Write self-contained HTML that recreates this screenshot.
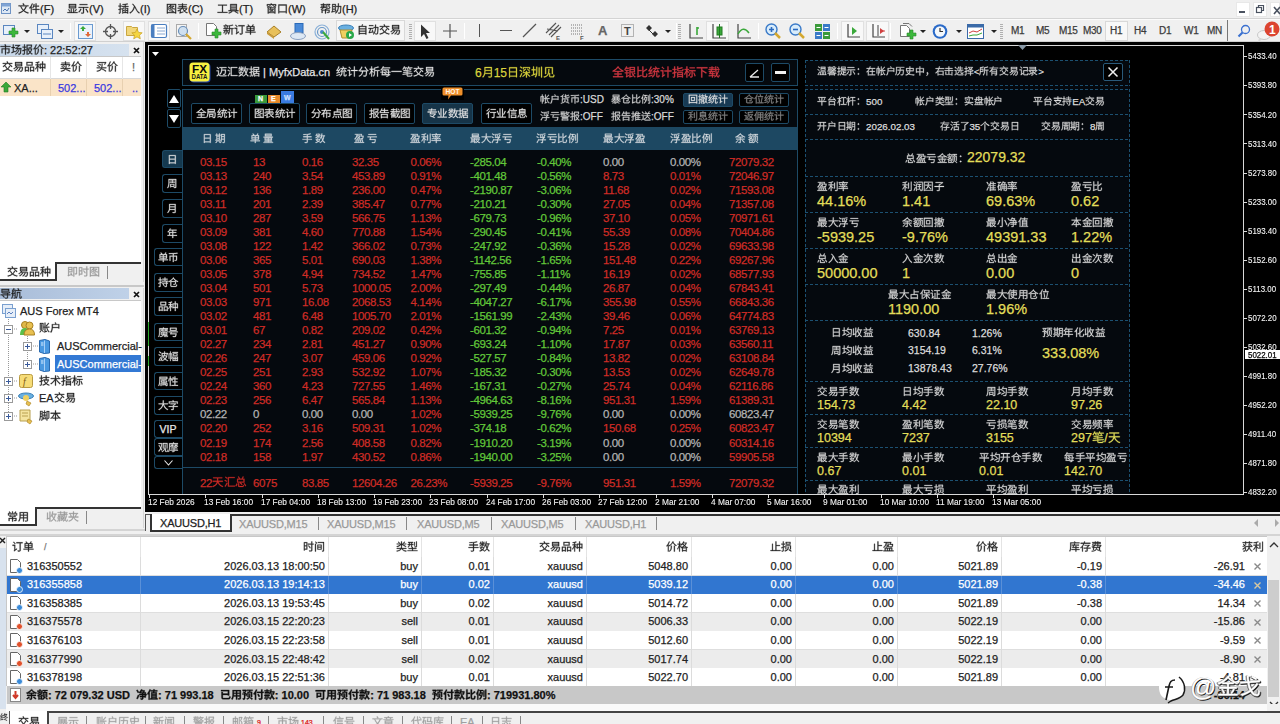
<!DOCTYPE html><html><head><meta charset="utf-8"><style>
*{margin:0;padding:0;box-sizing:border-box}
html,body{width:1280px;height:724px;overflow:hidden;background:#f0f0f0;font-family:"Liberation Sans",sans-serif;font-size:12px;color:#1a1a1a}
.t{position:absolute;white-space:nowrap;-webkit-text-stroke:0.25px currentColor}
.b{position:absolute}
svg{position:absolute;overflow:visible}
.g{position:static;display:inline-block;width:1em;height:1em;vertical-align:-0.12em;fill:currentColor;stroke:currentColor;stroke-width:2.5;overflow:visible}
.g0{d:path("M42 -82C45 -77 48 -71 50 -67L58 -69C57 -73 53 -80 50 -85ZM5 -66V-59H21C26 -44 34 -31 45 -20C34 -11 20 -4 4 1C5 2 8 6 8 8C25 2 39 -5 50 -15C62 -5 75 3 92 7C93 5 95 2 97 0C81 -4 67 -11 56 -20C66 -30 74 -43 80 -59H95V-66ZM50 -25C41 -35 34 -46 28 -59H71C66 -46 59 -34 50 -25Z")}.g1{d:path("M32 -34V-27H60V8H68V-27H95V-34H68V-56H91V-64H68V-83H60V-64H47C48 -68 49 -73 50 -78L43 -79C41 -66 37 -53 31 -45C33 -44 36 -42 37 -41C40 -45 42 -50 45 -56H60V-34ZM27 -84C21 -68 13 -54 3 -44C4 -42 7 -38 8 -36C11 -40 14 -44 17 -48V8H24V-60C28 -67 31 -74 34 -82Z")}.g2{d:path("M24 -57H76V-47H24ZM24 -73H76V-63H24ZM17 -79V-40H83V-79ZM82 -33C79 -27 73 -18 68 -13L74 -10C79 -15 84 -23 88 -30ZM12 -30C16 -23 21 -14 24 -9L30 -12C28 -17 22 -26 18 -32ZM57 -36V-4H42V-36H35V-4H4V3H96V-4H64V-36Z")}.g3{d:path("M23 -35C19 -24 12 -13 4 -6C5 -5 9 -2 10 -1C18 -9 26 -21 31 -33ZM68 -32C76 -22 83 -9 86 -1L93 -4C90 -13 83 -26 75 -35ZM15 -77V-69H85V-77ZM6 -52V-45H46V-2C46 0 46 0 44 0C42 0 35 0 28 0C30 2 31 6 31 8C40 8 46 8 49 7C53 5 54 3 54 -2V-45H94V-52Z")}.g4{d:path("M73 -24V-18H85V-4H69V-54H95V-60H69V-73C77 -74 84 -76 90 -77L86 -83C75 -80 56 -78 40 -77C41 -75 42 -73 42 -71C48 -71 56 -72 62 -72V-60H37V-54H62V-4H46V-18H58V-24H46V-36C50 -38 55 -39 58 -40L55 -47C51 -45 45 -42 40 -41V8H46V3H85V8H92V-43H73V-37H85V-24ZM16 -84V-64H5V-57H16V-34L4 -31L6 -24L16 -27V-1C16 0 16 1 15 1C14 1 11 1 7 1C8 3 9 6 9 8C15 8 18 7 20 6C22 5 23 3 23 -1V-29L34 -32L33 -39L23 -36V-57H33V-64H23V-84Z")}.g5{d:path("M30 -76C36 -71 41 -65 46 -59C39 -31 27 -10 4 1C6 3 10 6 11 7C31 -4 44 -23 52 -49C63 -29 70 -6 93 7C93 5 95 1 96 -2C63 -21 66 -59 34 -82Z")}.g6{d:path("M38 -28C46 -26 56 -23 61 -20L64 -25C59 -28 49 -31 41 -32ZM28 -15C41 -14 59 -10 68 -6L72 -12C62 -15 44 -19 31 -20ZM8 -80V8H16V4H84V8H92V-80ZM16 -3V-73H84V-3ZM41 -71C36 -63 28 -55 19 -50C21 -49 23 -46 24 -45C28 -47 31 -50 34 -52C37 -49 40 -46 44 -43C36 -39 26 -36 17 -35C19 -33 20 -30 21 -28C31 -31 41 -34 51 -40C59 -35 69 -32 78 -30C79 -31 81 -34 82 -35C74 -37 65 -40 57 -43C64 -48 71 -54 75 -61L71 -63L70 -63H44C45 -65 46 -67 48 -69ZM38 -56 38 -57H64C61 -53 56 -50 51 -46C46 -49 41 -53 38 -56Z")}.g7{d:path("M25 8C28 6 31 5 59 -4C59 -5 58 -8 58 -10L34 -3V-25C40 -29 45 -34 49 -38C57 -18 71 -2 92 5C93 3 95 0 97 -2C87 -5 78 -10 71 -16C78 -20 85 -25 91 -30L85 -35C80 -30 73 -25 67 -21C63 -26 59 -32 57 -38H93V-45H54V-54H86V-60H54V-69H90V-75H54V-84H46V-75H10V-69H46V-60H16V-54H46V-45H6V-38H40C30 -30 16 -22 4 -18C5 -17 7 -14 9 -12C14 -14 20 -17 26 -20V-6C26 -2 24 0 22 1C23 3 25 6 25 8Z")}.g8{d:path("M5 -7V0H95V-7H54V-65H90V-73H10V-65H46V-7Z")}.g9{d:path("M60 -8C72 -3 83 3 90 8L96 2C89 -2 77 -9 65 -14ZM33 -13C27 -8 14 -1 4 3C6 4 8 6 10 8C20 4 32 -2 40 -9ZM21 -79V-21H5V-14H95V-21H80V-79ZM28 -21V-30H73V-21ZM28 -59H73V-50H28ZM28 -64V-73H73V-64ZM28 -44H73V-36H28Z")}.g10{d:path("M37 -67C29 -61 18 -56 9 -53L12 -48C23 -51 34 -57 43 -64ZM58 -63C68 -59 81 -52 87 -47L92 -52C85 -57 72 -63 62 -67ZM43 -57C42 -54 39 -50 37 -47H16V8H24V4H77V8H85V-47H45C47 -50 49 -53 51 -56ZM24 -2V-41H77V-2ZM36 -22C40 -20 45 -18 49 -16C43 -12 35 -10 28 -8C29 -7 30 -5 31 -3C39 -5 48 -9 55 -13C60 -10 64 -8 68 -5L71 -9C68 -12 64 -14 59 -17C64 -21 68 -26 70 -32L66 -34L65 -34H43C44 -35 45 -37 45 -39L40 -40C37 -35 33 -29 27 -24C29 -24 31 -22 32 -21C35 -23 37 -26 39 -29H62C60 -25 57 -22 54 -20C49 -22 45 -24 40 -26ZM43 -83C44 -80 45 -78 46 -76H8V-60H15V-70H84V-60H92V-76H55C54 -78 52 -82 50 -84Z")}.g11{d:path("M13 -74V6H20V-3H80V5H88V-74ZM20 -11V-66H80V-11Z")}.g12{d:path("M27 -84V-76H7V-70H27V-63H9V-57H27V-54C27 -53 27 -51 27 -49H5V-43H24C21 -38 15 -34 7 -31C9 -30 11 -27 12 -26C23 -30 29 -37 32 -43H54V-49H34C35 -51 35 -53 35 -54V-57H51V-63H35V-70H53V-76H35V-84ZM58 -80V-30H66V-73H83C80 -69 77 -64 73 -60C82 -55 86 -50 86 -47C86 -44 85 -43 83 -42C82 -42 80 -42 79 -42C76 -41 72 -41 68 -42C69 -40 70 -37 70 -36C74 -35 79 -35 82 -36C84 -36 86 -36 88 -37C91 -39 93 -42 93 -46C93 -51 90 -55 81 -61C86 -66 90 -72 94 -77L89 -80L87 -80ZM15 -26V3H23V-19H46V8H54V-19H79V-6C79 -4 78 -4 77 -4C75 -4 69 -4 63 -4C64 -2 65 0 66 2C74 2 79 2 82 1C86 0 87 -2 87 -6V-26H54V-34H46V-26Z")}.g13{d:path("M63 -84C63 -76 63 -69 63 -61H47V-54H63C61 -30 56 -9 37 3C39 4 41 6 43 8C63 -5 68 -28 70 -54H86C85 -18 84 -4 81 -1C80 0 79 0 77 0C75 0 70 0 64 0C66 2 66 5 67 7C72 7 77 8 80 7C84 7 86 6 88 3C91 -1 92 -15 93 -58C93 -58 93 -61 93 -61H70C71 -69 71 -76 71 -84ZM3 -10 5 -2C17 -5 34 -8 49 -12L49 -19L43 -18V-79H11V-11ZM17 -12V-30H36V-16ZM17 -51H36V-36H17ZM17 -58V-72H36V-58Z")}.g14{d:path("M36 -21C39 -16 43 -10 44 -5L50 -8C48 -12 44 -19 41 -24ZM14 -24C12 -17 8 -11 4 -7C6 -6 8 -4 9 -3C13 -8 17 -15 20 -22ZM55 -74V-40C55 -27 54 -10 46 2C48 3 51 6 52 7C61 -6 62 -26 62 -40V-43H78V8H85V-43H96V-50H62V-69C73 -71 84 -74 93 -77L87 -82C79 -79 66 -76 55 -74ZM21 -83C23 -80 25 -76 26 -74H6V-67H50V-74H34C32 -77 30 -81 28 -84ZM38 -67C36 -62 34 -55 32 -51H5V-44H25V-34H5V-27H25V-2C25 -1 25 0 24 0C23 0 20 0 16 0C17 1 18 4 18 6C23 6 27 6 29 5C31 4 32 2 32 -2V-27H51V-34H32V-44H52V-51H39C41 -55 43 -60 45 -65ZM13 -65C15 -61 16 -55 16 -51L23 -52C22 -56 21 -62 19 -66Z")}.g15{d:path("M11 -77C17 -72 23 -65 27 -60L32 -66C29 -70 22 -77 16 -82ZM20 6C22 4 25 1 46 -13C45 -15 44 -18 44 -20L29 -10V-53H5V-45H22V-10C22 -5 19 -2 17 -1C18 1 20 4 20 6ZM40 -76V-68H70V-3C70 -1 70 -1 68 0C66 0 58 0 51 -1C52 2 54 5 54 8C63 8 70 7 73 6C77 5 78 2 78 -3V-68H96V-76Z")}.g16{d:path("M22 -44H46V-33H22ZM54 -44H78V-33H54ZM22 -60H46V-50H22ZM54 -60H78V-50H54ZM71 -84C69 -78 64 -72 61 -67H37L41 -69C39 -73 34 -79 30 -84L24 -81C27 -76 31 -71 33 -67H15V-26H46V-17H5V-10H46V8H54V-10H95V-17H54V-26H86V-67H69C72 -71 76 -76 79 -81Z")}.g17{d:path("M24 -41H77V-26H24ZM24 -48V-63H77V-48ZM24 -19H77V-5H24ZM46 -84C45 -80 43 -75 42 -70H16V8H24V2H77V8H85V-70H49C51 -74 53 -79 54 -83Z")}.g18{d:path("M9 -76V-69H48V-76ZM65 -82C65 -75 65 -68 65 -61H51V-54H65C64 -31 60 -10 46 2C48 4 50 6 52 8C66 -6 71 -29 72 -54H87C86 -18 85 -5 82 -2C81 -1 80 0 78 0C76 0 71 0 65 -1C66 1 67 4 67 6C73 7 78 7 81 6C84 6 86 5 88 3C92 -2 93 -16 94 -57C94 -58 94 -61 94 -61H72C73 -68 73 -75 73 -82ZM9 -4 9 -4V-4C11 -6 15 -7 43 -13L45 -6L51 -9C49 -16 45 -28 41 -36L35 -35C37 -30 39 -25 41 -19L17 -14C21 -23 24 -35 27 -45H49V-52H5V-45H19C17 -33 12 -22 11 -18C9 -14 8 -12 6 -11C7 -10 8 -6 9 -4Z")}.g19{d:path("M32 -60C26 -52 16 -44 7 -39C9 -38 12 -35 13 -34C22 -39 32 -48 39 -57ZM62 -56C71 -49 82 -40 87 -33L94 -38C88 -44 77 -54 68 -60ZM35 -42 28 -40C32 -30 38 -22 45 -15C34 -7 21 -2 5 1C6 3 8 6 9 8C25 4 39 -2 50 -10C61 -2 74 4 91 7C92 5 94 2 96 0C80 -2 66 -7 56 -15C63 -22 69 -30 73 -41L65 -43C62 -34 57 -26 50 -20C44 -26 39 -34 35 -42ZM42 -82C44 -79 47 -74 48 -70H7V-63H93V-70H52L56 -72C55 -75 52 -81 49 -85Z")}.g20{d:path("M26 -57H75V-47H26ZM26 -73H75V-63H26ZM19 -79V-41H30C23 -32 14 -24 4 -18C6 -17 8 -14 10 -13C15 -16 21 -21 26 -26H40C33 -15 23 -6 12 1C14 2 17 4 18 6C30 -2 41 -13 48 -26H62C57 -14 49 -3 40 4C42 5 45 7 46 8C56 1 64 -12 70 -26H82C80 -8 78 -1 76 1C75 2 74 2 73 2C71 2 66 2 61 1C62 3 63 6 63 8C68 8 73 8 76 8C79 8 81 7 83 5C86 2 88 -7 90 -29C90 -30 90 -32 90 -32H32C34 -35 37 -38 38 -41H83V-79Z")}.g21{d:path("M41 -82C44 -78 46 -73 48 -69H5V-62H46V-48H15V-4H22V-41H46V8H54V-41H78V-13C78 -12 78 -11 76 -11C74 -11 68 -11 62 -11C63 -9 64 -6 64 -4C73 -4 78 -4 82 -5C85 -6 86 -9 86 -13V-48H54V-62H95V-69H55L56 -70C55 -74 52 -80 49 -85Z")}.g22{d:path("M41 -43C42 -44 45 -45 50 -45H57C53 -34 46 -24 36 -18L35 -24L24 -20V-52H35V-60H24V-83H17V-60H5V-52H17V-18C12 -16 7 -14 4 -13L6 -5C15 -9 26 -13 36 -17L36 -18C38 -17 41 -15 42 -14C51 -21 60 -32 64 -45H72C66 -23 55 -7 38 4C40 5 42 7 44 8C61 -3 72 -21 79 -45H86C84 -15 82 -4 80 -1C79 0 78 0 76 0C74 0 71 0 66 0C68 2 68 5 69 7C73 7 77 7 79 7C82 7 84 6 86 4C90 0 92 -13 94 -48C94 -49 94 -52 94 -52H54C64 -58 74 -66 85 -76L79 -80L78 -79H38V-72H70C61 -64 51 -58 48 -55C44 -53 40 -51 38 -50C39 -49 40 -45 41 -43Z")}.g23{d:path("M42 -81V8H50V-40H53C57 -29 62 -19 68 -11C63 -6 57 -1 50 3C52 4 54 6 55 8C62 5 68 0 73 -6C78 0 84 4 91 8C92 6 95 3 96 1C90 -2 83 -6 78 -11C85 -21 90 -33 93 -45L88 -47L86 -46H50V-74H82C81 -65 81 -61 80 -59C79 -59 78 -59 75 -59C73 -59 67 -59 60 -59C61 -58 62 -55 62 -53C69 -53 75 -52 78 -53C82 -53 84 -54 86 -55C88 -58 89 -63 90 -77C90 -78 90 -81 90 -81ZM60 -40H84C82 -32 78 -24 73 -17C68 -24 63 -31 60 -40ZM19 -84V-64H5V-56H19V-35L3 -31L5 -23L19 -27V-1C19 0 18 1 17 1C15 1 10 1 4 1C6 3 6 6 7 8C15 8 20 8 22 7C25 5 26 3 26 -1V-30L39 -33L38 -40L26 -37V-56H38V-64H26V-84Z")}.g24{d:path("M72 -45V8H80V-45ZM44 -45V-31C44 -22 43 -6 28 4C30 5 33 7 34 9C50 -3 52 -20 52 -31V-45ZM60 -84C55 -72 44 -56 26 -46C27 -45 30 -42 30 -41C45 -49 55 -60 62 -72C70 -60 81 -48 92 -42C93 -44 95 -46 97 -48C85 -54 73 -66 66 -78L68 -83ZM27 -84C22 -69 13 -54 4 -44C5 -42 7 -38 8 -37C11 -40 14 -44 17 -48V8H24V-60C28 -67 31 -74 34 -82Z")}.g25{d:path("M30 -73H70V-54H30ZM23 -80V-46H78V-80ZM8 -36V8H16V3H36V7H44V-36ZM16 -5V-29H36V-5ZM55 -36V8H62V3H85V7H92V-36ZM62 -5V-29H85V-5Z")}.g26{d:path("M65 -56V-32H51V-56ZM73 -56H87V-32H73ZM65 -84V-63H44V-18H51V-24H65V8H73V-24H87V-19H94V-63H73V-84ZM37 -83C29 -79 16 -76 5 -74C6 -73 6 -70 7 -69C11 -69 16 -70 21 -71V-56H5V-49H20C16 -37 9 -24 2 -17C4 -15 5 -12 6 -10C11 -16 17 -26 21 -37V8H28V-38C31 -34 35 -27 37 -24L42 -30C40 -33 31 -44 28 -47V-49H41V-56H28V-72C33 -74 37 -75 41 -77Z")}.g27{d:path("M23 -45C30 -42 38 -39 42 -36L46 -40C42 -44 34 -47 27 -49ZM13 -35C20 -33 28 -29 32 -26L36 -31C32 -34 24 -38 17 -40ZM54 -7C68 -3 82 3 91 8L95 2C86 -3 71 -9 58 -13ZM8 -58V-51H83C81 -47 78 -43 76 -40L82 -37C86 -42 90 -49 93 -56L88 -58L86 -58H54V-67H87V-73H54V-84H46V-73H14V-67H46V-58ZM52 -48C52 -39 51 -31 49 -25H6V-18H46C40 -8 29 -2 7 2C8 3 10 6 10 8C37 4 49 -5 54 -18H94V-25H57C59 -32 59 -39 60 -48Z")}.g28{d:path("M53 -12C66 -6 80 2 88 8L93 2C85 -4 70 -12 57 -17ZM22 -60C29 -56 37 -52 42 -48L46 -54C42 -57 33 -62 26 -64ZM11 -45C18 -42 26 -38 30 -34L35 -40C30 -43 22 -47 15 -50ZM7 -30V-23H46C41 -11 30 -3 5 2C7 3 9 6 9 8C37 3 49 -7 54 -23H94V-30H56C58 -40 59 -51 59 -64H52C52 -51 51 -39 49 -30ZM85 -78V-77H11V-70H82C80 -65 77 -60 75 -56L81 -53C85 -59 90 -68 93 -76L88 -78L86 -78Z")}.g29{d:path("M42 -52V-38H18V-52ZM42 -59H18V-72H42ZM32 -23C33 -20 35 -17 37 -13L18 -7V-32H49V-79H11V-9C11 -5 8 -4 6 -3C8 -1 9 3 10 5C12 3 15 2 40 -7C42 -3 44 0 45 3L52 -1C49 -7 43 -18 38 -26ZM58 -78V8H66V-71H84V-20C84 -19 84 -19 82 -19C81 -19 76 -19 71 -19C72 -17 73 -14 73 -12C80 -12 85 -12 88 -13C91 -14 91 -16 91 -20V-78Z")}.g30{d:path("M47 -45C53 -38 60 -27 63 -21L69 -25C66 -31 59 -41 54 -48ZM32 -40V-17H15V-40ZM32 -47H15V-69H32ZM8 -76V-2H15V-11H39V-76ZM76 -84V-64H44V-57H76V-3C76 -1 76 -1 74 -1C71 0 64 0 56 -1C57 2 58 5 59 7C69 7 75 7 79 6C83 4 84 2 84 -3V-57H96V-64H84V-84Z")}.g31{d:path("M21 -18C27 -13 34 -5 37 0L43 -5C40 -10 33 -17 27 -22H65V-1C65 0 64 1 62 1C60 1 53 1 46 1C47 3 48 6 48 8C58 8 64 8 68 6C71 6 72 4 72 -1V-22H94V-29H72V-37H65V-29H6V-22H26ZM14 -77V-51C14 -41 18 -39 35 -39C39 -39 71 -39 75 -39C88 -39 91 -42 92 -52C90 -52 87 -53 85 -54C84 -47 83 -46 74 -46C67 -46 40 -46 34 -46C23 -46 21 -47 21 -51V-56H83V-80H14ZM21 -73H75V-63H21Z")}.g32{d:path("M20 -59C22 -55 25 -49 26 -45L31 -47C30 -51 27 -57 25 -61ZM20 -28C22 -24 26 -17 27 -13L32 -15C30 -19 27 -26 24 -30ZM60 -83C62 -78 65 -72 66 -67L74 -70C72 -74 69 -80 66 -85ZM44 -67V-61H95V-67ZM53 -51V-29C53 -19 52 -5 42 4C44 5 46 7 48 8C58 -2 60 -17 60 -29V-44H77V-5C77 2 77 4 79 5C80 6 82 7 84 7C85 7 88 7 89 7C90 7 92 7 93 6C95 5 95 4 96 2C96 0 97 -6 97 -11C95 -11 93 -12 92 -14C92 -8 92 -5 91 -3C91 -1 91 0 90 0C90 0 89 0 88 0C88 0 86 0 86 0C85 0 85 0 84 0C84 0 84 -2 84 -4V-51ZM35 -66V-40H18V-66ZM4 -40V-34H11C11 -22 10 -6 3 5C5 6 8 8 9 9C16 -3 18 -21 18 -34H35V-1C35 0 34 1 33 1C32 1 28 1 24 1C25 2 26 5 26 7C32 7 36 7 38 6C40 5 41 3 41 -1V-72H26C28 -75 29 -79 31 -83L23 -85C22 -81 21 -76 20 -72H11V-40Z")}.g33{d:path("M21 -67V-38C21 -25 20 -7 4 3C5 4 7 6 8 7C25 -4 27 -23 27 -38V-67ZM25 -13C30 -8 35 0 37 5L42 1C40 -4 34 -11 30 -16ZM8 -79V-18H14V-73H34V-18H40V-79ZM84 -80C79 -70 71 -60 62 -54C63 -52 66 -50 67 -48C76 -55 85 -66 91 -77ZM50 8C52 7 54 6 74 -2C73 -4 73 -6 73 -8L58 -3V-38H67C71 -19 79 -3 91 6C93 4 95 1 96 0C85 -7 78 -22 74 -38H94V-45H58V-82H51V-45H42V-38H51V-4C51 0 49 2 47 2C48 4 50 7 50 8Z")}.g34{d:path("M25 -62H77V-41H25L25 -47ZM44 -83C46 -78 48 -73 50 -68H17V-47C17 -32 16 -11 3 4C5 5 8 7 10 9C20 -3 23 -20 24 -34H77V-28H84V-68H53L57 -70C56 -74 54 -80 51 -84Z")}.g35{d:path("M61 -84V-68H38V-61H61V-46H40V-39H43L43 -39C47 -28 52 -19 59 -12C51 -6 42 -1 32 1C34 3 35 6 36 8C46 5 56 0 65 -6C72 0 81 5 92 8C93 6 95 3 96 2C86 -1 78 -5 70 -11C80 -20 87 -31 91 -44L86 -46L85 -46H69V-61H93V-68H69V-84ZM50 -39H81C78 -30 72 -22 65 -16C59 -23 54 -30 50 -39ZM18 -84V-64H5V-57H18V-35C12 -33 8 -32 4 -31L6 -24L18 -27V-1C18 0 17 1 16 1C15 1 10 1 6 1C6 3 8 6 8 8C15 8 19 8 22 6C24 5 25 3 25 -1V-30L37 -33L36 -40L25 -37V-57H36V-64H25V-84Z")}.g36{d:path("M61 -78C67 -73 75 -67 79 -63L84 -68C80 -72 72 -78 66 -82ZM46 -84V-59H7V-51H44C35 -34 19 -18 4 -10C5 -8 8 -6 9 -4C23 -11 36 -25 46 -40V8H54V-44C64 -28 78 -13 90 -4C92 -6 94 -9 96 -11C83 -19 67 -36 57 -51H93V-59H54V-84Z")}.g37{d:path("M84 -78C76 -75 63 -71 52 -69V-84H44V-55C44 -46 47 -44 59 -44C61 -44 80 -44 82 -44C92 -44 94 -48 96 -61C94 -61 90 -63 89 -64C88 -53 87 -51 82 -51C78 -51 62 -51 59 -51C53 -51 52 -52 52 -55V-62C64 -65 79 -68 89 -72ZM51 -13H84V-3H51ZM51 -20V-30H84V-20ZM44 -36V8H51V3H84V8H91V-36ZM18 -84V-64H4V-57H18V-35L3 -31L5 -24L18 -28V-1C18 1 18 1 16 1C15 1 11 1 6 1C7 3 8 6 9 8C16 8 20 8 22 7C25 5 26 3 26 -1V-30L39 -34L38 -41L26 -37V-57H38V-64H26V-84Z")}.g38{d:path("M47 -76V-69H90V-76ZM78 -32C83 -22 87 -10 89 -2L96 -4C94 -12 89 -25 84 -34ZM49 -34C46 -24 42 -13 36 -6C38 -5 41 -3 42 -2C48 -9 53 -21 56 -33ZM42 -52V-45H64V-2C64 0 63 0 62 0C60 0 56 0 50 0C52 2 53 5 53 8C60 8 64 7 67 6C70 5 71 3 71 -2V-45H96V-52ZM20 -84V-63H5V-56H19C15 -43 9 -29 2 -22C4 -20 6 -16 7 -14C12 -21 16 -31 20 -42V8H28V-44C31 -40 35 -33 37 -30L41 -36C39 -39 31 -50 28 -53V-56H41V-63H28V-84Z")}.g39{d:path("M9 -80V-44C9 -30 8 -9 3 5C4 5 7 7 8 8C12 -2 14 -14 14 -26H26V-1C26 0 26 1 25 1C24 1 20 1 17 1C18 2 18 6 19 7C24 7 27 7 30 6C32 5 32 3 32 -1V-80ZM15 -74H26V-57H15ZM15 -50H26V-33H14L15 -44ZM69 -78V8H76V-71H87V-17C87 -16 86 -16 85 -16C84 -16 81 -16 78 -16C79 -14 80 -11 80 -9C85 -9 88 -9 90 -10C93 -11 93 -14 93 -17V-78ZM38 -3 38 -3C39 -4 42 -4 60 -8C60 -5 61 -3 61 -2L66 -4C66 -10 62 -21 59 -30L54 -28C56 -24 57 -18 59 -14L44 -11C47 -19 50 -28 52 -38H66V-45H54V-60H64V-67H54V-84H48V-67H37V-60H48V-45H35V-38H46C44 -28 40 -18 39 -15C38 -12 37 -9 35 -9C36 -7 37 -4 38 -3Z")}.g40{d:path("M46 -84V-63H6V-55H37C29 -38 17 -22 4 -14C6 -12 8 -10 9 -8C24 -18 37 -36 44 -55H46V-18H23V-11H46V8H54V-11H77V-18H54V-55H55C63 -36 76 -18 91 -8C92 -10 95 -13 96 -15C83 -23 70 -38 63 -55H94V-63H54V-84Z")}.g41{d:path("M31 -49H69V-39H31ZM15 -25V4H23V-18H47V8H55V-18H78V-4C78 -3 78 -3 76 -3C75 -3 70 -3 64 -3C64 -1 66 2 66 4C74 4 79 4 82 3C85 2 86 0 86 -4V-25H55V-34H77V-55H24V-34H47V-25ZM17 -80C20 -77 23 -72 25 -68H9V-47H16V-62H85V-47H92V-68H54V-84H47V-68H26L32 -71C30 -75 27 -80 24 -83ZM76 -83C74 -80 71 -74 68 -71L74 -68C77 -72 81 -76 84 -80Z")}.g42{d:path("M15 -77V-41C15 -27 14 -9 3 4C5 4 8 7 9 8C17 0 20 -12 22 -23H47V7H54V-23H81V-2C81 0 81 0 79 0C77 0 70 0 63 0C64 2 65 6 66 7C75 8 81 7 84 6C88 5 89 3 89 -2V-77ZM23 -70H47V-54H23ZM81 -70V-54H54V-70ZM23 -47H47V-30H22C23 -34 23 -37 23 -41ZM81 -47V-30H54V-47Z")}.g43{d:path("M59 -57H80C78 -45 75 -34 70 -25C65 -34 61 -45 58 -56ZM58 -84C55 -67 50 -50 41 -40C43 -39 45 -35 46 -34C49 -38 52 -42 54 -47C57 -36 61 -26 66 -18C60 -10 53 -3 43 2C44 4 47 7 48 8C57 3 64 -4 70 -12C76 -3 83 3 91 8C92 6 95 3 96 2C88 -3 81 -10 75 -18C81 -28 85 -42 88 -57H96V-64H61C63 -70 64 -76 65 -83ZM9 -10C11 -12 14 -13 32 -20V8H40V-82H32V-27L17 -22V-73H10V-24C10 -20 8 -18 6 -17C7 -15 9 -12 9 -10Z")}.g44{d:path("M83 -47C82 -38 79 -30 76 -23C75 -31 74 -41 73 -53H95V-60H89L91 -62C90 -64 85 -68 82 -70L77 -66C80 -64 83 -62 85 -60H73L73 -66H70V-71H94V-77H70V-84H62V-77H37V-84H30V-77H6V-71H30V-64H37V-71H62V-63H66L66 -60H23V-42H14V-59H9V-33H14V-36H23V-32V-28H4V-21H10V-17C10 -11 9 -2 3 5C5 6 7 7 8 8C14 1 15 -10 15 -17V-21H22C22 -12 20 -3 16 5C18 6 21 7 22 8C28 -3 29 -20 29 -32V-53H66C67 -37 69 -24 71 -14C69 -11 67 -8 65 -6V-9H54V-16H64V-35H54V-42H64V-47H34V2H40V-4H63C60 -1 57 2 54 4C56 5 59 7 60 8C65 4 70 -1 74 -6C77 3 82 8 87 8C93 8 96 6 97 -8C95 -8 93 -10 91 -11C91 -1 90 1 88 2C84 2 81 -3 78 -13C84 -22 88 -33 90 -46ZM48 -9H40V-16H48ZM48 -35H40V-42H48ZM40 -30H58V-21H40Z")}.g45{d:path("M18 -57C21 -51 25 -43 26 -38L33 -40C32 -45 28 -53 24 -59ZM74 -60C71 -54 67 -45 63 -40L69 -38C73 -43 78 -51 81 -57ZM46 -84V-69H9V-62H46C46 -52 46 -44 44 -37H6V-29H42C37 -15 27 -5 5 2C6 3 8 6 9 8C34 1 45 -11 50 -28C58 -10 71 2 90 8C92 6 94 2 95 1C77 -4 64 -14 57 -29H94V-37H52C53 -44 54 -52 54 -62H91V-69H54L54 -84Z")}.g46{d:path("M6 -75C12 -70 19 -63 23 -59L29 -64C25 -68 17 -75 11 -79ZM26 -48H5V-41H19V-10C14 -8 10 -4 5 0L10 7C15 2 19 -4 23 -4C25 -4 28 -1 32 2C39 5 48 6 59 6C69 6 86 6 94 5C94 3 95 -1 96 -3C86 -2 71 -1 60 -1C49 -1 40 -2 34 -5C30 -7 28 -9 26 -10ZM32 -77V-70H49C49 -48 46 -26 30 -14C32 -13 34 -11 36 -9C48 -18 53 -32 55 -48H82C81 -27 80 -19 78 -17C77 -16 76 -16 75 -16C73 -16 68 -16 63 -16C64 -14 65 -11 65 -9C70 -9 75 -9 78 -9C81 -10 83 -10 84 -12C87 -16 89 -25 90 -51C90 -52 90 -55 90 -55H56C56 -60 57 -65 57 -70H95V-77Z")}.g47{d:path("M9 -77C15 -73 22 -68 26 -64L31 -70C27 -73 20 -78 14 -82ZM4 -49C10 -46 18 -41 22 -38L26 -44C22 -47 15 -51 9 -54ZM6 1 13 6C18 -3 25 -15 30 -25L24 -30C18 -19 11 -6 6 1ZM93 -78H34V3H95V-4H42V-71H93Z")}.g48{d:path("M44 -82C42 -78 39 -72 37 -69L42 -66C44 -70 48 -75 51 -79ZM9 -79C11 -75 14 -70 15 -66L21 -69C20 -72 17 -78 14 -82ZM41 -26C39 -21 36 -16 32 -13C28 -14 24 -16 20 -18C22 -20 23 -23 25 -26ZM11 -15C16 -13 21 -11 26 -8C20 -4 12 0 4 1C5 3 7 5 8 7C17 5 25 1 33 -5C36 -3 39 -1 41 1L46 -4C44 -6 41 -8 38 -10C43 -15 47 -22 50 -31L45 -33L44 -32H28L30 -38L23 -39C23 -37 22 -34 21 -32H7V-26H18C15 -22 13 -18 11 -15ZM26 -84V-65H5V-59H23C19 -53 11 -46 4 -44C5 -42 7 -40 8 -38C14 -41 21 -47 26 -53V-40H33V-54C38 -50 44 -46 46 -44L50 -49C48 -51 39 -56 34 -59H53V-65H33V-84ZM63 -83C60 -66 56 -49 48 -38C50 -37 53 -35 54 -34C56 -37 59 -42 61 -47C63 -37 66 -28 69 -20C64 -10 56 -3 45 2C46 4 49 7 49 8C60 3 67 -4 73 -13C78 -4 84 2 92 7C93 5 96 3 97 1C89 -3 82 -11 77 -20C82 -30 86 -43 88 -58H95V-65H66C68 -70 69 -76 70 -82ZM81 -58C79 -46 77 -36 73 -28C70 -37 67 -47 65 -58Z")}.g49{d:path("M48 -24V8H55V4H86V8H93V-24H73V-36H96V-43H73V-54H92V-80H40V-49C40 -34 39 -12 28 4C30 4 33 7 34 8C43 -4 46 -21 46 -36H66V-24ZM47 -73H85V-60H47ZM47 -54H66V-43H47L47 -49ZM55 -2V-17H86V-2ZM17 -84V-64H4V-57H17V-35C12 -33 7 -32 3 -31L5 -24L17 -27V-1C17 0 16 0 15 0C14 0 10 0 6 0C6 2 8 6 8 7C14 7 18 7 20 6C23 5 24 3 24 -1V-30L35 -33L34 -40L24 -37V-57H35V-64H24V-84Z")}.g50{d:path("M70 -35V-4C70 4 72 6 78 6C80 6 86 6 87 6C94 6 95 2 96 -11C94 -12 91 -13 89 -14C89 -2 89 -1 86 -1C85 -1 81 -1 80 -1C78 -1 77 -1 77 -4V-35ZM51 -35C50 -15 48 -4 32 2C33 3 36 6 36 8C54 0 58 -13 58 -35ZM4 -5 6 2C15 -1 27 -4 38 -8L37 -15C25 -11 12 -7 4 -5ZM60 -82C61 -78 64 -73 65 -70H41V-63H59C54 -56 47 -47 45 -45C43 -43 41 -43 39 -42C40 -40 41 -37 41 -35C44 -36 48 -36 84 -40C86 -37 88 -35 89 -33L95 -36C92 -42 85 -51 80 -58L74 -55C76 -52 79 -49 81 -46L53 -44C58 -49 63 -57 68 -63H95V-70H66L72 -72C71 -75 69 -80 66 -84ZM6 -42C8 -43 10 -44 22 -45C18 -39 14 -34 12 -32C9 -28 6 -26 4 -26C5 -24 6 -20 7 -18C9 -20 12 -21 37 -26C37 -28 37 -30 37 -33L18 -29C26 -38 33 -48 39 -59L33 -63C31 -60 29 -56 26 -52L14 -51C20 -60 26 -70 31 -81L23 -84C19 -72 12 -59 9 -56C7 -53 5 -50 3 -50C4 -48 6 -44 6 -42Z")}.g51{d:path("M14 -78C19 -73 26 -66 30 -62L35 -67C31 -71 24 -78 19 -82ZM5 -53V-45H20V-9C20 -5 17 -2 16 -1C17 1 19 4 20 6C21 4 24 2 43 -12C42 -13 41 -16 40 -18L28 -10V-53ZM63 -84V-51H37V-43H63V8H70V-43H96V-51H70V-84Z")}.g52{d:path("M67 -82 60 -79C68 -65 80 -48 90 -39C92 -41 94 -44 96 -46C86 -53 74 -69 67 -82ZM32 -82C27 -67 16 -53 4 -44C6 -43 10 -40 11 -38C14 -41 16 -43 19 -46V-39H38C36 -22 30 -6 6 2C8 4 10 6 11 8C37 -1 43 -19 46 -39H73C72 -14 70 -4 68 -1C67 0 66 0 64 0C61 0 55 0 49 -1C50 1 51 4 51 7C58 7 64 7 67 7C70 7 73 6 75 3C78 0 80 -12 81 -43C81 -44 81 -46 81 -46H19C28 -55 35 -67 40 -80Z")}.g53{d:path("M48 -73V-42C48 -28 47 -9 38 4C40 5 43 7 44 8C54 -6 55 -27 55 -42V-43H74V8H81V-43H96V-50H55V-68C67 -70 80 -73 90 -77L84 -83C75 -79 61 -75 48 -73ZM21 -84V-63H6V-55H20C17 -42 10 -26 3 -18C4 -16 6 -13 7 -11C12 -17 17 -28 21 -39V8H28V-41C32 -36 36 -29 37 -26L42 -32C40 -35 32 -46 28 -50V-55H43V-63H28V-84Z")}.g54{d:path("M39 -46C45 -43 53 -38 57 -34H27L29 -50H75L74 -34H57L62 -39C58 -43 50 -47 43 -50ZM4 -35V-28H18C17 -19 16 -11 15 -5H19L72 -5C71 -2 71 0 70 1C69 2 68 2 66 2C64 2 60 2 55 2C56 3 56 6 57 8C62 8 67 8 70 8C73 8 75 7 77 4C78 3 79 0 80 -5H92V-12H80C81 -16 81 -21 82 -28H96V-35H82L82 -53C82 -54 83 -57 83 -57H22C22 -50 21 -42 20 -35ZM73 -12H56L60 -16C56 -20 48 -25 41 -28H74C74 -21 73 -16 73 -12ZM36 -24C43 -21 50 -16 54 -12H24L26 -28H41ZM27 -85C22 -72 13 -59 4 -51C6 -50 9 -48 11 -46C16 -52 22 -59 26 -67H92V-74H30C32 -77 33 -80 35 -82Z")}.g55{d:path("M4 -43V-35H96V-43Z")}.g56{d:path("M6 -16 6 -9 43 -12V-4C43 5 46 7 57 7C60 7 77 7 80 7C89 7 92 4 93 -8C91 -8 88 -9 86 -11C85 -1 84 0 80 0C76 0 60 0 57 0C51 0 50 0 50 -4V-13L94 -17L94 -23L50 -20V-30L85 -33L85 -39L50 -36V-46C63 -47 75 -49 85 -51L81 -57C65 -53 37 -50 13 -49C13 -47 14 -44 14 -43C24 -43 33 -44 43 -45V-36L11 -33L11 -27L43 -30V-19ZM18 -84C15 -74 10 -64 4 -58C5 -57 8 -55 10 -54C13 -58 16 -63 19 -68H24C27 -63 30 -58 31 -54L37 -57C36 -60 34 -64 32 -68H48V-74H22C24 -77 25 -80 26 -83ZM58 -84C55 -75 50 -65 43 -59C45 -58 48 -56 49 -55C53 -58 56 -63 59 -68H66C68 -64 71 -60 72 -57L78 -59C77 -62 76 -65 74 -68H94V-74H62C63 -77 64 -80 65 -83Z")}.g57{d:path("M21 -79V-48C21 -32 19 -12 3 3C5 4 8 6 9 8C18 0 23 -12 26 -23H74V-3C74 -1 74 0 71 0C69 0 61 0 52 0C54 2 55 5 56 8C66 8 73 8 77 6C81 5 82 2 82 -3V-79ZM28 -71H74V-55H28ZM28 -48H74V-30H27C28 -36 28 -42 28 -48Z")}.g58{d:path("M25 -35H75V-7H25ZM25 -43V-70H75V-43ZM18 -77V7H25V0H75V6H83V-77Z")}.g59{d:path("M33 -78V-60H40V-72H85V-61H92V-78ZM51 -65C46 -58 39 -51 32 -46C33 -45 36 -42 37 -41C45 -46 53 -55 58 -63ZM66 -62C73 -56 81 -47 85 -41L91 -46C87 -51 79 -60 72 -66ZM8 -77C14 -74 21 -70 25 -67L29 -73C25 -76 18 -80 12 -83ZM4 -50C10 -47 18 -43 22 -39L26 -46C22 -49 14 -53 8 -56ZM6 1 12 6C17 -3 23 -15 27 -26L22 -31C17 -20 11 -7 6 1ZM58 -47V-36H32V-29H54C48 -18 38 -8 27 -3C28 -2 31 1 32 2C42 -3 52 -13 58 -24V8H66V-24C72 -14 81 -3 90 2C91 0 93 -2 95 -4C86 -9 76 -18 70 -29H92V-36H66V-47Z")}.g60{d:path("M64 -76V-5H72V-76ZM84 -82V7H92V-82ZM44 -81V-47C44 -29 43 -12 32 2C34 3 37 5 39 7C51 -9 52 -28 52 -47V-81ZM4 -13 6 -5C15 -9 27 -14 38 -18L37 -25L25 -21V-52H38V-60H25V-83H18V-60H5V-52H18V-18C12 -16 8 -14 4 -13Z")}.g61{d:path("M52 -30V-5C52 3 55 6 64 6C66 6 80 6 82 6C92 6 94 2 95 -14C93 -14 90 -16 88 -17C87 -3 87 -1 82 -1C79 -1 67 -1 65 -1C60 -1 59 -2 59 -5V-30ZM45 -62C44 -26 43 -7 5 2C6 3 8 6 9 8C49 -2 52 -24 53 -62ZM18 -78V-21H26V-71H74V-21H82V-78Z")}.g62{d:path("M49 -85C39 -69 21 -54 3 -46C4 -45 7 -42 8 -40C12 -42 16 -44 20 -47V-40H46V-25H20V-18H46V-2H8V5H93V-2H54V-18H81V-25H54V-40H81V-47C85 -44 88 -42 92 -40C94 -42 96 -44 98 -46C81 -55 67 -65 54 -79L56 -82ZM20 -47C31 -54 42 -64 50 -74C60 -63 70 -55 81 -47Z")}.g63{d:path("M83 -55V-42H54V-55ZM83 -61H54V-73H83ZM46 8C48 7 51 6 72 0C71 -2 71 -5 71 -7L54 -2V-36H63C68 -16 77 0 92 7C93 5 95 2 97 1C89 -2 83 -8 78 -15C84 -18 90 -23 95 -27L90 -32C86 -29 80 -24 75 -20C72 -25 70 -30 69 -36H90V-80H46V-5C46 -1 44 1 43 2C44 3 45 6 46 8ZM18 -84C15 -74 9 -65 3 -60C5 -58 7 -54 7 -52C11 -56 14 -60 17 -65H40V-73H21C22 -76 24 -79 25 -82ZM19 7C21 6 24 4 42 -6C42 -7 41 -10 41 -12L27 -5V-28H41V-34H27V-48H39V-55H11V-48H20V-34H6V-28H20V-6C20 -2 18 0 16 1C17 2 19 6 19 7Z")}.g64{d:path("M12 7C15 6 18 4 46 -5C46 -7 45 -10 45 -13L21 -5V-46H46V-53H21V-83H13V-7C13 -3 10 0 9 1C10 2 12 5 12 7ZM53 -84V-9C53 2 56 5 66 5C68 5 79 5 81 5C91 5 93 -2 94 -22C92 -22 89 -24 87 -25C86 -6 86 -2 81 -2C78 -2 68 -2 66 -2C62 -2 61 -3 61 -8V-38C72 -44 84 -52 93 -59L86 -66C80 -59 71 -52 61 -46V-84Z")}.g65{d:path("M6 -77V-69H44V8H52V-45C64 -39 77 -31 84 -25L89 -32C81 -38 65 -47 53 -53L52 -51V-69H95V-77Z")}.g66{d:path("M74 -78C78 -74 84 -69 86 -65L92 -69C89 -73 84 -78 79 -82ZM84 -50C81 -41 78 -31 73 -23C71 -32 70 -43 69 -55H95V-61H69C68 -68 68 -76 68 -84H61C61 -76 61 -69 61 -61H37V-70H54V-76H37V-84H30V-76H10V-70H30V-61H5V-55H62C63 -39 65 -25 68 -14C63 -8 57 -2 51 3C52 4 55 7 56 8C61 4 66 -1 70 -6C74 2 79 7 86 7C93 7 95 3 96 -12C94 -13 92 -15 90 -16C90 -5 89 0 86 0C82 0 78 -5 76 -14C82 -24 87 -36 91 -48ZM6 -9 7 -2 33 -5V8H40V-6L58 -8V-14L40 -12V-21H56V-28H40V-36H33V-28H19C22 -31 24 -35 26 -39H58V-45H29C30 -48 31 -50 32 -53L25 -55C24 -52 22 -48 21 -45H7V-39H18C17 -36 15 -33 14 -32C13 -29 11 -27 10 -27C11 -25 12 -22 12 -20C13 -21 16 -21 20 -21H33V-11Z")}.g67{d:path("M15 -79V-55C15 -39 14 -16 3 1C4 2 8 4 9 5C17 -7 21 -23 22 -38H84C82 -12 81 -2 79 0C78 1 77 1 75 1C74 1 69 1 63 1C64 3 65 6 65 8C71 8 76 8 79 8C82 7 84 7 86 4C89 1 90 -10 91 -41C91 -42 91 -44 91 -44H22L23 -53H84V-79ZM23 -72H77V-60H23ZM31 -30V2H38V-4H69V-30ZM38 -24H62V-10H38Z")}.g68{d:path("M40 -84C38 -79 37 -74 35 -69H6V-61H31C25 -48 15 -36 3 -28C4 -26 6 -23 8 -21C13 -25 18 -29 22 -34V-1H30V-36H51V8H58V-36H81V-11C81 -10 81 -9 79 -9C77 -9 72 -9 65 -9C66 -7 67 -4 68 -2C76 -2 82 -2 85 -4C88 -5 89 -7 89 -11V-43H81H58V-57H51V-43H29C33 -49 37 -55 40 -61H94V-69H43C45 -73 46 -78 48 -82Z")}.g69{d:path("M24 -46H76V-29H24ZM34 -13C35 -6 36 2 36 7L44 6C44 1 43 -7 41 -13ZM55 -13C58 -6 61 2 62 7L69 5C68 0 65 -8 62 -14ZM75 -14C80 -7 86 2 88 7L95 4C93 -1 87 -10 82 -16ZM18 -16C15 -8 10 0 4 5L11 8C16 3 22 -6 25 -14ZM17 -54V-22H84V-54H53V-66H91V-73H53V-84H46V-54Z")}.g70{d:path("M25 -83C21 -72 15 -60 7 -53C9 -52 13 -50 14 -49C17 -53 21 -58 24 -63H48V-47H6V-40H94V-47H56V-63H87V-70H56V-84H48V-70H27C29 -73 31 -77 32 -81ZM18 -30V9H26V3H75V9H83V-30ZM26 -4V-23H75V-4Z")}.g71{d:path("M72 -78C78 -74 84 -68 87 -64L92 -68C89 -72 83 -78 78 -82ZM31 -50C33 -47 35 -44 36 -42H22C23 -45 25 -47 26 -50L20 -52C16 -43 10 -35 4 -29C5 -28 8 -26 9 -25C10 -26 12 -28 14 -30V6H20V1H53L50 3C52 4 54 6 55 8C61 4 66 0 70 -6C74 2 79 7 85 7C92 7 95 2 96 -13C94 -13 92 -15 90 -16C89 -5 88 0 86 0C82 0 78 -5 75 -13C82 -22 86 -33 90 -45L83 -47C81 -38 77 -29 72 -22C70 -30 69 -41 68 -53H95V-60H68C67 -67 67 -75 67 -84H60C60 -76 60 -67 60 -60H35V-68H54V-75H35V-84H28V-75H10V-68H28V-60H5V-53H61C62 -38 64 -24 67 -14C64 -9 60 -5 56 -1V-6H41V-12H54V-18H41V-24H54V-29H41V-36H56V-42H43C42 -45 39 -49 37 -52ZM34 -24V-18H20V-24ZM34 -29H20V-36H34ZM34 -12V-6H20V-12Z")}.g72{d:path("M42 -84 39 -73H14V-66H37L34 -54H6V-46H31C29 -40 27 -33 25 -28H71C66 -22 58 -15 52 -9C44 -12 37 -14 30 -16L26 -11C41 -6 61 2 71 8L75 2C71 -1 65 -4 59 -6C68 -15 78 -25 86 -32L80 -36L79 -35H35L39 -46H93V-54H41L45 -66H86V-73H47L50 -83Z")}.g73{d:path("M85 -61C81 -50 74 -35 69 -26L75 -23C81 -32 87 -46 92 -58ZM8 -59C14 -48 19 -32 22 -24L29 -26C27 -35 20 -50 15 -61ZM58 -83V-5H42V-83H34V-5H6V3H94V-5H66V-83Z")}.g74{d:path("M44 -78V-71H93V-78ZM27 -84C22 -77 12 -68 4 -62C5 -61 7 -58 8 -56C17 -63 27 -72 34 -81ZM39 -50V-43H73V-2C73 0 72 0 70 0C68 1 62 1 54 0C56 2 57 6 57 8C67 8 72 8 76 7C79 5 80 3 80 -2V-43H96V-50ZM31 -63C24 -51 13 -40 2 -32C4 -31 7 -27 8 -26C12 -29 15 -32 19 -36V8H27V-45C31 -50 35 -55 38 -60Z")}.g75{d:path("M38 -53V-47H87V-53ZM38 -39V-33H87V-39ZM31 -68V-61H95V-68ZM54 -82C57 -77 60 -72 61 -68L68 -71C66 -74 64 -80 61 -84ZM37 -24V8H43V4H81V8H88V-24ZM43 -2V-18H81V-2ZM26 -84C20 -68 12 -54 3 -44C4 -42 7 -38 7 -37C11 -40 14 -45 17 -50V8H24V-62C27 -68 30 -75 32 -82Z")}.g76{d:path("M27 -55H73V-47H27ZM27 -41H73V-33H27ZM27 -69H73V-61H27ZM26 -20V-4C26 4 29 6 41 6C43 6 61 6 64 6C74 6 76 3 77 -10C75 -10 72 -11 70 -12C70 -2 69 -1 63 -1C59 -1 44 -1 41 -1C35 -1 34 -1 34 -4V-20ZM76 -19C81 -13 86 -4 87 1L94 -2C93 -8 88 -16 83 -22ZM15 -20C12 -14 8 -6 4 0L11 3C15 -2 19 -11 21 -18ZM42 -24C47 -19 53 -13 55 -8L61 -12C59 -16 53 -23 48 -27H80V-75H51C52 -77 54 -80 55 -84L46 -85C46 -82 44 -78 43 -75H19V-27H47Z")}.g77{d:path("M84 -80C79 -70 69 -60 60 -54C61 -52 64 -50 65 -48C75 -55 85 -66 91 -77ZM48 8C50 7 53 6 73 -2C73 -4 73 -7 73 -9L57 -3V-38H66C70 -19 79 -3 91 6C92 4 95 1 96 0C85 -7 77 -21 73 -38H95V-45H57V-82H50V-45H41V-38H50V-4C50 0 47 1 45 2C46 4 48 7 48 8ZM6 -65V-12H12V-58H19V8H26V-58H32V-21C32 -20 32 -20 31 -20C30 -20 28 -20 26 -20C26 -18 27 -15 27 -13C31 -13 34 -13 36 -14C38 -16 38 -18 38 -20V-65H26V-84H19V-65Z")}.g78{d:path("M46 -31V-22C46 -14 43 -5 6 2C8 3 10 6 11 8C49 0 54 -12 54 -22V-31ZM53 -7C65 -3 82 3 90 8L94 2C85 -3 69 -9 57 -12ZM19 -42V-10H27V-35H74V-11H82V-42ZM52 -84V-69C47 -68 42 -66 37 -66C38 -64 39 -62 39 -60L52 -63V-58C52 -50 55 -48 65 -48C67 -48 81 -48 83 -48C91 -48 94 -50 94 -62C92 -62 89 -63 88 -64C87 -56 87 -54 83 -54C80 -54 68 -54 66 -54C60 -54 60 -55 60 -58V-64C72 -67 84 -71 92 -76L87 -81C81 -77 71 -74 60 -71V-84ZM33 -84C26 -76 15 -68 4 -62C6 -61 8 -58 10 -57C14 -60 18 -62 23 -66V-46H30V-72C34 -75 37 -78 40 -82Z")}.g79{d:path("M89 -81C69 -78 35 -76 7 -75C8 -73 9 -70 9 -68C20 -68 33 -69 46 -70V-53H15V-4H23V-46H46V8H54V-46H78V-14C78 -13 77 -12 76 -12C74 -12 68 -12 62 -12C63 -10 64 -7 65 -5C73 -5 78 -5 81 -6C85 -7 86 -10 86 -14V-53H54V-70C68 -71 82 -73 92 -74Z")}.g80{d:path("M24 -64H76V-57H24ZM24 -75H76V-69H24ZM13 0 16 6C24 3 34 0 44 -4L43 -9C32 -6 20 -2 13 0ZM46 -22V1C46 2 46 2 45 2C43 2 39 2 34 2C35 4 36 6 36 8C43 8 47 8 50 7C53 6 53 4 53 1V-22ZM54 -4C64 -2 76 3 82 6L86 1C79 -2 67 -6 58 -9ZM27 -16C29 -14 32 -10 34 -8L40 -11C38 -14 35 -17 32 -19ZM68 -20C66 -18 63 -13 61 -11L66 -8C68 -10 72 -14 74 -17ZM11 -45V-40H30V-32H6V-26H28C21 -21 12 -16 4 -14C5 -13 7 -10 8 -9C18 -12 30 -18 37 -26H64C71 -19 82 -13 92 -10C93 -11 95 -14 97 -15C89 -17 79 -21 73 -26H94V-32H70V-40H89V-45H70V-52H84V-80H17V-52H30V-45ZM38 -52H62V-45H38ZM38 -32V-40H62V-32Z")}.g81{d:path("M50 -84C40 -68 22 -54 3 -46C5 -44 7 -41 8 -39C13 -41 18 -44 23 -47V-8C23 3 27 5 41 5C44 5 67 5 70 5C82 5 85 1 87 -14C84 -15 81 -16 79 -17C78 -4 77 -2 70 -2C64 -2 45 -2 41 -2C32 -2 31 -3 31 -8V-41H69C68 -29 67 -24 66 -23C65 -22 64 -22 62 -22C60 -22 55 -22 50 -22C51 -20 52 -18 52 -16C57 -15 63 -15 66 -16C68 -16 71 -16 72 -18C75 -21 76 -28 76 -45C76 -46 76 -48 76 -48H25C34 -55 43 -63 50 -72C62 -58 76 -49 92 -40C93 -43 95 -45 97 -47C80 -54 66 -64 54 -78L57 -81Z")}.g82{d:path("M69 -72V-16H76V-72ZM85 -84V-2C85 -1 85 0 83 0C81 0 76 0 70 0C71 2 72 5 73 7C80 7 85 7 88 6C91 5 92 2 92 -2V-84ZM36 -29C39 -26 44 -23 46 -20C42 -10 36 -2 28 2C30 4 32 6 33 8C49 -3 59 -24 62 -55L58 -56L57 -56H44C45 -61 47 -66 48 -71H64V-78H30V-71H40C37 -55 32 -40 25 -31C27 -30 30 -27 31 -26C35 -32 39 -40 42 -49H55C54 -41 52 -34 49 -27C46 -29 43 -32 40 -34ZM21 -84C17 -69 11 -55 3 -45C4 -43 6 -39 7 -38C10 -41 12 -44 14 -48V8H21V-63C24 -69 26 -76 28 -82Z")}.g83{d:path("M87 -84C75 -80 52 -78 33 -77C34 -75 35 -73 35 -71C54 -72 77 -74 92 -78ZM36 -66C39 -62 42 -55 44 -50L50 -53C49 -57 46 -64 43 -69ZM55 -68C57 -63 59 -56 60 -52L67 -54C66 -58 64 -65 61 -70ZM82 -72C80 -66 76 -58 72 -53L78 -50C82 -55 86 -63 89 -70ZM9 -78C15 -74 23 -69 27 -66L31 -72C27 -75 19 -80 13 -83ZM4 -51C10 -47 18 -43 22 -40L26 -46C22 -49 14 -53 8 -56ZM6 2 13 7C18 -3 25 -15 30 -26L24 -31C19 -19 11 -6 6 2ZM59 -31V-26H31V-19H59V0C59 1 59 1 57 1C56 2 50 2 45 1C46 3 48 6 48 8C55 8 59 8 62 7C66 6 66 4 66 0V-19H94V-26H66V-29C73 -33 81 -40 86 -46L81 -50L80 -49H37V-42H73C69 -38 64 -34 59 -31Z")}.g84{d:path("M13 -78V-71H87V-78ZM5 -54V-47H29C28 -39 26 -29 24 -22H25L75 -22C74 -8 72 -2 70 0C69 1 67 1 65 1C62 1 53 1 45 1C46 3 47 6 48 8C55 8 63 8 67 8C71 8 74 7 76 5C80 2 81 -6 83 -26C83 -27 83 -29 83 -29H34C35 -35 36 -41 38 -47H94V-54Z")}.g85{d:path("M19 -20V-15H81V-20ZM19 -28V-24H81V-28ZM18 -11V8H26V5H75V8H82V-11ZM26 1V-6H75V1ZM44 -43C45 -41 46 -40 47 -38H7V-32H93V-38H55C54 -40 52 -43 51 -45ZM15 -72C13 -67 9 -61 3 -57C5 -56 7 -55 8 -53C9 -54 10 -56 12 -57V-43H17V-46H32C33 -44 33 -43 33 -42C36 -42 39 -42 40 -42C42 -42 44 -43 45 -44C47 -46 48 -51 48 -65C48 -66 48 -68 48 -68H20L21 -71L20 -71H24V-75H35V-71H41V-75H53V-80H41V-84H35V-80H24V-84H17V-80H5V-75H17V-71ZM64 -84C61 -76 56 -68 49 -62C51 -61 53 -59 54 -58C56 -60 58 -63 60 -65C63 -61 65 -58 69 -54C64 -51 58 -49 52 -47C54 -46 56 -43 56 -42C63 -44 68 -47 73 -50C79 -46 85 -43 92 -41C93 -43 95 -45 96 -47C89 -48 83 -51 78 -54C82 -59 86 -64 88 -70H95V-76H67C68 -78 69 -80 70 -83ZM81 -70C79 -66 77 -62 73 -58C70 -62 67 -66 64 -70ZM42 -63C41 -53 40 -49 40 -48C39 -47 38 -47 38 -47L35 -47V-60H15L17 -63ZM17 -56H29V-50H17Z")}.g86{d:path("M64 -81C67 -76 70 -70 71 -66H51C54 -71 56 -76 57 -82L50 -83C46 -69 38 -54 29 -45C31 -44 33 -42 34 -40L24 -37V-57H35V-64H24V-84H17V-64H4V-57H17V-35L3 -31L5 -23L17 -27V-1C17 0 16 1 15 1C14 1 10 1 6 0C7 3 8 6 8 8C14 8 18 8 21 6C23 5 24 3 24 -1V-30L36 -33L35 -40L35 -39C38 -43 40 -46 43 -51V8H50V1H95V-6H74V-20H92V-26H74V-39H92V-46H74V-59H93V-66H72L78 -69C77 -73 74 -79 71 -83ZM50 -39H67V-26H50ZM50 -46V-59H67V-46ZM50 -20H67V-6H50Z")}.g87{d:path("M41 -81C44 -76 48 -70 50 -66L56 -69C54 -72 50 -79 47 -84ZM8 -79C13 -74 20 -66 22 -61L29 -65C26 -70 19 -78 14 -83ZM79 -84C76 -78 73 -71 69 -65H35V-58H59V-47L59 -44H32V-37H58C56 -28 50 -19 32 -12C34 -10 37 -8 38 -6C52 -13 60 -21 63 -30C72 -22 81 -12 86 -7L91 -12C85 -18 74 -28 65 -37V-37H95V-44H66L66 -47V-58H92V-65H77C80 -70 84 -76 86 -82ZM25 -50H5V-43H18V-12C13 -10 8 -5 2 1L8 8C13 1 17 -5 20 -5C22 -5 26 -2 30 1C37 6 46 7 59 7C69 7 88 6 95 6C95 3 96 0 97 -3C87 -2 72 -1 59 -1C48 -1 39 -1 32 -6C29 -8 27 -9 25 -11Z")}.g88{d:path("M37 -50H62V-27H37ZM30 -57V-20H69V-57ZM8 -80V8H16V2H84V8H92V-80ZM16 -5V-72H84V-5Z")}.g89{d:path("M31 -74V-67H41C39 -62 36 -57 35 -56C33 -54 32 -53 31 -52C32 -51 33 -48 33 -46C35 -47 38 -48 57 -51L58 -46L64 -49C62 -53 59 -59 56 -64L51 -62C52 -60 54 -58 55 -56L40 -54C43 -58 46 -62 48 -67H66V-74H52C51 -77 50 -80 48 -84L42 -82C43 -80 44 -76 45 -74ZM15 -84V-64H5V-57H15V-34L3 -31L5 -24L15 -27V0C15 1 15 1 14 1C12 1 10 1 6 1C7 3 8 6 8 8C13 8 16 8 19 6C21 5 22 3 22 0V-29L32 -32L30 -39L22 -36V-57H30V-64H22V-84ZM40 -24H54V-16H40ZM40 -30V-38H54V-30ZM34 -44V7H40V-11H54V0C54 1 54 1 53 1C52 1 49 1 46 1C47 3 48 5 48 7C52 7 56 7 58 6C60 5 61 3 61 0V-44ZM75 -60H85C84 -48 82 -37 80 -27C77 -37 75 -47 74 -56ZM73 -85C71 -68 68 -53 62 -42C63 -41 66 -38 66 -37C68 -39 69 -42 70 -45C72 -36 73 -27 76 -18C73 -10 68 -3 61 3C62 4 64 7 65 8C71 3 76 -3 80 -10C83 -3 87 3 92 8C93 6 95 3 96 2C90 -3 86 -10 83 -17C88 -29 90 -43 92 -60H96V-67H76C78 -72 79 -78 79 -84Z")}.g90{d:path("M37 -66V-58H91V-66ZM44 -51C46 -37 50 -18 50 -8L58 -10C57 -20 54 -38 50 -52ZM57 -83C59 -78 61 -71 62 -67L69 -69C68 -73 66 -80 64 -85ZM33 -3V4H96V-3H75C78 -17 83 -36 85 -52L77 -53C76 -38 72 -17 68 -3ZM29 -84C23 -68 14 -53 4 -44C5 -42 7 -38 8 -36C12 -40 15 -44 18 -48V8H26V-60C29 -67 33 -74 36 -82Z")}.g91{d:path("M59 -72V-17H67V-72ZM84 -82V-2C84 0 83 0 81 1C79 1 73 1 66 0C67 3 68 6 69 8C78 8 84 8 87 7C90 5 91 3 91 -2V-82ZM46 -83C36 -79 19 -76 4 -74C5 -72 6 -70 7 -68C13 -69 19 -70 26 -71V-54H5V-47H24C20 -34 11 -20 3 -13C4 -11 6 -8 7 -6C14 -13 21 -24 26 -36V8H33V-32C38 -27 45 -21 48 -17L52 -24C49 -26 38 -36 33 -40V-47H53V-54H33V-72C40 -74 46 -76 51 -78Z")}.g92{d:path("M7 -77C12 -72 18 -64 21 -60L28 -65C24 -69 18 -76 13 -80ZM25 -47H5V-40H17V-11C13 -10 8 -6 3 0L8 6C13 1 17 -5 21 -5C23 -5 26 -2 30 0C38 4 46 5 58 5C69 5 86 5 94 4C94 2 95 -2 96 -4C86 -2 71 -2 59 -2C48 -2 39 -2 32 -6C29 -8 27 -9 25 -10ZM48 -41C53 -37 59 -32 64 -28C58 -22 50 -17 42 -14C44 -13 46 -10 46 -8C55 -12 63 -16 70 -23C76 -18 81 -12 85 -8L91 -14C87 -18 81 -23 75 -28C81 -36 86 -45 90 -57L85 -59L84 -58H46V-70C62 -71 80 -73 93 -76L87 -82C76 -79 56 -78 38 -77V-55C38 -42 37 -26 28 -14C30 -13 33 -11 34 -10C43 -21 46 -38 46 -52H80C78 -44 74 -38 69 -33C64 -37 58 -42 53 -45Z")}.g93{d:path("M36 -76V-40C36 -27 35 -9 26 4C27 4 30 7 31 8C38 0 41 -12 42 -23H60V7H68V-23H86V-1C86 0 85 1 84 1C83 1 78 1 73 1C74 3 75 6 76 8C82 8 87 8 90 6C92 5 93 3 93 -1V-76ZM43 -70H60V-53H43ZM86 -70V-53H68V-70ZM43 -46H60V-30H43C43 -34 43 -37 43 -40ZM86 -46V-30H68V-46ZM26 -84C21 -68 12 -53 2 -44C3 -42 5 -38 6 -36C9 -40 13 -44 16 -49V8H23V-60C27 -67 31 -74 34 -82Z")}.g94{d:path("M18 -14C15 -8 10 -1 4 4C6 5 9 7 10 8C16 3 21 -5 25 -12ZM32 -11C36 -6 41 0 42 4L49 1C46 -4 42 -10 38 -14ZM86 -72V-56H65V-72ZM58 -79V-43C58 -28 57 -9 49 4C50 5 54 7 55 8C61 -1 63 -14 64 -26H86V-2C86 0 85 0 84 0C82 0 77 0 72 0C73 2 74 6 74 8C81 8 86 8 89 6C92 5 93 3 93 -2V-79ZM86 -49V-33H65C65 -36 65 -40 65 -43V-49ZM39 -83V-71H20V-83H14V-71H5V-64H14V-23H4V-16H53V-23H46V-64H53V-71H46V-83ZM20 -64H39V-55H20ZM20 -49H39V-39H20ZM20 -33H39V-23H20Z")}.g95{d:path("M25 -66H75V-61H25ZM25 -76H75V-71H25ZM18 -81V-56H82V-81ZM5 -52V-46H95V-52ZM23 -27H46V-22H23ZM54 -27H78V-22H54ZM23 -37H46V-32H23ZM54 -37H78V-32H54ZM5 0V6H96V0H54V-6H87V-11H54V-17H85V-42H16V-17H46V-11H13V-6H46V0Z")}.g96{d:path("M5 -32V-25H46V-2C46 0 45 0 43 0C41 0 33 0 25 0C26 2 27 6 28 8C38 8 45 8 49 6C52 5 54 3 54 -2V-25H95V-32H54V-48H90V-56H54V-72C66 -73 77 -75 85 -78L80 -84C64 -79 35 -76 12 -75C12 -74 13 -71 13 -69C24 -69 35 -70 46 -71V-56H12V-48H46V-32Z")}.g97{d:path("M16 -26V-2H4V5H96V-2H84V-26ZM23 -2V-20H36V-2ZM43 -2V-20H56V-2ZM64 -2V-20H77V-2ZM29 -49C33 -48 37 -45 41 -43C37 -39 32 -36 26 -34C27 -33 29 -31 30 -29C36 -32 42 -35 47 -39C51 -36 54 -34 57 -31L62 -36C59 -38 55 -41 51 -44C55 -49 58 -55 59 -63L55 -64L54 -64H31C32 -67 33 -70 33 -73H67C65 -66 64 -60 62 -55H83C82 -44 81 -40 79 -38C78 -37 77 -37 76 -37C74 -37 69 -37 64 -38C65 -36 66 -33 66 -31C71 -31 76 -31 78 -31C82 -31 83 -32 85 -34C88 -36 89 -42 91 -58C91 -59 91 -61 91 -61H71C72 -67 74 -73 75 -79H8V-73H26C23 -54 16 -41 3 -32C5 -31 8 -29 9 -27C19 -34 26 -45 30 -58H51C50 -54 48 -50 46 -47C42 -50 38 -52 34 -53Z")}.g98{d:path("M83 -64C79 -60 73 -55 69 -52L74 -48C79 -51 85 -56 89 -60ZM6 -34 9 -28C16 -31 24 -35 32 -39L30 -45C21 -41 12 -36 6 -34ZM8 -60C14 -56 20 -52 24 -48L29 -53C26 -56 19 -61 14 -64ZM68 -41C75 -37 83 -31 87 -27L93 -31C89 -35 80 -41 73 -45ZM5 -20V-13H46V8H54V-13H95V-20H54V-28H46V-20ZM44 -83C45 -80 47 -78 48 -75H7V-68H44C41 -63 37 -59 36 -58C35 -56 33 -55 32 -55C32 -53 33 -50 34 -48C35 -49 38 -49 49 -50C44 -45 40 -42 38 -40C34 -37 32 -35 30 -35C30 -33 32 -30 32 -28C34 -29 37 -30 64 -32C65 -30 66 -29 66 -27L72 -30C70 -34 65 -42 61 -47L55 -44C57 -42 58 -40 60 -38L42 -36C51 -43 60 -52 68 -62L62 -65C60 -62 57 -59 55 -57L42 -56C45 -60 49 -64 52 -68H94V-75H57C56 -78 53 -82 51 -85Z")}.g99{d:path("M25 -64H75V-56H25ZM25 -76H75V-68H25ZM18 -81V-51H83V-81ZM40 -39V-32H21V-39ZM5 -4 5 2 40 -2V8H47V-3L52 -3V-9L47 -9V-39H95V-46H5V-39H14V-5ZM51 -33V-27H57L55 -26C58 -19 62 -12 67 -7C62 -3 55 0 49 2C50 4 52 6 53 8C60 5 66 2 72 -3C78 2 84 6 92 8C93 6 95 3 96 2C89 0 83 -3 77 -7C84 -14 89 -22 92 -31L88 -33L86 -33ZM61 -27H83C81 -21 77 -16 72 -11C68 -16 64 -21 61 -27ZM40 -27V-20H21V-27ZM40 -14V-8L21 -6V-14Z")}.g100{d:path("M46 -84C46 -76 46 -66 45 -55H6V-48H43C39 -29 29 -9 4 2C6 3 9 6 10 8C34 -3 45 -23 50 -42C58 -19 71 -1 90 8C92 6 94 2 96 1C76 -7 63 -26 56 -48H94V-55H53C54 -66 54 -76 54 -84Z")}.g101{d:path("M65 -17C72 -11 82 -2 86 4L93 0C88 -6 78 -15 71 -21ZM27 -20C22 -13 14 -6 6 -1C7 0 10 3 12 4C19 -1 28 -10 34 -18ZM50 -85C39 -71 20 -58 2 -50C4 -48 6 -46 8 -44C13 -46 18 -49 24 -53V-46H46V-34H10V-27H46V-1C46 0 46 1 44 1C43 1 37 1 31 1C32 3 34 6 34 8C42 8 47 8 50 7C53 6 54 3 54 -1V-27H91V-34H54V-46H76V-53H25C34 -60 43 -67 50 -74C62 -61 76 -52 93 -45C94 -47 96 -50 98 -51C81 -58 66 -66 54 -80L56 -82Z")}.g102{d:path("M69 -49C69 -18 68 -5 46 3C47 4 49 7 50 8C73 0 75 -16 76 -49ZM74 -8C80 -4 89 3 93 8L97 2C93 -2 84 -8 78 -13ZM53 -61V-14H60V-55H85V-14H92V-61H73C74 -64 76 -68 77 -71H95V-78H52V-71H70C69 -68 68 -64 66 -61ZM21 -82C23 -80 24 -77 25 -74H6V-59H13V-68H43V-59H50V-74H33C32 -77 30 -81 28 -84ZM13 -23V7H19V4H37V7H44V-23ZM19 -2V-17H37V-2ZM15 -42 22 -38C17 -34 10 -30 4 -28C5 -27 6 -24 7 -22C15 -25 22 -29 29 -34C35 -30 41 -27 45 -24L50 -29C46 -32 40 -35 34 -39C39 -44 43 -49 46 -56L42 -58L40 -58H25C26 -60 27 -62 28 -64L21 -65C18 -58 13 -50 4 -44C5 -43 8 -41 8 -40C14 -43 18 -48 21 -52H36C34 -48 31 -45 28 -42L20 -46Z")}.g103{d:path("M7 -46V-38H43C40 -24 30 -9 4 2C6 3 8 6 9 8C35 -3 46 -18 50 -32C58 -13 72 1 92 8C93 6 95 3 97 1C76 -5 62 -19 56 -38H94V-46H53C53 -49 53 -53 53 -57V-69H89V-76H10V-69H45V-57C45 -53 45 -49 45 -46Z")}.g104{d:path("M76 -21C82 -14 88 -5 90 1L96 -3C94 -9 88 -18 82 -25ZM41 -27C48 -22 55 -15 59 -10L65 -15C61 -20 53 -27 46 -31ZM28 -24V-3C28 5 31 7 43 7C46 7 63 7 66 7C75 7 77 4 78 -7C76 -8 73 -9 71 -10C71 -1 70 0 65 0C61 0 46 0 44 0C37 0 36 0 36 -4V-24ZM14 -22C12 -15 8 -6 4 -1L11 2C16 -4 19 -13 21 -21ZM26 -57H74V-39H26ZM19 -64V-32H82V-64H66C69 -69 73 -75 76 -81L68 -84C66 -78 61 -70 58 -64H37L43 -67C41 -72 36 -78 32 -84L26 -81C30 -76 34 -68 36 -64Z")}.g105{d:path("M15 -79V-47C15 -31 14 -11 3 4C5 5 8 7 9 9C21 -7 22 -30 22 -47V-72H80V-2C80 0 80 1 78 1C76 1 70 1 64 1C65 3 66 6 66 8C75 8 80 8 84 7C87 5 88 3 88 -2V-79ZM47 -70V-62H29V-56H47V-46H26V-40H75V-46H54V-56H73V-62H54V-70ZM31 -31V1H38V-5H70V-31ZM38 -25H63V-11H38Z")}.g106{d:path("M5 -22V-15H51V8H59V-15H95V-22H59V-42H88V-49H59V-65H91V-72H31C32 -75 34 -79 35 -82L28 -84C23 -71 15 -58 5 -50C7 -48 10 -46 12 -45C17 -50 22 -57 27 -65H51V-49H21V-22ZM29 -22V-42H51V-22Z")}.g107{d:path("M45 -20C49 -15 54 -7 56 -3L62 -6C60 -11 55 -18 51 -24ZM63 -84V-71H41V-64H63V-52H36V-45H76V-33H37V-26H76V-1C76 0 75 1 74 1C72 1 67 1 62 1C62 3 64 6 64 8C71 8 76 8 79 7C82 6 83 3 83 -1V-26H95V-33H83V-45H96V-52H70V-64H91V-71H70V-84ZM17 -84V-64H4V-57H17V-35C12 -33 7 -32 3 -31L5 -24L17 -28V-1C17 0 17 1 15 1C14 1 10 1 6 1C7 3 8 6 8 8C14 8 18 8 21 6C23 5 24 3 24 -1V-30L35 -33L34 -40L24 -37V-57H35V-64H24V-84Z")}.g108{d:path("M56 -13V-1C56 5 59 6 68 6C70 6 85 6 87 6C94 6 96 4 96 -4C95 -4 92 -5 91 -6C91 1 90 2 86 2C83 2 71 2 68 2C64 2 63 1 63 -1V-13ZM37 -68V-63H22V-58H34C31 -54 25 -50 20 -48C21 -47 23 -45 24 -43C28 -46 33 -50 37 -54V-43H43V-54C46 -52 51 -49 53 -48L56 -52C55 -53 48 -56 44 -58H57V-63H43V-68ZM73 -68V-63H60V-58H70C66 -54 61 -50 56 -48C57 -48 59 -46 60 -44C64 -46 69 -50 73 -54V-43H79V-54C83 -50 88 -46 92 -43C93 -45 95 -47 96 -48C91 -50 86 -54 82 -58H94V-63H79V-68ZM33 -25H52C51 -23 51 -21 50 -19H33ZM59 -25H81V-19H57C58 -21 58 -23 59 -25ZM33 -35H53L52 -29H33ZM60 -35H81V-29H60ZM51 -46C50 -44 49 -42 48 -40H27V-14H48C43 -6 34 -1 17 2C18 4 20 7 21 8C41 4 50 -3 56 -14H88V-40H55C56 -41 57 -42 58 -44ZM67 0C68 -1 70 -1 83 -3L85 0L88 -2C87 -4 85 -8 83 -11L79 -10L82 -6L73 -6C75 -7 76 -10 78 -12L74 -14C72 -10 69 -7 68 -6C67 -5 67 -5 66 -4C66 -3 67 -1 67 0ZM47 -83C48 -81 49 -78 50 -76H12V-45C12 -30 11 -10 3 4C4 5 8 7 9 8C17 -7 18 -29 18 -45V-70H95V-76H58C58 -79 56 -82 55 -84Z")}.g109{d:path("M26 -73H74V-60H26ZM18 -80V-53H82V-80ZM6 -44V-37H27C25 -31 22 -24 20 -19H73C71 -8 69 -2 66 0C65 1 64 1 62 1C59 1 51 1 44 0C46 2 47 5 47 7C54 8 60 8 64 8C68 8 70 7 73 5C76 2 79 -6 81 -22C81 -24 82 -26 82 -26H32L35 -37H93V-44Z")}.g110{d:path("M9 -78C15 -74 23 -70 26 -66L31 -72C27 -76 19 -80 14 -83ZM4 -51C10 -48 18 -43 22 -40L26 -46C22 -49 14 -54 8 -56ZM6 2 13 7C18 -3 24 -15 28 -26L23 -30C18 -19 11 -6 6 2ZM60 -62V-45H43V-62ZM35 -70V-44C35 -30 34 -10 23 4C25 5 28 7 30 8C40 -5 42 -23 42 -38H45C49 -28 54 -19 61 -11C54 -5 46 -1 37 2C38 3 41 6 42 8C51 5 59 0 66 -6C73 0 82 5 92 8C93 6 95 3 97 2C87 -1 79 -5 72 -11C79 -19 85 -30 89 -43L84 -45L82 -45H67V-62H86C84 -58 82 -53 81 -50L87 -48C90 -53 93 -61 96 -68L90 -70L89 -70H67V-84H60V-70ZM52 -38H79C76 -29 72 -22 66 -16C60 -22 56 -30 52 -38Z")}.g111{d:path("M43 -79V-72H95V-79ZM55 -60H83V-48H55ZM48 -65V-42H90V-65ZM7 -65V-13H12V-58H20V8H26V-58H34V-21C34 -20 34 -20 33 -20C32 -20 30 -20 28 -20C29 -18 30 -15 30 -14C34 -14 36 -14 38 -15C39 -16 40 -18 40 -21V-65H26V-84H20V-65ZM50 -12H65V-2H50ZM87 -12V-2H71V-12ZM50 -18V-28H65V-18ZM87 -18H71V-28H87ZM44 -34V8H50V5H87V8H94V-34Z")}.g112{d:path("M21 -74H81V-65H21ZM14 -80V-50C14 -34 13 -12 3 4C5 4 8 6 10 7C20 -9 21 -33 21 -50V-59H89V-80ZM36 -38H54V-31H36ZM60 -38H79V-31H60ZM67 -12 70 -8 60 -7V-15H83V1C83 2 83 3 82 3C80 3 77 3 72 2C73 4 74 6 74 8C81 8 85 8 87 7C90 6 90 4 90 1V-20H60V-26H86V-43H60V-49C69 -50 78 -50 84 -52L80 -56C68 -54 45 -53 27 -52C28 -51 28 -49 29 -48C37 -48 45 -48 54 -48V-43H29V-26H54V-20H25V8H32V-15H54V-7L36 -6L36 -1C46 -1 60 -2 73 -3L76 2L80 0C78 -3 75 -9 71 -13Z")}.g113{d:path("M17 -84V8H25V-84ZM8 -65C7 -57 6 -46 3 -39L9 -37C11 -44 13 -56 14 -64ZM25 -66C28 -60 31 -53 32 -48L38 -51C37 -55 34 -62 31 -68ZM33 -3V4H95V-3H70V-28H90V-35H70V-56H92V-63H70V-84H62V-63H50C51 -68 52 -73 53 -78L46 -79C44 -66 40 -52 34 -44C36 -43 39 -41 40 -40C43 -44 45 -50 47 -56H62V-35H41V-28H62V-3Z")}.g114{d:path("M46 -36V-30H7V-23H46V-1C46 0 46 0 44 1C42 1 35 1 29 0C30 2 31 6 32 8C40 8 46 8 49 7C53 5 54 3 54 -1V-23H93V-30H54V-34C63 -38 72 -45 78 -52L73 -56L71 -55H23V-48H64C58 -44 52 -39 46 -36ZM42 -82C44 -80 46 -76 48 -74H8V-53H15V-66H84V-53H92V-74H56C55 -77 52 -81 50 -85Z")}.g115{d:path("M46 -79V-26H53V-72H83V-26H90V-79ZM64 -64V-45C64 -29 61 -10 36 2C37 4 39 6 40 8C57 -1 65 -13 68 -25V-2C68 4 71 6 78 6H86C95 6 96 2 97 -14C95 -14 92 -15 91 -17C90 -2 90 0 86 0H79C76 0 75 0 75 -3V-27H69C70 -33 71 -39 71 -45V-64ZM6 -56C11 -48 17 -39 22 -30C17 -18 11 -8 3 -2C5 0 8 2 9 4C16 -3 22 -11 27 -22C30 -16 32 -11 34 -6L40 -11C38 -16 35 -23 31 -31C36 -43 39 -58 41 -75L36 -77L35 -76H5V-69H33C31 -58 29 -48 26 -39C21 -46 16 -53 11 -60Z")}.g116{d:path("M81 -39C69 -36 46 -35 26 -34C27 -33 28 -31 28 -30C36 -30 45 -30 54 -31V-24H25V-19H54V-12H20V-7H54V0C54 2 53 2 52 2C50 2 44 2 37 2C38 4 39 6 40 8C48 8 54 8 57 7C60 6 61 5 61 0V-7H95V-12H61V-19H91V-24H61V-31C70 -32 79 -33 86 -34ZM37 -68V-62H22V-57H35C31 -51 25 -46 20 -44C21 -43 23 -41 24 -40C28 -42 33 -46 37 -51V-38H43V-51C46 -48 50 -45 52 -44L56 -48C54 -49 46 -54 43 -56V-57H56V-62H43V-68ZM73 -68V-62H59V-57H71C67 -52 61 -47 56 -44C57 -43 59 -41 60 -40C64 -42 69 -47 73 -51V-39H79V-52C83 -47 88 -42 92 -40C93 -41 95 -43 96 -44C91 -47 85 -52 81 -57H94V-62H79V-68ZM48 -83C49 -81 50 -78 51 -76H11V-45C11 -30 10 -10 3 4C5 4 8 7 9 8C16 -7 18 -30 18 -45V-70H95V-76H59C58 -79 57 -82 55 -85Z")}.g117{d:path("M44 -58H79V-48H44ZM44 -73H79V-64H44ZM38 -80V-41H86V-80ZM10 -77C16 -75 24 -70 28 -67L32 -73C28 -76 20 -80 14 -83ZM4 -50C10 -47 18 -43 22 -39L26 -45C22 -49 14 -53 8 -56ZM6 2 13 6C18 -3 25 -16 30 -26L24 -31C19 -19 12 -6 6 2ZM26 -2V5H96V-2H89V-33H34V-2ZM41 -2V-26H51V-2ZM57 -2V-26H66V-2ZM72 -2V-26H82V-2Z")}.g118{d:path("M26 -84V-79H7V-74H26V-70H10V-65H49V-70H33V-74H51V-79H33V-84ZM59 -82V-77C59 -74 58 -71 50 -69C51 -68 53 -66 53 -64C63 -67 65 -72 65 -77V-77H77V-74C77 -69 78 -66 83 -66C84 -66 89 -66 90 -66C92 -66 94 -67 95 -67C95 -68 95 -70 94 -72C93 -71 91 -71 90 -71C89 -71 85 -71 84 -71C83 -71 83 -72 83 -74V-82ZM55 -55C58 -53 63 -52 67 -50C61 -48 55 -46 49 -45C50 -44 51 -42 52 -40C59 -42 67 -44 73 -47C80 -44 86 -41 91 -38L94 -43C90 -45 85 -48 79 -50C83 -54 87 -58 89 -63L86 -64L84 -64H54V-59H81C78 -57 76 -55 73 -53C68 -55 63 -57 58 -59ZM27 -56V-50H18C18 -51 18 -52 18 -54V-56ZM32 -56H42V-50H32ZM12 -61V-54C12 -48 10 -42 4 -36C5 -36 8 -33 9 -32C13 -36 16 -40 17 -45H48V-61ZM8 -30V-24H37C28 -19 15 -15 4 -12C5 -11 7 -9 8 -7C12 -8 17 -10 22 -11V8H29V5H72V8H80V-11C84 -10 88 -8 92 -8C93 -9 95 -12 97 -13C85 -15 72 -19 63 -24H92V-30H53V-35C64 -36 74 -37 81 -38L76 -42C63 -40 40 -39 21 -39C21 -38 22 -36 22 -34C30 -34 38 -34 46 -35V-30ZM46 -24V-16H32C37 -18 42 -21 46 -24ZM53 -24H54C58 -21 63 -18 68 -16H53ZM29 -3H72V1H29ZM29 -7V-12H72V-7Z")}.g119{d:path("M48 -62H81V-54H48ZM48 -75H81V-67H48ZM41 -81V-48H88V-81ZM43 -30C41 -15 37 -4 28 4C30 4 32 7 34 8C39 3 43 -3 46 -10C52 4 63 6 77 6H95C95 4 96 1 97 0C94 0 80 0 78 0C74 0 71 0 68 -1V-16H89V-23H68V-34H94V-41H36V-34H61V-3C55 -5 51 -10 48 -18C49 -22 49 -25 50 -29ZM16 -84V-64H4V-57H16V-35C11 -33 7 -32 3 -31L5 -24L16 -27V-1C16 0 16 0 15 0C14 0 10 0 5 0C6 2 7 6 7 7C14 7 18 7 20 6C22 5 23 3 23 -1V-30L34 -33L34 -40L23 -37V-57H34V-64H23V-84Z")}.g120{d:path("M25 -49C29 -49 33 -52 33 -56C33 -61 29 -64 25 -64C21 -64 17 -61 17 -56C17 -52 21 -49 25 -49ZM25 0C29 0 33 -3 33 -7C33 -12 29 -15 25 -15C21 -15 17 -12 17 -7C17 -3 21 0 25 0Z")}.g121{d:path("M39 -84C38 -79 36 -74 34 -68H6V-61H30C24 -48 15 -37 4 -29C5 -27 7 -24 8 -22C12 -25 16 -28 19 -32V8H27V-41C32 -47 36 -54 39 -61H94V-68H42C44 -73 46 -78 47 -82ZM60 -56V-37H37V-30H60V-1H33V6H94V-1H67V-30H90V-37H67V-56Z")}.g122{d:path("M12 -79V-47C12 -32 11 -11 4 4C5 4 9 6 10 8C18 -8 19 -31 19 -47V-72H95V-79ZM49 -67C49 -61 49 -55 49 -50H26V-43H48C46 -23 40 -7 21 2C23 3 25 6 26 8C47 -3 54 -21 56 -43H82C80 -16 79 -5 76 -2C75 -1 74 -1 72 -1C69 -1 63 -1 57 -1C58 1 59 4 59 6C65 6 71 7 75 6C78 6 80 5 82 3C86 -1 88 -14 89 -47C90 -48 90 -50 90 -50H56C57 -55 57 -61 57 -67Z")}.g123{d:path("M20 -61H46V-42H20ZM54 -61H81V-42H54ZM24 -32 17 -29C21 -21 26 -14 32 -9C26 -5 17 -1 4 1C6 3 8 6 9 8C22 5 32 0 38 -4C52 4 70 6 93 8C93 5 95 2 96 0C74 -1 57 -3 44 -10C51 -17 53 -26 54 -35H88V-68H54V-84H46V-68H12V-35H46C46 -27 44 -20 38 -14C32 -18 27 -24 24 -32Z")}.g124{d:path("M46 -84V-66H10V-19H17V-25H46V8H54V-25H82V-19H90V-66H54V-84ZM17 -32V-59H46V-32ZM82 -32H54V-59H82Z")}.g125{d:path("M16 11C26 7 33 -1 33 -12C33 -19 30 -24 24 -24C20 -24 17 -21 17 -16C17 -12 20 -9 24 -9L26 -9C26 -2 21 2 14 5Z")}.g126{d:path("M41 -84C40 -78 38 -72 36 -65H6V-58H33C27 -42 17 -27 3 -18C5 -16 7 -14 8 -12C16 -17 22 -23 27 -30V8H34V2H79V8H87V-39H32C36 -45 39 -51 42 -58H94V-65H44C46 -71 48 -77 49 -82ZM34 -5V-31H79V-5Z")}.g127{d:path("M15 -30V2H78V8H85V-30H78V-5H54V-38H94V-45H54V-61H87V-68H54V-84H46V-68H14V-61H46V-45H6V-38H46V-5H23V-30Z")}.g128{d:path("M6 -76C12 -72 19 -65 22 -60L28 -64C25 -69 18 -76 12 -81ZM45 -81C42 -72 38 -63 33 -57C34 -56 38 -54 39 -53C41 -56 44 -60 46 -64H60V-49H32V-42H50C48 -29 44 -20 29 -14C31 -13 33 -10 34 -8C51 -15 56 -26 58 -42H68V-19C68 -12 70 -9 77 -9C79 -9 85 -9 87 -9C93 -9 95 -12 96 -25C94 -26 91 -27 89 -28C89 -18 89 -16 86 -16C85 -16 79 -16 78 -16C76 -16 75 -17 75 -19V-42H95V-49H68V-64H91V-70H68V-84H60V-70H48C50 -73 51 -76 52 -80ZM25 -46H6V-39H18V-8C14 -6 9 -3 4 2L10 8C15 2 21 -3 24 -3C26 -3 30 0 34 2C40 6 48 7 60 7C70 7 87 6 94 6C95 4 96 0 97 -2C87 -1 72 0 60 0C50 0 41 -1 35 -5C30 -7 28 -10 25 -10Z")}.g129{d:path("M18 -84V-64H5V-57H18V-36C12 -34 8 -33 4 -32L6 -24L18 -28V-1C18 0 17 0 16 1C15 1 11 1 7 0C8 3 8 6 9 8C15 8 19 8 22 6C24 5 25 3 25 -1V-30L37 -34L36 -41L25 -38V-57H37V-64H25V-84ZM80 -72C77 -67 72 -62 66 -58C61 -62 57 -67 53 -72ZM40 -79V-72H46C50 -65 55 -59 60 -54C53 -50 44 -46 35 -44C37 -43 38 -40 39 -38C48 -41 58 -45 66 -50C74 -45 83 -40 93 -38C94 -40 96 -43 97 -44C88 -46 79 -50 72 -54C80 -60 87 -68 91 -76L86 -79L85 -79ZM62 -41V-32H42V-26H62V-15H37V-8H62V8H70V-8H96V-15H70V-26H88V-32H70V-41Z")}.g130{d:path("M53 -74V-41C53 -27 52 -9 40 3C42 4 45 7 46 8C59 -5 61 -26 61 -41V-43H77V8H84V-43H96V-50H61V-68C73 -70 85 -73 94 -76L89 -83C81 -79 66 -76 53 -74ZM17 -36V-39V-52H37V-36ZM44 -82C36 -78 22 -76 10 -74V-39C10 -26 9 -9 3 3C4 4 8 7 9 8C15 -2 16 -17 17 -29H44V-59H17V-68C28 -70 41 -72 49 -76Z")}.g131{d:path("M39 -84C38 -80 36 -75 35 -71H6V-64H32C25 -51 16 -39 4 -30C5 -29 8 -26 9 -25C15 -29 21 -34 26 -41V8H33V-12H75V-2C75 0 74 1 73 1C71 1 65 1 58 0C59 3 60 6 60 8C69 8 75 8 78 7C81 5 82 3 82 -1V-52H34C36 -56 38 -60 40 -64H94V-71H43C44 -75 46 -78 47 -82ZM33 -29H75V-18H33ZM33 -35V-46H75V-35Z")}.g132{d:path("M12 -77C18 -72 25 -65 28 -61L34 -66C30 -70 23 -77 18 -82ZM20 6V6C21 4 24 2 41 -10C40 -11 39 -14 38 -16L28 -9V-53H5V-45H21V-9C21 -4 18 -1 16 0C17 2 19 4 20 6ZM42 -77V-70H82V-44H44V-6C44 4 47 6 59 6C61 6 79 6 82 6C92 6 95 2 96 -14C94 -15 91 -16 89 -18C88 -3 87 -1 81 -1C77 -1 62 -1 59 -1C53 -1 52 -2 52 -6V-37H82V-32H89V-77Z")}.g133{d:path("M13 -32C20 -28 28 -22 32 -19L37 -24C33 -28 25 -33 18 -36ZM13 -78V-72H74L74 -62H16V-55H73L73 -46H7V-40H46V-21C32 -15 16 -9 7 -5L11 1C21 -3 34 -8 46 -14V0C46 1 46 2 44 2C42 2 37 2 31 2C32 4 33 6 34 8C41 8 46 8 50 7C53 6 54 4 54 0V-24C62 -11 75 -1 90 4C91 2 94 -1 95 -2C84 -5 75 -11 68 -18C74 -22 81 -27 87 -32L81 -37C76 -32 69 -27 63 -22C59 -27 56 -31 54 -36V-40H94V-46H80C81 -56 82 -69 82 -78L76 -79L75 -78Z")}.g134{d:path("M17 -63C21 -56 25 -46 27 -40L34 -42C32 -48 28 -58 24 -65ZM76 -66C73 -58 68 -48 65 -42L71 -40C75 -46 80 -55 83 -63ZM5 -35V-27H46V8H54V-27H95V-35H54V-70H89V-77H10V-70H46V-35Z")}.g135{d:path("M18 -34V8H26V2H74V8H82V-34ZM26 -5V-27H74V-5ZM13 -43C16 -44 22 -44 80 -47C82 -44 85 -41 86 -39L92 -43C87 -52 76 -64 66 -73L60 -69C65 -64 70 -59 74 -54L23 -52C32 -60 41 -70 49 -81L42 -84C34 -72 22 -59 18 -56C15 -53 12 -50 10 -50C11 -48 12 -44 13 -43Z")}.g136{d:path("M21 -84V-65H5V-58H21C18 -44 11 -27 4 -18C5 -17 7 -14 8 -12C13 -18 18 -28 21 -39V8H29V-44C33 -39 37 -32 39 -28L44 -36C42 -38 32 -50 29 -54V-58H43V-65H29V-84ZM38 -6V2H96V-6H71V-67H93V-75H43V-67H63V-6Z")}.g137{d:path("M40 -43V-36H65V8H72V-36H96V-43H72V-70H94V-77H44V-70H65V-43ZM21 -84V-63H5V-55H20C17 -42 10 -26 3 -18C4 -16 6 -13 7 -11C12 -18 18 -29 21 -40V8H29V-38C32 -33 37 -27 39 -24L43 -30C41 -32 32 -43 29 -46V-55H43V-63H29V-84Z")}.g138{d:path("M75 -82C72 -78 68 -72 64 -68L71 -66C74 -69 79 -75 82 -80ZM18 -79C22 -75 27 -69 29 -65L35 -68C33 -72 29 -78 24 -82ZM46 -84V-64H7V-58H40C32 -49 18 -42 5 -39C7 -38 9 -35 10 -33C24 -37 37 -45 46 -55V-38H54V-53C66 -47 81 -38 89 -33L93 -39C85 -44 71 -52 58 -58H93V-64H54V-84ZM46 -36C46 -32 45 -28 44 -25H7V-18H42C37 -8 26 -2 5 1C6 3 8 6 8 8C33 4 44 -5 50 -17C58 -3 71 5 92 8C92 6 95 3 96 1C78 -1 65 -7 57 -18H94V-25H52C53 -28 54 -32 54 -36Z")}.g139{d:path("M64 -78V-45H70V-78ZM82 -83V-39C82 -37 82 -37 80 -37C79 -37 74 -37 68 -37C69 -35 70 -32 70 -30C78 -30 82 -30 86 -31C88 -32 89 -34 89 -39V-83ZM39 -73V-60H26V-60V-73ZM7 -60V-53H19C18 -46 14 -39 6 -34C7 -33 10 -30 11 -29C21 -35 25 -44 26 -53H39V-31H46V-53H57V-60H46V-73H55V-80H10V-73H20V-60V-60ZM47 -33V-22H15V-15H47V-2H5V4H95V-2H54V-15H85V-22H54V-33Z")}.g140{d:path("M54 -11C67 -6 80 1 88 7L93 2C85 -4 71 -11 57 -16ZM24 -56C29 -52 36 -48 39 -44L44 -49C40 -53 34 -58 28 -60ZM14 -40C20 -37 26 -32 30 -28L34 -34C31 -38 24 -42 18 -45ZM9 -73V-52H16V-66H83V-52H91V-73H57C55 -76 53 -81 50 -85L43 -82C45 -79 47 -76 48 -73ZM7 -26V-19H43C38 -9 27 -3 8 1C10 3 12 6 12 8C35 2 46 -6 52 -19H94V-26H54C57 -35 58 -47 58 -61H50C50 -46 49 -35 46 -26Z")}.g141{d:path("M39 -43C45 -40 52 -35 55 -32L59 -37C55 -40 48 -44 43 -47ZM46 -85C46 -83 44 -79 43 -76H21V-59L21 -55H5V-48H20C19 -42 15 -36 7 -31C9 -30 12 -27 13 -26C22 -32 26 -40 28 -48H74V-37C74 -36 74 -35 72 -35C71 -35 66 -35 62 -35C63 -33 64 -31 64 -29C71 -29 75 -29 78 -30C81 -31 82 -33 82 -37V-48H96V-55H82V-76H51L54 -83ZM40 -65C45 -62 51 -58 54 -55H29L29 -59V-70H74V-55H55L58 -60C55 -63 49 -67 43 -69ZM16 -26V-2H4V5H96V-2H84V-26ZM23 -2V-20H36V-2ZM43 -2V-20H56V-2ZM64 -2V-20H77V-2Z")}.g142{d:path("M46 -84V-69H8V-61H46V-46H12V-38H23L21 -38C26 -27 34 -18 43 -11C32 -5 18 -2 4 1C5 2 7 6 8 8C23 5 38 1 50 -6C62 0 75 5 92 7C93 5 95 2 96 0C82 -2 68 -5 58 -11C69 -19 78 -29 84 -43L79 -46L77 -46H54V-61H92V-69H54V-84ZM29 -38H73C68 -29 60 -21 50 -15C41 -21 34 -29 29 -38Z")}.g143{d:path("M65 -70V-42H37V-46V-70ZM5 -42V-35H29C27 -21 22 -8 5 3C7 4 10 7 11 8C30 -3 35 -19 36 -35H65V8H73V-35H95V-42H73V-70H92V-78H9V-70H29V-46L29 -42Z")}.g144{d:path("M61 -35V-27H34V-20H61V-1C61 0 61 1 59 1C57 1 51 1 45 1C46 3 47 6 47 8C56 8 61 8 65 7C68 6 69 4 69 -1V-20H96V-27H69V-32C76 -37 84 -43 89 -49L85 -53L83 -52H42V-46H76C72 -42 66 -38 61 -35ZM38 -84C37 -80 36 -75 34 -71H6V-64H31C25 -50 15 -37 3 -28C4 -27 6 -24 7 -22C11 -25 15 -28 19 -32V8H26V-41C32 -48 36 -56 39 -64H94V-71H42C44 -75 45 -78 46 -82Z")}.g145{d:path("M9 -77C15 -74 24 -69 28 -66L32 -72C28 -75 19 -80 13 -83ZM4 -50C10 -47 19 -42 23 -39L27 -45C23 -48 14 -52 8 -55ZM6 2 13 7C19 -3 26 -15 31 -26L26 -31C20 -19 12 -6 6 2ZM32 -55V-48H61V-31H39V8H46V4H82V7H89V-31H68V-48H96V-55H68V-72C77 -74 85 -76 91 -78L85 -84C74 -80 54 -76 37 -75C38 -73 38 -70 39 -68C46 -69 54 -70 61 -71V-55ZM46 -3V-24H82V-3Z")}.g146{d:path("M10 -76V-69H74C67 -62 56 -54 46 -49V-2C46 0 46 0 44 0C41 1 34 1 25 0C26 3 28 6 28 8C38 8 45 8 49 7C53 6 54 3 54 -2V-45C67 -52 80 -63 89 -72L83 -77L82 -76Z")}.g147{d:path("M46 -55V8H54V-55ZM51 -84C41 -67 22 -53 4 -45C6 -43 8 -40 9 -38C24 -45 39 -57 50 -71C63 -55 77 -45 91 -38C93 -40 95 -43 97 -44C82 -52 67 -61 54 -77L57 -81Z")}.g148{d:path("M20 -22C24 -16 28 -8 29 -3L36 -6C34 -11 30 -19 26 -24ZM73 -24C71 -19 66 -11 63 -6L68 -3C72 -8 77 -15 80 -22ZM50 -85C40 -70 22 -58 3 -52C5 -50 7 -48 8 -45C14 -47 19 -50 24 -53V-47H46V-33H11V-26H46V-2H7V5H93V-2H54V-26H89V-33H54V-47H76V-53C81 -50 87 -48 92 -46C93 -48 95 -51 97 -52C82 -57 64 -67 54 -78L57 -82ZM75 -54H27C35 -59 44 -66 50 -73C57 -66 66 -59 75 -54Z")}.g149{d:path("M8 -77C14 -74 21 -69 24 -66L29 -72C25 -75 18 -80 12 -82ZM4 -51C10 -48 17 -44 20 -41L24 -47C21 -50 14 -54 8 -56ZM6 2 12 6C17 -3 22 -15 26 -26L20 -30C16 -18 10 -6 6 2ZM29 -63V7H36V-63ZM31 -81C35 -76 40 -70 43 -65L48 -69C46 -74 40 -80 36 -84ZM41 -13V-6H80V-13H64V-31H77V-37H64V-53H78V-60H42V-53H57V-37H44V-31H57V-13ZM51 -80V-73H86V-2C86 0 85 0 83 0C81 0 75 0 68 0C69 2 70 6 71 8C79 8 85 8 88 6C91 5 92 3 92 -2V-80Z")}.g150{d:path("M47 -69C47 -63 47 -58 46 -52H21V-46H45C43 -31 37 -19 21 -12C23 -11 25 -8 26 -7C39 -13 46 -22 50 -34C59 -25 69 -15 73 -8L79 -12C73 -20 62 -32 52 -40L53 -46H79V-52H54C54 -58 54 -63 55 -69ZM8 -80V8H15V3H85V8H92V-80ZM15 -3V-73H85V-3Z")}.g151{d:path("M46 -54V-40H5V-32H46V-2C46 0 46 0 44 0C42 0 34 1 26 0C27 2 29 6 29 8C39 8 45 8 49 7C53 5 54 3 54 -2V-32H95V-40H54V-50C66 -56 79 -65 87 -73L82 -78L80 -77H15V-70H72C64 -64 55 -58 46 -54Z")}.g152{d:path("M5 -76C10 -70 16 -60 18 -54L25 -58C23 -63 16 -73 11 -80ZM5 0 12 3C17 -6 23 -19 27 -30L20 -34C16 -22 9 -8 5 0ZM44 -40H65V-26H44ZM44 -46V-60H65V-46ZM61 -80C64 -76 67 -70 68 -66H45C48 -71 50 -76 52 -81L44 -83C40 -68 31 -53 21 -43C23 -42 26 -39 27 -38C30 -42 33 -46 36 -51V8H44V1H95V-6H72V-20H91V-26H72V-40H91V-46H72V-60H93V-66H69L75 -69C73 -73 70 -79 67 -83ZM44 -20H65V-6H44Z")}.g153{d:path("M55 -84C51 -72 43 -60 35 -53C36 -51 38 -48 39 -47C41 -49 43 -50 44 -52V-32C44 -20 43 -6 34 4C35 5 38 7 39 8C46 1 49 -8 50 -16H64V4H71V-16H86V-1C86 0 85 0 84 1C83 1 79 1 74 0C75 2 76 5 76 7C83 7 87 7 89 6C92 5 93 3 93 -1V-58H74C78 -63 82 -68 84 -73L79 -76L78 -76H59C60 -78 61 -80 62 -83ZM64 -23H51C51 -26 51 -29 51 -32V-35H64ZM71 -23V-35H86V-23ZM64 -41H51V-52H64ZM71 -41V-52H86V-41ZM49 -58H49C52 -62 54 -66 56 -69H74C72 -66 69 -62 66 -58ZM6 -79V-72H18C15 -56 10 -42 4 -33C5 -31 6 -27 7 -25C9 -27 10 -30 12 -33V3H19V-5H36V-48H19C21 -55 23 -64 25 -72H39V-79ZM19 -41H30V-11H19Z")}.g154{d:path("M46 -83V-2C46 0 46 0 44 0C42 0 34 0 27 0C28 2 30 6 30 8C40 8 46 8 49 7C53 5 54 3 54 -2V-83ZM70 -57C79 -43 87 -24 90 -12L98 -15C95 -27 86 -46 78 -60ZM20 -59C18 -46 12 -28 3 -18C5 -17 9 -15 10 -14C19 -25 25 -43 29 -58Z")}.g155{d:path("M5 -76C10 -69 16 -60 19 -54L26 -58C23 -63 16 -73 11 -80ZM5 0 12 3C17 -6 23 -19 27 -30L20 -34C16 -22 9 -8 5 0ZM47 -69H68C66 -65 63 -61 61 -58H40C42 -61 45 -65 47 -69ZM47 -84C42 -73 34 -62 26 -54C28 -53 30 -51 32 -50C33 -51 35 -52 36 -54V-51H56V-41H28V-34H56V-23H33V-17H56V-1C56 0 55 1 54 1C52 1 47 1 41 1C42 3 43 6 43 8C51 8 56 8 59 7C62 6 63 3 63 -1V-17H81V-12H88V-34H96V-41H88V-58H69C72 -62 76 -68 78 -72L73 -76L72 -75H51C52 -78 54 -80 54 -82ZM81 -23H63V-34H81ZM81 -41H63V-51H81Z")}.g156{d:path("M60 -84C60 -81 59 -77 59 -74H33V-67H57C57 -64 56 -60 56 -58H38V-1H29V5H96V-1H87V-58H62C63 -60 64 -64 65 -67H93V-74H66L68 -84ZM45 -1V-10H80V-1ZM45 -38H80V-29H45ZM45 -44V-52H80V-44ZM45 -24H80V-15H45ZM26 -84C21 -69 12 -54 3 -44C4 -42 7 -38 7 -37C10 -40 13 -44 16 -48V8H23V-59C27 -66 30 -74 33 -82Z")}.g157{d:path("M6 -72C12 -68 21 -62 25 -58L30 -64C26 -68 17 -74 10 -77ZM4 -7 11 -2C17 -11 25 -23 31 -33L25 -38C18 -27 10 -15 4 -7ZM45 -84C42 -68 37 -52 29 -43C31 -42 35 -40 36 -38C40 -44 44 -51 47 -60H84C82 -53 79 -45 76 -40C78 -40 81 -38 83 -37C86 -44 91 -55 93 -64L88 -67L86 -67H49C51 -72 52 -77 53 -82ZM57 -55V-48C57 -34 55 -12 24 3C26 4 28 7 30 8C49 -2 58 -14 62 -26C68 -10 77 1 91 7C92 5 94 2 96 1C79 -6 69 -21 65 -41C65 -44 65 -46 65 -48V-55Z")}.g158{d:path("M10 -34V2H81V8H90V-34H81V-5H54V-40H86V-75H77V-48H54V-84H46V-48H23V-75H15V-40H46V-5H19V-34Z")}.g159{d:path("M16 -38V8H23V2H77V7H84V-38H52V-58H93V-65H52V-84H45V-38ZM23 -6V-31H77V-6Z")}.g160{d:path("M45 -73H82V-54H45ZM38 -79V-47H60V-35H31V-28H55C49 -18 38 -7 28 -2C29 -1 32 2 33 4C43 -2 53 -12 60 -23V8H67V-24C74 -12 84 -2 93 4C94 2 96 -1 98 -2C88 -7 78 -18 72 -28H95V-35H67V-47H90V-79ZM28 -84C22 -69 12 -54 2 -44C4 -42 6 -38 6 -37C10 -40 14 -45 17 -50V8H24V-61C28 -67 32 -74 35 -82Z")}.g161{d:path("M10 -77C16 -72 22 -66 26 -62L31 -67C28 -71 21 -77 15 -81ZM35 -3V4H96V-3H72V-36H92V-43H72V-69H94V-76H39V-69H65V-3H51V-51H44V-3ZM5 -53V-45H19V-11C19 -5 15 -2 14 0C15 1 17 4 18 5C20 3 22 1 39 -12C38 -14 37 -17 36 -19L26 -11V-53Z")}.g162{d:path("M60 -84V-73H32V-66H60V-56H35V-28H59C59 -23 57 -18 54 -13C49 -17 44 -21 41 -26L35 -24C39 -18 44 -13 50 -8C45 -4 38 0 28 2C30 4 32 7 33 8C43 5 51 1 56 -4C66 2 78 6 93 8C94 6 96 3 97 1C83 0 70 -4 60 -9C64 -15 66 -22 67 -28H93V-56H67V-66H96V-73H67V-84ZM42 -50H60V-39L60 -35H42ZM67 -50H86V-35H67L67 -39ZM28 -84C22 -69 12 -54 2 -45C3 -43 6 -39 6 -37C10 -41 14 -45 17 -50V8H24V-61C28 -68 32 -75 35 -82Z")}.g163{d:path("M48 -46C55 -41 62 -34 66 -30L71 -35C67 -39 60 -45 53 -50ZM40 -12 44 -5C54 -10 68 -18 80 -25L78 -31C65 -24 50 -16 40 -12ZM57 -84C52 -71 44 -58 36 -50C37 -49 40 -46 41 -44C45 -49 50 -54 54 -61H86C85 -20 83 -4 80 0C79 1 78 1 76 1C73 1 67 1 60 0C61 3 62 6 62 8C68 8 74 8 78 8C82 8 84 7 86 4C90 -1 92 -17 93 -64C93 -65 93 -68 93 -68H58C60 -72 62 -77 64 -82ZM4 -12 6 -5C16 -10 28 -16 40 -22L38 -28L24 -22V-53H36V-60H24V-83H17V-60H4V-53H17V-18C12 -16 7 -14 4 -12Z")}.g164{d:path("M59 -48C69 -44 83 -38 90 -34L93 -40C86 -44 73 -49 63 -53ZM34 -53C28 -48 16 -41 7 -38C8 -36 10 -34 12 -32C20 -36 33 -44 40 -50ZM18 -33V-2H4V5H96V-2H83V-33ZM24 -2V-27H37V-2ZM44 -2V-27H56V-2ZM63 -2V-27H76V-2ZM71 -84C69 -79 64 -71 61 -66L66 -64H34L39 -67C37 -72 33 -79 29 -84L22 -81C26 -76 30 -69 32 -64H6V-58H94V-64H67C71 -69 75 -76 79 -82Z")}.g165{d:path("M67 -50V-30C67 -19 65 -6 41 2C43 4 45 6 46 8C71 -2 74 -17 74 -29V-50ZM72 -9C79 -4 87 3 91 8L96 3C92 -2 84 -9 78 -13ZM9 -61C15 -57 23 -51 28 -47H4V-40H20V-1C20 0 20 1 18 1C17 1 12 1 7 1C8 3 9 6 10 8C16 8 21 8 24 6C27 5 28 3 28 -1V-40H38C36 -35 34 -29 33 -26L38 -24C41 -30 44 -38 47 -46L42 -47L41 -47H34L36 -50C34 -51 31 -54 27 -56C33 -62 39 -69 44 -76L39 -80L38 -79H6V-72H33C30 -68 26 -63 22 -60L13 -66ZM50 -63V-15H57V-56H85V-15H92V-63H72L76 -73H96V-80H46V-73H68C67 -70 66 -66 65 -63Z")}.g166{d:path("M87 -70C80 -59 70 -49 60 -41V-82H52V-35C45 -30 39 -26 32 -23C34 -22 36 -19 38 -17C42 -20 47 -22 52 -25V-8C52 3 55 6 65 6C67 6 80 6 82 6C93 6 95 0 96 -19C94 -20 91 -21 89 -23C88 -6 87 -1 82 -1C79 -1 68 -1 65 -1C61 -1 60 -2 60 -8V-31C72 -40 85 -52 94 -65ZM31 -84C25 -69 15 -54 4 -44C6 -42 8 -39 9 -37C13 -41 17 -45 21 -50V8H29V-62C32 -68 36 -75 39 -82Z")}.g167{d:path("M51 -74H79V-62H51ZM43 -80V-56H86V-80ZM61 -35V-26C61 -18 59 -6 32 1C34 3 36 6 36 7C65 -2 69 -15 69 -25V-35ZM69 -7C76 -2 87 4 92 8L96 3C91 -1 81 -8 73 -12ZM41 -48V-12H48V-42H82V-12H90V-48ZM17 -84V-64H4V-57H17V-34C12 -32 7 -31 3 -30L4 -22L17 -26V-2C17 0 16 0 15 0C14 0 10 0 5 0C6 2 7 6 8 8C14 8 18 7 21 6C23 5 24 3 24 -2V-29L37 -33L36 -40L24 -36V-57H36V-64H24V-84Z")}.g168{d:path("M70 -50C70 -15 69 -4 45 3C46 4 48 7 48 8C74 1 76 -13 76 -50ZM73 -8C80 -3 88 4 92 8L97 3C92 -1 84 -8 77 -13ZM43 -39C38 -18 26 -4 5 2C6 4 8 6 9 8C32 0 44 -14 49 -37ZM13 -40C11 -32 8 -25 4 -20C5 -19 8 -17 9 -16C14 -22 17 -30 20 -38ZM54 -61V-14H61V-55H85V-14H92V-61H74L78 -71H95V-78H52V-71H71C70 -68 69 -64 67 -61ZM11 -75V-53H4V-46H25V-16H32V-46H50V-53H33V-65H48V-72H33V-84H27V-53H18V-75Z")}.g169{d:path("M9 -62V8H17V-62ZM11 -79C15 -75 20 -68 23 -64L29 -68C26 -73 21 -78 16 -83ZM38 -30H62V-16H38ZM38 -49H62V-36H38ZM31 -55V-10H69V-55ZM35 -78V-71H84V-1C84 0 83 1 82 1C81 1 76 1 72 1C73 2 74 6 75 8C81 8 85 8 88 6C90 5 91 3 91 -1V-78Z")}.g170{d:path("M58 -67H79C76 -60 72 -55 68 -50C63 -54 59 -60 56 -65ZM20 -84V-63H5V-56H19C16 -42 10 -26 3 -18C4 -16 6 -13 7 -11C12 -18 16 -28 20 -40V8H27V-42C30 -38 34 -33 36 -30L40 -36C38 -38 30 -48 27 -51V-56H39L36 -54C38 -52 41 -50 42 -48C46 -51 49 -55 52 -59C55 -54 58 -50 63 -45C54 -38 44 -32 34 -29C36 -28 38 -25 38 -23C41 -24 44 -25 46 -26V8H53V4H81V8H88V-27L93 -25C94 -27 96 -30 98 -32C88 -34 79 -39 73 -45C80 -52 85 -61 89 -71L84 -74L83 -73H61C63 -76 64 -79 65 -82L58 -84C54 -74 48 -64 40 -57V-63H27V-84ZM53 -3V-22H81V-3ZM51 -29C57 -32 62 -36 68 -40C72 -36 78 -32 85 -29Z")}.g171{d:path("M19 -62V-4H5V3H95V-4H58V-43H90V-50H58V-84H50V-4H26V-62Z")}.g172{d:path("M32 -24C33 -25 37 -26 42 -26H59V-14H23V-7H59V8H67V-7H95V-14H67V-26H89V-33H67V-43H59V-33H40C43 -37 46 -43 49 -48H91V-55H53L56 -62L48 -65C47 -62 46 -58 44 -55H26V-48H41C39 -43 36 -39 35 -38C33 -34 32 -32 30 -32C31 -30 32 -26 32 -24ZM47 -82C49 -80 50 -77 52 -74H12V-45C12 -30 11 -10 3 4C5 5 8 7 10 8C18 -7 20 -30 20 -45V-67H95V-74H60C59 -77 56 -81 54 -84Z")}.g173{d:path("M47 -23C44 -8 36 -1 4 2C6 3 7 6 8 8C41 4 51 -5 55 -23ZM52 -6C65 -2 82 4 90 8L94 2C85 -2 69 -8 56 -11ZM35 -60C35 -57 35 -54 34 -52H20L21 -60ZM42 -60H58V-52H41C42 -54 42 -57 42 -60ZM15 -65C14 -59 13 -52 12 -47H30C26 -42 18 -38 6 -36C7 -34 9 -31 10 -30C13 -30 16 -31 19 -32V-6H26V-27H74V-7H82V-34H22C31 -37 36 -42 39 -47H58V-36H66V-47H86C85 -44 85 -42 84 -42C84 -41 83 -41 82 -41C81 -41 78 -41 75 -42C76 -40 76 -38 76 -36C80 -36 84 -36 85 -36C87 -36 89 -37 90 -38C92 -40 92 -43 93 -50C93 -51 93 -52 93 -52H66V-60H87V-78H66V-84H58V-78H42V-84H36V-78H11V-72H36V-65L18 -65ZM42 -72H58V-65H42ZM66 -72H80V-65H66Z")}.g174{d:path("M71 -55C76 -52 82 -46 85 -43L90 -47C87 -51 81 -56 76 -59ZM61 -60V-45L61 -41H37V-34H60C58 -22 53 -8 34 3C36 5 39 7 40 8C55 -1 62 -12 65 -24C70 -9 78 2 90 8C91 6 94 3 95 2C82 -4 73 -18 68 -34H94V-41H68V-45V-60ZM63 -84V-76H37V-84H30V-76H6V-69H30V-61H37V-69H63V-62H71V-69H94V-76H71V-84ZM32 -59C30 -57 28 -54 25 -52C22 -55 19 -58 14 -61L9 -57C14 -54 17 -51 19 -48C15 -45 9 -42 4 -40C6 -38 8 -36 9 -35C14 -37 18 -40 23 -42C25 -40 26 -36 26 -33C22 -26 12 -19 4 -16C6 -14 7 -12 8 -10C15 -13 22 -19 28 -25L28 -21C28 -11 27 -4 24 -1C24 0 23 1 21 1C19 1 15 1 11 1C12 3 13 5 13 7C17 8 21 8 24 7C26 7 28 6 30 4C34 0 35 -9 35 -21C35 -30 34 -38 29 -46C32 -49 36 -52 39 -56Z")}.g175{d:path("M63 -14C70 -8 79 0 83 6L94 -1C89 -6 80 -15 73 -20ZM24 -20C20 -14 12 -7 4 -2C7 0 11 4 14 6C21 1 30 -8 36 -16ZM50 -86C38 -72 19 -60 1 -53C4 -50 8 -46 10 -42C14 -45 19 -47 24 -50V-44H44V-35H10V-24H44V-4C44 -3 43 -2 42 -2C40 -2 34 -2 29 -2C31 1 33 6 34 9C41 9 47 9 51 7C55 5 56 2 56 -4V-24H91V-35H56V-44H75V-51C81 -48 86 -46 91 -43C93 -47 96 -51 99 -54C85 -59 71 -66 57 -79L59 -81ZM30 -55C37 -60 44 -65 50 -71C57 -64 63 -59 70 -55Z")}.g176{d:path("M74 -6C80 -2 88 5 92 9L98 0C94 -3 86 -9 80 -14ZM52 -60V-13H62V-51H83V-14H93V-60H75L79 -69H96V-79H52V-69H68C67 -66 66 -63 65 -60ZM13 -39 18 -37C14 -34 8 -32 3 -31C4 -28 6 -23 7 -20L12 -21V8H22V6H35V8H46V2C48 4 50 7 50 10C76 1 78 -16 78 -48H68C68 -20 67 -7 46 1V-23H44L52 -30C49 -33 44 -35 38 -38C42 -43 46 -48 49 -54L43 -58H50V-75H35L31 -85L19 -82L22 -75H4V-58H15V-66H39V-58H27L30 -62L19 -64C16 -58 10 -52 2 -47C4 -45 7 -41 8 -39C13 -42 17 -45 20 -49H34C32 -47 30 -45 28 -43L21 -46ZM22 -4V-14H35V-4ZM16 -23C21 -25 25 -28 30 -31C35 -28 40 -25 43 -23Z")}.g177{d:path("M4 -1 16 4C20 -6 25 -18 29 -30L18 -35C14 -22 8 -9 4 -1ZM50 -66H66C64 -64 63 -61 61 -59H44C46 -61 48 -64 50 -66ZM3 -76C8 -68 14 -58 17 -51L26 -56C29 -54 33 -51 35 -49L38 -52V-48H55V-42H29V-31H55V-24H35V-14H55V-4C55 -3 54 -3 53 -2C51 -2 45 -2 40 -3C42 1 44 5 44 9C52 9 58 8 62 7C66 5 67 2 67 -4V-14H78V-10H90V-31H97V-42H90V-59H74C77 -63 80 -68 82 -72L74 -77L72 -76H56L58 -82L47 -85C43 -75 35 -65 28 -58C24 -65 18 -74 14 -81ZM78 -24H67V-31H78ZM78 -42H67V-48H78Z")}.g178{d:path("M58 -85C58 -82 58 -79 58 -76H34V-66H56L55 -59H38V-3H29V7H97V-3H89V-59H66L68 -66H94V-76H70L71 -84ZM48 -3V-9H78V-3ZM48 -36H78V-31H48ZM48 -44V-50H78V-44ZM48 -22H78V-17H48ZM24 -85C19 -70 11 -56 2 -47C4 -44 7 -38 8 -35C10 -37 12 -39 14 -41V9H25V-59C29 -66 32 -74 35 -81Z")}.g179{d:path("M9 -79V-67H71V-46H26V-60H13V-13C13 2 19 6 38 6C43 6 67 6 72 6C90 6 94 1 97 -18C93 -19 88 -21 85 -23C83 -8 82 -6 71 -6C65 -6 43 -6 38 -6C27 -6 26 -7 26 -13V-34H71V-30H84V-79Z")}.g180{d:path("M14 -78V-42C14 -28 13 -10 2 2C5 3 10 7 12 10C19 2 23 -9 24 -20H45V8H57V-20H78V-5C78 -4 78 -3 76 -3C74 -3 67 -3 62 -3C63 0 65 5 65 8C74 8 81 8 85 6C89 4 90 1 90 -5V-78ZM26 -67H45V-55H26ZM78 -67V-55H57V-67ZM26 -44H45V-32H26C26 -35 26 -39 26 -42ZM78 -44V-32H57V-44Z")}.g181{d:path("M65 -48V-29C65 -20 62 -7 40 0C43 2 46 6 48 8C72 -1 76 -16 76 -29V-48ZM72 -7C78 -2 86 5 89 9L98 1C94 -3 86 -9 80 -14ZM7 -58C11 -55 18 -51 23 -48H3V-37H18V-4C18 -3 17 -3 16 -3C14 -3 10 -3 5 -3C7 0 8 5 9 9C16 9 21 8 24 7C28 5 29 2 29 -4V-37H35C34 -32 33 -28 32 -25L40 -23C43 -29 46 -38 48 -46L40 -48L39 -48H34L37 -51C35 -53 32 -54 29 -56C35 -62 41 -69 45 -76L38 -81L36 -81H5V-70H28C26 -67 23 -64 21 -61L13 -66ZM49 -63V-15H60V-53H82V-16H93V-63H75L78 -71H97V-81H46V-71H65L64 -63Z")}.g182{d:path("M40 -39C44 -31 50 -21 52 -15L64 -21C61 -27 55 -37 50 -44ZM73 -84V-63H35V-51H73V-6C73 -3 72 -3 70 -3C68 -2 59 -2 51 -3C53 0 55 6 56 9C67 9 74 9 79 7C84 5 86 2 86 -6V-51H97V-63H86V-84ZM27 -84C21 -70 12 -55 3 -46C5 -43 8 -36 10 -34C12 -36 14 -39 17 -42V9H29V-60C33 -67 36 -74 38 -81Z")}.g183{d:path("M9 -22C8 -15 5 -7 2 -2C4 -1 9 1 11 2C14 -3 17 -12 19 -19ZM36 -18C39 -13 41 -6 42 -2L52 -6C51 -10 48 -17 45 -22ZM66 -49V-45C66 -32 64 -13 48 1C50 3 55 7 57 9C64 2 69 -6 72 -14C76 -4 82 4 90 9C92 6 95 1 98 -1C87 -7 80 -20 77 -35C77 -38 77 -42 77 -44V-49ZM22 -84V-77H4V-67H22V-62H7V-52H49V-62H34V-67H51V-77H34V-84ZM3 -33V-24H22V-2C22 -2 22 -1 21 -1C20 -1 17 -1 14 -1C15 2 16 6 17 9C22 9 26 9 30 7C33 6 34 3 34 -2V-24H52V-33ZM87 -67 85 -67H67C68 -72 69 -78 70 -83L58 -85C57 -71 54 -57 48 -47V-48H7V-38H48V-42C51 -40 54 -38 56 -36C59 -42 62 -48 64 -56H84C83 -50 81 -44 80 -39L90 -36C92 -44 95 -55 97 -65L89 -67Z")}.g184{d:path("M5 -78V-66H71V-6C71 -4 70 -4 68 -4C66 -4 57 -4 50 -4C52 -1 54 5 55 9C65 9 72 9 77 7C82 5 84 1 84 -6V-66H95V-78ZM26 -44H45V-27H26ZM14 -55V-8H26V-16H57V-55Z")}.g185{d:path("M11 9C14 7 19 4 46 -5C45 -8 45 -14 45 -18L24 -10V-43H46V-55H24V-84H11V-11C11 -6 8 -3 6 -1C8 1 10 6 11 9ZM51 -84V-12C51 2 55 7 66 7C69 7 77 7 80 7C91 7 94 -1 96 -22C92 -23 87 -25 84 -27C83 -10 82 -5 78 -5C77 -5 70 -5 68 -5C64 -5 64 -6 64 -12V-35C75 -42 86 -51 96 -59L86 -70C80 -63 72 -55 64 -49V-84Z")}.g186{d:path("M67 -74V-17H77V-74ZM83 -84V-6C83 -4 82 -3 80 -3C78 -3 73 -3 67 -4C68 0 70 5 70 8C79 8 85 8 89 6C92 4 94 1 94 -6V-84ZM35 -27C38 -25 41 -22 43 -19C39 -11 34 -4 28 0C31 2 34 6 36 9C52 -3 60 -25 63 -57L56 -58L54 -58H46C47 -62 48 -65 48 -69H64V-80H30V-69H37C34 -54 30 -41 23 -32C26 -30 30 -26 32 -24C36 -30 40 -38 43 -47H52C51 -41 49 -35 48 -30L41 -35ZM18 -85C14 -71 9 -58 2 -48C4 -45 6 -38 7 -35C9 -37 10 -39 11 -41V9H22V-64C25 -70 27 -76 29 -82Z")}.g187{d:path("M31 8V8C33 7 36 6 62 0C61 -2 62 -5 62 -6L40 -2V-22H54C61 -7 74 4 92 8C92 6 94 3 96 2C87 0 80 -3 74 -8C79 -10 85 -14 90 -18L84 -22C80 -19 74 -14 69 -12C66 -15 63 -18 61 -22H95V-29H74V-39H91V-46H74V-55H67V-46H47V-55H40V-46H25V-39H40V-29H22V-22H33V-6C33 -2 30 1 28 2C29 3 31 6 31 8ZM47 -39H67V-29H47ZM22 -73H82V-62H22ZM14 -79V-50C14 -34 13 -12 3 4C5 5 8 7 10 8C20 -8 22 -33 22 -50V-56H89V-79Z")}.g188{d:path("M9 -62V8H16V-62ZM11 -79C15 -75 20 -69 22 -65L28 -70C26 -73 20 -79 16 -83ZM35 -79V-72H84V-2C84 0 83 0 82 0C80 0 76 0 71 0C72 2 73 5 73 7C80 7 85 7 88 6C90 5 91 3 91 -2V-79ZM61 -55V-46H38V-55ZM21 -16 22 -9 61 -12V-1H68V-12L78 -13V-19L68 -18V-55H75V-61H24V-55H31V-16ZM61 -41V-32H38V-41ZM61 -27V-18L38 -16V-27Z")}.g189{d:path("M15 -34H27V-12H15ZM15 -41V-62H27V-41ZM46 -34V-12H34V-34ZM46 -41H34V-62H46ZM27 -84V-69H8V2H15V-5H46V0H53V-69H34V-84ZM63 -79V8H69V-72H85C83 -64 79 -53 75 -45C84 -36 87 -28 87 -22C87 -19 86 -16 84 -14C83 -14 81 -13 80 -13C78 -13 75 -13 72 -13C73 -11 74 -8 74 -6C77 -6 80 -6 83 -6C85 -7 87 -7 89 -8C92 -11 94 -16 94 -22C94 -28 91 -36 82 -46C86 -55 91 -66 95 -76L90 -79L88 -79Z")}.g190{d:path("M57 -29H84V-19H57ZM57 -35V-45H84V-35ZM57 -13H84V-3H57ZM50 -52V8H57V4H84V7H91V-52ZM18 -84C15 -74 10 -64 4 -58C5 -57 9 -55 10 -54C13 -57 16 -62 19 -68H23C26 -64 27 -59 28 -56H24V-44H6V-37H22C18 -26 10 -15 3 -8C5 -7 7 -4 8 -3C13 -8 19 -17 24 -25V8H31V-26C35 -21 40 -16 42 -13L47 -18C44 -21 35 -30 31 -33V-37H47V-44H31V-55L35 -57C35 -60 33 -64 31 -68H49V-74H22C24 -77 25 -80 26 -83ZM58 -84C55 -74 50 -65 43 -59C45 -58 48 -56 49 -54C53 -58 56 -63 59 -68H65C68 -63 72 -58 73 -54L79 -57C78 -60 76 -64 73 -68H95V-74H62C63 -77 64 -80 65 -83Z")}.g191{d:path("M24 -30H76V-23H24ZM24 -42H76V-35H24ZM16 -48V-18H46V-10H5V-4H46V8H54V-4H95V-10H54V-18H84V-48ZM26 -68C28 -65 30 -62 31 -59H5V-53H95V-59H69C71 -62 72 -65 74 -68L66 -70C65 -67 63 -63 61 -59H39C38 -62 36 -66 34 -69ZM43 -84C45 -81 46 -78 47 -76H12V-70H89V-76H56C54 -79 52 -83 51 -85Z")}.g192{d:path("M72 -78C77 -73 84 -66 88 -62L94 -66C90 -70 83 -77 77 -82ZM55 -83C55 -72 56 -62 57 -53L32 -50L34 -43L58 -46C61 -14 69 7 86 8C91 8 95 3 98 -14C96 -15 93 -17 91 -18C90 -7 89 -1 86 -1C75 -2 68 -20 65 -47L96 -50L94 -58L64 -54C63 -63 63 -72 62 -83ZM31 -83C25 -67 14 -52 2 -42C3 -40 6 -36 6 -35C11 -39 16 -44 20 -49V8H28V-60C32 -67 35 -74 38 -81Z")}.g193{d:path("M41 -20V-14H79V-20ZM49 -65C48 -55 47 -42 46 -34H48L86 -34C84 -12 82 -3 80 0C79 1 78 1 76 1C74 1 70 1 65 0C66 2 67 5 67 7C72 8 76 8 79 7C82 7 84 6 86 4C89 1 92 -10 94 -37C94 -38 94 -40 94 -40H82C83 -52 85 -68 86 -78L80 -78L79 -78H44V-71H78C77 -62 76 -50 74 -40H54C55 -48 56 -57 56 -64ZM5 -79V-72H17C14 -56 10 -42 3 -33C4 -31 6 -27 6 -25C8 -27 10 -30 12 -33V3H18V-5H36V-48H18C21 -55 23 -64 24 -72H39V-79ZM18 -41H30V-11H18Z")}.g194{d:path("M27 -26V-4C27 4 30 7 42 7C44 7 62 7 64 7C74 7 76 3 78 -10C76 -10 72 -11 71 -13C70 -2 69 0 64 0C60 0 45 0 42 0C36 0 34 -1 34 -4V-26ZM38 -32C46 -27 56 -19 60 -14L66 -19C61 -25 51 -32 43 -36ZM74 -23C79 -15 85 -3 87 4L95 0C92 -6 86 -17 81 -26ZM15 -25C13 -17 10 -7 5 0L12 3C16 -4 20 -14 22 -22ZM46 -84V-70H6V-62H46V-45H12V-38H89V-45H54V-62H95V-70H54V-84Z")}.g195{d:path("M4 -5 5 2C14 0 28 -3 40 -5L39 -12C26 -9 13 -7 4 -5ZM56 -26C64 -24 73 -19 77 -15L82 -20C77 -24 68 -28 61 -31ZM45 -8C59 -4 76 3 85 8L89 2C80 -3 63 -10 50 -13ZM58 -84C55 -75 48 -64 37 -56L39 -59L33 -63C31 -59 29 -55 26 -52L13 -50C19 -59 25 -70 30 -81L23 -84C18 -72 11 -59 9 -56C7 -52 5 -50 3 -50C4 -48 5 -44 6 -42C7 -43 10 -44 22 -45C18 -39 14 -34 12 -32C8 -28 6 -26 4 -25C5 -23 6 -20 6 -18C8 -20 12 -20 38 -24C38 -26 38 -29 38 -31L16 -28C24 -36 31 -46 37 -56C39 -54 41 -52 42 -51C46 -54 50 -57 53 -61C56 -56 59 -52 63 -47C56 -41 47 -36 38 -33C40 -32 42 -29 43 -27C52 -30 60 -36 68 -42C76 -36 84 -30 93 -27C94 -29 96 -32 98 -33C89 -36 81 -41 74 -47C80 -54 86 -62 90 -71L85 -74L84 -74H61C63 -77 65 -80 66 -83ZM57 -67H80C77 -61 73 -56 68 -52C64 -56 60 -61 57 -66Z")}.g196{d:path("M56 -78C64 -74 73 -69 77 -65L82 -71C78 -75 68 -80 61 -83ZM80 -50C74 -40 65 -31 56 -24C52 -32 49 -42 47 -52L95 -56L94 -64L46 -60C45 -67 44 -75 44 -84H36C36 -75 37 -67 38 -59L6 -56L6 -49L39 -52C41 -40 44 -28 49 -19C37 -11 23 -5 8 0C10 2 13 5 14 7C28 2 41 -4 52 -12C60 0 69 8 81 8C90 8 94 3 95 -14C93 -15 90 -16 88 -18C87 -4 86 0 81 0C73 0 65 -6 59 -17C70 -25 80 -35 87 -47Z")}</style></head><body><div class="b" style="left:0px;top:0px;width:1280px;height:18px;background:#f0f0f0"></div>
<div class="b" style="left:0px;top:18px;width:1280px;height:1px;background:#d4d4d4"></div>
<div class="b" style="left:0px;top:19px;width:1280px;height:1px;background:#fbfbfb"></div>
<div class="b" style="left:0px;top:20px;width:1280px;height:22px;background:#f0f0f0"></div>
<div class="b" style="left:0px;top:41px;width:1280px;height:1px;background:#d0d0d0"></div>
<div class="t" style="left:18px;top:2.0px;line-height:14px;font-size:11px;color:#222"><svg class="g" viewBox="0 -88 100 100"><path class="g0"/></svg><svg class="g" viewBox="0 -88 100 100"><path class="g1"/></svg>(F)</div>
<div class="t" style="left:67px;top:2.0px;line-height:14px;font-size:11px;color:#222"><svg class="g" viewBox="0 -88 100 100"><path class="g2"/></svg><svg class="g" viewBox="0 -88 100 100"><path class="g3"/></svg>(V)</div>
<div class="t" style="left:118px;top:2.0px;line-height:14px;font-size:11px;color:#222"><svg class="g" viewBox="0 -88 100 100"><path class="g4"/></svg><svg class="g" viewBox="0 -88 100 100"><path class="g5"/></svg>(I)</div>
<div class="t" style="left:166px;top:2.0px;line-height:14px;font-size:11px;color:#222"><svg class="g" viewBox="0 -88 100 100"><path class="g6"/></svg><svg class="g" viewBox="0 -88 100 100"><path class="g7"/></svg>(C)</div>
<div class="t" style="left:217px;top:2.0px;line-height:14px;font-size:11px;color:#222"><svg class="g" viewBox="0 -88 100 100"><path class="g8"/></svg><svg class="g" viewBox="0 -88 100 100"><path class="g9"/></svg>(T)</div>
<div class="t" style="left:266px;top:2.0px;line-height:14px;font-size:11px;color:#222"><svg class="g" viewBox="0 -88 100 100"><path class="g10"/></svg><svg class="g" viewBox="0 -88 100 100"><path class="g11"/></svg>(W)</div>
<div class="t" style="left:320px;top:2.0px;line-height:14px;font-size:11px;color:#222"><svg class="g" viewBox="0 -88 100 100"><path class="g12"/></svg><svg class="g" viewBox="0 -88 100 100"><path class="g13"/></svg>(H)</div>
<svg style="left:1px;top:2px" width="11" height="13"><rect x="0.5" y="1.5" width="9" height="10" fill="#dde8f4" stroke="#6f93c4"/><rect x="0.5" y="1.5" width="9" height="3" fill="#7fa3d4"/><path d="M2 9 l2-2 2 2 2-3" stroke="#4a74b0" fill="none"/></svg>
<div class="b" style="left:1236px;top:2px;width:14px;height:15px;background:#fff;border:1px solid #e8e8e8"></div>
<div class="b" style="left:1239px;top:11px;width:6px;height:2px;background:#4a5260"></div>
<div class="b" style="left:1253px;top:2px;width:14px;height:15px;background:#fff;border:1px solid #e8e8e8"></div>
<svg style="left:1256px;top:5px" width="8" height="8"><rect x="0.5" y="2.5" width="5" height="5" fill="none" stroke="#4a5260" stroke-width="1.2"/><path d="M2.5 2.5 V0.5 H7.5 V5.5 H5.5" fill="none" stroke="#4a5260" stroke-width="1.2"/></svg>
<div class="b" style="left:1270px;top:2px;width:10px;height:15px;background:#fff;border:1px solid #e8e8e8"></div>
<svg style="left:1274px;top:7px" width="6" height="7"><path d="M0 0 L6 7 M6 0 L0 7" stroke="#4a5260" stroke-width="1.6"/></svg>
<svg style="left:3px;top:24px" width="16" height="16"><rect x="0.5" y="1.5" width="11" height="9" fill="#e8f0fa" stroke="#5a86c0"/><path d="M8 7 h3 v-3 h3 v3 h3 v3 h-3 v3 h-3 v-3 h-3z" fill="#3cb83c" stroke="#2a8a2a" stroke-width="0.6" transform="translate(-2,0)"/></svg>
<svg style="left:24px;top:30px" width="6" height="4"><path d="M0 0 H6 L3 3z" fill="#222"/></svg>
<svg style="left:37px;top:24px" width="16" height="16"><rect x="0.5" y="0.5" width="11" height="9" fill="#e8f0fa" stroke="#5a86c0"/><rect x="4.5" y="5.5" width="11" height="9" fill="#e8f0fa" stroke="#5a86c0"/><path d="M6 10 h8" stroke="#5a86c0"/></svg>
<svg style="left:58px;top:30px" width="6" height="4"><path d="M0 0 H6 L3 3z" fill="#222"/></svg>
<div class="b" style="left:70px;top:23px;width:1px;height:16px;background:#c8c8c8;border-right:1px solid #fff"></div>
<div class="b" style="left:74px;top:21px;width:22px;height:20px;background:#f8f8f8;border:1px solid #e0e0e0"></div>
<svg style="left:78px;top:24px" width="15" height="15"><rect x="0.5" y="0.5" width="14" height="14" fill="#eaf2fb" stroke="#6a9ad0"/><path d="M5 2 l3 3 h-2 v2 h-2 v-2 h-2z" fill="#3aaa3a"/><path d="M10 13 l3-3 h-2 v-2 h-2 v2 h-2z" fill="#e06a3a"/></svg>
<svg style="left:103px;top:24px" width="15" height="15"><circle cx="7.5" cy="7.5" r="5" fill="none" stroke="#555" stroke-width="1.3"/><path d="M7.5 0 V5 M7.5 10 V15 M0 7.5 H5 M10 7.5 H15" stroke="#555" stroke-width="1.3"/></svg>
<div class="b" style="left:123px;top:21px;width:22px;height:20px;background:#f8f8f8;border:1px solid #e0e0e0"></div>
<svg style="left:126px;top:24px" width="17" height="16"><path d="M0.5 2.5 h5 l1 1 h5 v8 h-11z" fill="#f2d77a" stroke="#c9a640"/><path d="M11 5 l1.6 3.4 3.6 0.4 -2.7 2.4 0.8 3.6 -3.3-1.9 -3.3 1.9 0.8-3.6 -2.7-2.4 3.6-0.4z" fill="#f5d540" stroke="#c9a020" stroke-width="0.7"/></svg>
<div class="b" style="left:148px;top:21px;width:22px;height:20px;background:#f8f8f8;border:1px solid #e0e0e0"></div>
<svg style="left:151px;top:24px" width="17" height="15"><rect x="0.5" y="0.5" width="15" height="13" rx="1.5" fill="#fff" stroke="#4a7ec0" stroke-width="1.2"/><rect x="0.5" y="0.5" width="3" height="13" fill="#4a7ec0"/><path d="M6 4 h8 M6 7 h8 M6 10 h8" stroke="#8aa8d0"/></svg>
<svg style="left:176px;top:24px" width="17" height="17"><rect x="0.5" y="0.5" width="10" height="12" fill="#f4f4f4" stroke="#aaa"/><circle cx="7" cy="7" r="4.5" fill="#cfe0f0" stroke="#6a8fb8" stroke-width="1.2"/><path d="M10 10 l5 5" stroke="#d4a830" stroke-width="2.2"/></svg>
<div class="b" style="left:198px;top:23px;width:1px;height:16px;background:#c8c8c8;border-right:1px solid #fff"></div>
<svg style="left:206px;top:23px" width="16" height="17"><path d="M0.5 0.5 h7 l3 3 v9 h-10z" fill="#fff" stroke="#777"/><path d="M6 9 h3 v-3 h3 v3 h3 v3 h-3 v3 h-3 v-3 h-3z" fill="#3cb83c" stroke="#2a8a2a" stroke-width="0.6"/></svg>
<div class="t" style="left:223px;top:22.5px;line-height:14px;font-size:11px;color:#222"><svg class="g" viewBox="0 -88 100 100"><path class="g14"/></svg><svg class="g" viewBox="0 -88 100 100"><path class="g15"/></svg><svg class="g" viewBox="0 -88 100 100"><path class="g16"/></svg></div>
<svg style="left:266px;top:24px" width="16" height="15"><path d="M1 8 l7-6 7 6 -7 5z" fill="#e8c05a" stroke="#a8802a"/><path d="M1 8 l7 5 v2 l-7-5z" fill="#c89a3a"/></svg>
<svg style="left:290px;top:23px" width="16" height="17"><rect x="5" y="0.5" width="8" height="9" fill="#4a8ad8" stroke="#2a6ab8"/><ellipse cx="8" cy="13" rx="7.5" ry="3.5" fill="#dde8f4" stroke="#8aa0c0"/></svg>
<svg style="left:314px;top:24px" width="16" height="16"><circle cx="8" cy="8" r="7" fill="none" stroke="#8ab0d8" stroke-width="1.2"/><circle cx="8" cy="8" r="4.5" fill="none" stroke="#6a98c8" stroke-width="1.2"/><circle cx="8" cy="8" r="2" fill="#4a88c8"/><path d="M9 8 L15 15" stroke="#3aaa3a" stroke-width="2"/></svg>
<div class="b" style="left:336px;top:20px;width:69px;height:21px;background:#f6f6f6;border:1px solid #d8d8d8"></div>
<svg style="left:338px;top:23px" width="17" height="17"><ellipse cx="8" cy="5" rx="7.5" ry="3" fill="#6ab0e0" stroke="#3a80b8"/><path d="M2 7 h12 l-2 8 h-8z" fill="#f0d060" stroke="#b09030"/><circle cx="12" cy="12" r="4" fill="#2aa84a"/><path d="M11 10 v4 l3-2z" fill="#fff"/></svg>
<div class="t" style="left:357px;top:22.5px;line-height:14px;font-size:11px;color:#222"><svg class="g" viewBox="0 -88 100 100"><path class="g17"/></svg><svg class="g" viewBox="0 -88 100 100"><path class="g18"/></svg><svg class="g" viewBox="0 -88 100 100"><path class="g19"/></svg><svg class="g" viewBox="0 -88 100 100"><path class="g20"/></svg></div>
<svg style="left:409px;top:24px" width="4" height="15"><rect x="0" y="0" width="3" height="1" fill="#b0b0b0"/><rect x="0" y="2" width="3" height="1" fill="#b0b0b0"/><rect x="0" y="4" width="3" height="1" fill="#b0b0b0"/><rect x="0" y="6" width="3" height="1" fill="#b0b0b0"/><rect x="0" y="8" width="3" height="1" fill="#b0b0b0"/><rect x="0" y="10" width="3" height="1" fill="#b0b0b0"/><rect x="0" y="12" width="3" height="1" fill="#b0b0b0"/><rect x="0" y="14" width="3" height="1" fill="#b0b0b0"/></svg>
<div class="b" style="left:414px;top:21px;width:22px;height:20px;background:#f8f8f8;border:1px solid #e0e0e0"></div>
<svg style="left:420px;top:24px" width="10" height="15"><path d="M1 0.5 V13 L4 10 L6.5 15 L8.5 14 L6 9 H10z" fill="#333"/></svg>
<svg style="left:443px;top:24px" width="14" height="14"><path d="M7 0 V14 M0 7 H14" stroke="#555" stroke-width="1.2"/></svg>
<div class="b" style="left:464px;top:23px;width:1px;height:16px;background:#c8c8c8;border-right:1px solid #fff"></div>
<div class="b" style="left:479px;top:24px;width:1px;height:13px;background:#555"></div>
<div class="b" style="left:500px;top:30px;width:12px;height:1px;background:#555"></div>
<svg style="left:523px;top:24px" width="13" height="13"><path d="M0 13 L13 0" stroke="#555" stroke-width="1.2"/></svg>
<svg style="left:546px;top:23px" width="15" height="17"><path d="M0 10 L10 0 M3 12 L13 2 M5 14 L15 4 M1 6 L12 8" stroke="#555" stroke-width="1.1"/><text x="10" y="17" font-size="6" font-family="Liberation Sans" font-weight="bold" fill="#555">E</text></svg>
<svg style="left:571px;top:24px" width="15" height="16"><path d="M0 1 H12" stroke="#777" stroke-dasharray="1,1"/><path d="M0 4 H12" stroke="#777" stroke-dasharray="1,1"/><path d="M0 7 H12" stroke="#777" stroke-dasharray="1,1"/><path d="M0 10 H12" stroke="#777" stroke-dasharray="1,1"/><text x="9" y="16" font-size="6" font-family="Liberation Sans" font-weight="bold" fill="#555">F</text></svg>
<div class="t" style="left:598px;top:24.0px;line-height:14px;font-size:13px;font-weight:bold;color:#666">A</div>
<svg style="left:621px;top:24px" width="13" height="14"><rect x="0.5" y="0.5" width="12" height="12" fill="none" stroke="#777" stroke-dasharray="1,1"/><text x="3" y="11" font-size="11" font-family="Liberation Sans" font-weight="bold" fill="#444">T</text></svg>
<svg style="left:646px;top:24px" width="14" height="14"><path d="M0 4 L3 1 L6 4 L3 7z M6 10 L9 7 L12 10 L9 13z" fill="#333"/><path d="M3 6 L9 12" stroke="#333"/></svg>
<svg style="left:665px;top:30px" width="6" height="4"><path d="M0 0 H6 L3 3z" fill="#222"/></svg>
<div class="b" style="left:676px;top:23px;width:1px;height:16px;background:#c8c8c8;border-right:1px solid #fff"></div>
<svg style="left:678px;top:24px" width="4" height="15"><rect x="0" y="0" width="3" height="1" fill="#b0b0b0"/><rect x="0" y="2" width="3" height="1" fill="#b0b0b0"/><rect x="0" y="4" width="3" height="1" fill="#b0b0b0"/><rect x="0" y="6" width="3" height="1" fill="#b0b0b0"/><rect x="0" y="8" width="3" height="1" fill="#b0b0b0"/><rect x="0" y="10" width="3" height="1" fill="#b0b0b0"/><rect x="0" y="12" width="3" height="1" fill="#b0b0b0"/><rect x="0" y="14" width="3" height="1" fill="#b0b0b0"/></svg>
<svg style="left:688px;top:24px" width="15" height="15"><path d="M2 0 V14 H15" stroke="#444" stroke-width="1.2" fill="none"/><path d="M9 3 V11 M9 4 H11" stroke="#3aa83a" stroke-width="1.6"/></svg>
<div class="b" style="left:706px;top:21px;width:23px;height:20px;background:#f8f8f8;border:1px solid #e0e0e0"></div>
<svg style="left:711px;top:24px" width="15" height="15"><path d="M2 0 V14 H15" stroke="#444" stroke-width="1.2" fill="none"/><rect x="6" y="3" width="5" height="8" fill="#3aa83a" stroke="#237a23"/><path d="M8.5 0 V14" stroke="#237a23"/></svg>
<svg style="left:736px;top:24px" width="15" height="15"><path d="M2 0 V14 H15" stroke="#444" stroke-width="1.2" fill="none"/><path d="M2 10 Q7 1 13 9" stroke="#3aa83a" stroke-width="1.5" fill="none"/></svg>
<div class="b" style="left:758px;top:23px;width:1px;height:16px;background:#c8c8c8;border-right:1px solid #fff"></div>
<svg style="left:765px;top:23px" width="16" height="17"><circle cx="6.5" cy="6.5" r="5.5" fill="#d8ecfb" stroke="#3a7ac8" stroke-width="1.4"/><path d="M4 6.5 h5 M6.5 4 v5" stroke="#2a6ac0" stroke-width="1.6"/><path d="M10 10 l5 5" stroke="#d4a830" stroke-width="2.5"/></svg>
<svg style="left:789px;top:23px" width="16" height="17"><circle cx="6.5" cy="6.5" r="5.5" fill="#d8ecfb" stroke="#3a7ac8" stroke-width="1.4"/><path d="M4 6.5 h5" stroke="#2a6ac0" stroke-width="1.6"/><path d="M10 10 l5 5" stroke="#d4a830" stroke-width="2.5"/></svg>
<svg style="left:815px;top:24px" width="15" height="15"><rect x="0" y="0" width="7" height="7" fill="#3a9a3a"/><rect x="8" y="0" width="7" height="7" fill="#3a7ac8"/><rect x="0" y="8" width="7" height="7" fill="#3a7ac8"/><rect x="8" y="8" width="7" height="7" fill="#3a9a3a"/><path d="M1.5 3.5 h4 M9.5 3.5 h4 M1.5 11.5 h4 M9.5 11.5 h4" stroke="#fff"/></svg>
<div class="b" style="left:837px;top:23px;width:1px;height:16px;background:#c8c8c8;border-right:1px solid #fff"></div>
<div class="b" style="left:841px;top:21px;width:23px;height:20px;background:#f8f8f8;border:1px solid #e0e0e0"></div>
<svg style="left:845px;top:24px" width="15" height="15"><path d="M3 0 V13 H15" stroke="#444" stroke-width="1.2" fill="none"/><path d="M7 3 L12 7 L7 11z" fill="#3aa83a"/></svg>
<div class="b" style="left:866px;top:21px;width:23px;height:20px;background:#f8f8f8;border:1px solid #e0e0e0"></div>
<svg style="left:870px;top:24px" width="15" height="15"><path d="M3 0 V13 H15" stroke="#444" stroke-width="1.2" fill="none"/><path d="M8 1 V12" stroke="#444"/><path d="M14 7 L10 4 V10z" fill="#d04040"/><path d="M10 7 H15" stroke="#d04040"/></svg>
<div class="b" style="left:890px;top:23px;width:1px;height:16px;background:#c8c8c8;border-right:1px solid #fff"></div>
<svg style="left:900px;top:23px" width="17" height="17"><path d="M0.5 2.5 h6 l3 3 v8 h-9z" fill="#fff" stroke="#777"/><path d="M3 0.5 h6 l3 3" fill="none" stroke="#777"/><path d="M7 10 h3 v-3 h3 v3 h3 v3 h-3 v3 h-3 v-3 h-3z" fill="#3cb83c" stroke="#2a8a2a" stroke-width="0.6"/></svg>
<svg style="left:920px;top:30px" width="6" height="4"><path d="M0 0 H6 L3 3z" fill="#222"/></svg>
<svg style="left:932px;top:23px" width="16" height="17"><circle cx="8" cy="8.5" r="7.3" fill="#2a6ac8"/><circle cx="8" cy="8.5" r="5.2" fill="#f4f8fc"/><path d="M8 5 V8.5 H11" stroke="#333" stroke-width="1.2" fill="none"/></svg>
<svg style="left:956px;top:30px" width="6" height="4"><path d="M0 0 H6 L3 3z" fill="#222"/></svg>
<svg style="left:967px;top:24px" width="17" height="15"><rect x="0.5" y="0.5" width="16" height="14" fill="#fff" stroke="#3a6aa8"/><rect x="0.5" y="0.5" width="16" height="3" fill="#3a6aa8"/><path d="M2 9 l4-2 4 1 5-3" stroke="#d04040" fill="none"/><path d="M2 12 l4-1 4 0 5-2" stroke="#3aa83a" fill="none"/></svg>
<svg style="left:991px;top:30px" width="6" height="4"><path d="M0 0 H6 L3 3z" fill="#222"/></svg>
<svg style="left:1000px;top:24px" width="4" height="15"><rect x="0" y="0" width="3" height="1" fill="#b0b0b0"/><rect x="0" y="2" width="3" height="1" fill="#b0b0b0"/><rect x="0" y="4" width="3" height="1" fill="#b0b0b0"/><rect x="0" y="6" width="3" height="1" fill="#b0b0b0"/><rect x="0" y="8" width="3" height="1" fill="#b0b0b0"/><rect x="0" y="10" width="3" height="1" fill="#b0b0b0"/><rect x="0" y="12" width="3" height="1" fill="#b0b0b0"/><rect x="0" y="14" width="3" height="1" fill="#b0b0b0"/></svg>
<div class="t" style="left:1011px;top:24.0px;line-height:14px;font-size:10px;color:#3a3a3a;letter-spacing:-0.3px">M1</div>
<div class="t" style="left:1036px;top:24.0px;line-height:14px;font-size:10px;color:#3a3a3a;letter-spacing:-0.3px">M5</div>
<div class="t" style="left:1059px;top:24.0px;line-height:14px;font-size:10px;color:#3a3a3a;letter-spacing:-0.3px">M15</div>
<div class="t" style="left:1083px;top:24.0px;line-height:14px;font-size:10px;color:#3a3a3a;letter-spacing:-0.3px">M30</div>
<div class="b" style="left:1105px;top:21px;width:23px;height:20px;background:#f8f8f8;border:1px solid #d8d8d8"></div>
<div class="t" style="left:1110px;top:24.0px;line-height:14px;font-size:10px;color:#3a3a3a;letter-spacing:-0.3px">H1</div>
<div class="t" style="left:1134px;top:24.0px;line-height:14px;font-size:10px;color:#3a3a3a;letter-spacing:-0.3px">H4</div>
<div class="t" style="left:1159px;top:24.0px;line-height:14px;font-size:10px;color:#3a3a3a;letter-spacing:-0.3px">D1</div>
<div class="t" style="left:1184px;top:24.0px;line-height:14px;font-size:10px;color:#3a3a3a;letter-spacing:-0.3px">W1</div>
<div class="t" style="left:1207px;top:24.0px;line-height:14px;font-size:10px;color:#3a3a3a;letter-spacing:-0.3px">MN</div>
<div class="b" style="left:1227px;top:20px;width:1px;height:21px;background:#777"></div>
<svg style="left:1237px;top:24px" width="14" height="15"><circle cx="8.5" cy="5.5" r="4" fill="none" stroke="#3a70d0" stroke-width="1.3"/><path d="M5.5 8.5 L1.5 12.5" stroke="#3a70d0" stroke-width="2.2"/></svg>
<svg style="left:1255px;top:20px" width="25" height="22"><ellipse cx="9" cy="15" rx="6.5" ry="4.5" fill="#f4f4f4" stroke="#c8c8c8"/><path d="M4 18 L3 22 L8 19z" fill="#d8d8d8"/><circle cx="17" cy="9" r="7.5" fill="#dc4430"/><text x="14" y="13.5" font-size="12" font-family="Liberation Sans" font-weight="bold" fill="#fff">1</text></svg>
<div class="b" style="left:0px;top:42px;width:145px;height:470px;background:#f0f0f0"></div>
<div class="b" style="left:0px;top:44px;width:129px;height:12px;background:linear-gradient(90deg,#c6d6e8,#d6e2ef)"></div>
<div class="t" style="left:0px;top:44.0px;line-height:12px;font-size:11px;color:#222"><svg class="g" viewBox="0 -88 100 100"><path class="g21"/></svg><svg class="g" viewBox="0 -88 100 100"><path class="g22"/></svg><svg class="g" viewBox="0 -88 100 100"><path class="g23"/></svg><svg class="g" viewBox="0 -88 100 100"><path class="g24"/></svg>: 22:52:27</div>
<svg style="left:134px;top:48px" width="5" height="5"><path d="M0 0 L5 5 M5 0 L0 5" stroke="#111" stroke-width="1.7"/></svg>
<div class="b" style="left:0px;top:57px;width:141px;height:205px;background:#fff"></div>
<div class="b" style="left:0px;top:78px;width:141px;height:1px;background:#d8d8d8"></div>
<div class="b" style="left:50px;top:57px;width:1px;height:39px;background:#e6e6e6"></div>
<div class="b" style="left:86px;top:57px;width:1px;height:39px;background:#e6e6e6"></div>
<div class="b" style="left:122px;top:57px;width:1px;height:39px;background:#e6e6e6"></div>
<div class="t" style="left:2px;top:60.0px;line-height:14px;font-size:11px;color:#222"><svg class="g" viewBox="0 -88 100 100"><path class="g19"/></svg><svg class="g" viewBox="0 -88 100 100"><path class="g20"/></svg><svg class="g" viewBox="0 -88 100 100"><path class="g25"/></svg><svg class="g" viewBox="0 -88 100 100"><path class="g26"/></svg></div>
<div class="t" style="right:1198px;top:60.0px;line-height:14px;font-size:11px;color:#222"><svg class="g" viewBox="0 -88 100 100"><path class="g27"/></svg><svg class="g" viewBox="0 -88 100 100"><path class="g24"/></svg></div>
<div class="t" style="right:1162px;top:60.0px;line-height:14px;font-size:11px;color:#222"><svg class="g" viewBox="0 -88 100 100"><path class="g28"/></svg><svg class="g" viewBox="0 -88 100 100"><path class="g24"/></svg></div>
<div class="t" style="left:132px;top:60.0px;line-height:14px;font-size:11px;color:#666">!</div>
<div class="b" style="left:0px;top:79px;width:141px;height:17px;background:#fae4c8"></div>
<div class="b" style="left:50px;top:79px;width:1px;height:17px;background:#e8d0b0"></div>
<div class="b" style="left:86px;top:79px;width:1px;height:17px;background:#e8d0b0"></div>
<div class="b" style="left:122px;top:79px;width:1px;height:17px;background:#e8d0b0"></div>
<svg style="left:1px;top:82px" width="10" height="10"><path d="M5 0 L10 5 H7 V10 H3 V5 H0z" fill="#3aa83a" stroke="#237a23" stroke-width="0.6"/></svg>
<div class="t" style="left:14px;top:80.5px;line-height:14px;font-size:11px;color:#222">XA...</div>
<div class="t" style="left:58px;top:80.5px;line-height:14px;font-size:11px;color:#3a3ae0">502...</div>
<div class="t" style="left:94px;top:80.5px;line-height:14px;font-size:11px;color:#3a3ae0">502...</div>
<div class="t" style="left:132px;top:80.5px;line-height:14px;font-size:11px;color:#3a3ae0">..</div>
<div class="b" style="left:0px;top:262px;width:57px;height:19px;background:#fff;border-bottom:2px solid #333;border-right:2px solid #333"></div>
<div class="b" style="left:57px;top:262px;width:84px;height:2px;background:#333"></div>
<div class="b" style="left:143px;top:42px;width:1px;height:240px;background:#d6d6d6"></div>
<div class="b" style="left:0px;top:56px;width:141px;height:1px;background:#c8c8c8"></div>
<div class="b" style="left:0px;top:285px;width:144px;height:2px;background:#c8c8c8"></div>
<div class="t" style="left:7px;top:265.0px;line-height:14px;font-size:11px;color:#222"><svg class="g" viewBox="0 -88 100 100"><path class="g19"/></svg><svg class="g" viewBox="0 -88 100 100"><path class="g20"/></svg><svg class="g" viewBox="0 -88 100 100"><path class="g25"/></svg><svg class="g" viewBox="0 -88 100 100"><path class="g26"/></svg></div>
<div class="t" style="left:67px;top:265.0px;line-height:14px;font-size:11px;color:#999"><svg class="g" viewBox="0 -88 100 100"><path class="g29"/></svg><svg class="g" viewBox="0 -88 100 100"><path class="g30"/></svg><svg class="g" viewBox="0 -88 100 100"><path class="g6"/></svg></div>
<div class="b" style="left:107px;top:266px;width:1px;height:13px;background:#888"></div>
<div class="b" style="left:0px;top:288px;width:129px;height:11px;background:linear-gradient(90deg,#a8bcd8,#bfd1e8)"></div>
<div class="t" style="left:0px;top:288.0px;line-height:12px;font-size:11px;color:#222"><svg class="g" viewBox="0 -88 100 100"><path class="g31"/></svg><svg class="g" viewBox="0 -88 100 100"><path class="g32"/></svg></div>
<svg style="left:134px;top:292px" width="5" height="5"><path d="M0 0 L5 5 M5 0 L0 5" stroke="#111" stroke-width="1.7"/></svg>
<div class="b" style="left:0px;top:301px;width:141px;height:206px;background:#fff"></div>
<svg style="left:0px;top:303px" width="141" height="120"><g stroke="#999" stroke-dasharray="1,1" fill="none"><path d="M8.5 16 V113"/><path d="M12 26 H18"/><path d="M27.5 31 V61"/><path d="M31 43 H38 M31 61 H38"/><path d="M12 78 H18 M12 95 H18 M12 113 H18"/></g><g fill="#fff" stroke="#9a9a9a"><rect x="4.5" y="22.5" width="8" height="8"/><rect x="23.5" y="39.5" width="8" height="8"/><rect x="23.5" y="57.5" width="8" height="8"/><rect x="4.5" y="74.5" width="8" height="8"/><rect x="4.5" y="91.5" width="8" height="8"/><rect x="4.5" y="109.5" width="8" height="8"/></g><g stroke="#3a5a9a"><path d="M6 26.5 H11"/><path d="M25 43.5 H30 M27.5 41 V46"/><path d="M25 61.5 H30 M27.5 59 V64"/><path d="M6 78.5 H11 M8.5 76 V81"/><path d="M6 95.5 H11 M8.5 93 V98"/><path d="M6 113.5 H11 M8.5 111 V116"/></g></svg>
<svg style="left:2px;top:304px" width="14" height="14"><rect x="0.5" y="0.5" width="10" height="9" fill="#e6eef8" stroke="#7aa0d0"/><rect x="3.5" y="4.5" width="10" height="9" fill="#e6eef8" stroke="#7aa0d0"/><path d="M5 10 l2-2 2 2 2-2" stroke="#5a80c0" fill="none"/></svg>
<div class="t" style="left:20px;top:304.0px;line-height:14px;font-size:11px;color:#222">AUS Forex MT4</div>
<svg style="left:19px;top:321px" width="16" height="15"><circle cx="6" cy="4" r="3.5" fill="#e0b848" stroke="#a88020"/><circle cx="10.5" cy="4.5" r="3.5" fill="#e8c050" stroke="#a88020"/><path d="M1 14 Q1 7 6 7 Q10 7 10 14z" fill="#5ac04a"/><path d="M5 14 Q5 8 10.5 8 Q15.5 8 15.5 14z" fill="#e8c050" stroke="#a88020"/></svg>
<div class="t" style="left:39px;top:321.0px;line-height:14px;font-size:11px;color:#222"><svg class="g" viewBox="0 -88 100 100"><path class="g33"/></svg><svg class="g" viewBox="0 -88 100 100"><path class="g34"/></svg></div>
<svg style="left:39px;top:339px" width="11" height="15"><path d="M0.5 1.5 L6 0.5 L10.5 2 V14 L5 14.5 L0.5 13z" fill="#4a98e0" stroke="#2a6ab0"/><path d="M5.5 1.5 V14" stroke="#a8d0f8"/><path d="M2 4 h2.5 M2 6 h2.5" stroke="#d8ecff"/></svg>
<svg style="left:39px;top:357px" width="11" height="15"><path d="M0.5 1.5 L6 0.5 L10.5 2 V14 L5 14.5 L0.5 13z" fill="#4a98e0" stroke="#2a6ab0"/><path d="M5.5 1.5 V14" stroke="#a8d0f8"/><path d="M2 4 h2.5 M2 6 h2.5" stroke="#d8ecff"/></svg>
<div class="t" style="left:57px;top:339.0px;line-height:14px;font-size:11px;color:#222">AUSCommercial-</div>
<div class="b" style="left:55px;top:355px;width:86px;height:17px;background:#3379d4"></div>
<div class="t" style="left:57px;top:357.0px;line-height:14px;font-size:11px;color:#fff">AUSCommercial-</div>
<svg style="left:19px;top:374px" width="14" height="14"><rect x="0.5" y="0.5" width="13" height="13" rx="2" fill="#f6dc78" stroke="#b89a40"/><text x="4" y="11" font-size="10" font-style="italic" font-family="Liberation Serif" fill="#805a10">f</text></svg>
<div class="t" style="left:39px;top:374.0px;line-height:14px;font-size:11px;color:#222"><svg class="g" viewBox="0 -88 100 100"><path class="g35"/></svg><svg class="g" viewBox="0 -88 100 100"><path class="g36"/></svg><svg class="g" viewBox="0 -88 100 100"><path class="g37"/></svg><svg class="g" viewBox="0 -88 100 100"><path class="g38"/></svg></div>
<svg style="left:18px;top:391px" width="16" height="15"><ellipse cx="8" cy="5" rx="7.5" ry="3" fill="#6ab0e0" stroke="#3a80b8"/><circle cx="8" cy="7" r="3" fill="#f0d060"/><path d="M9 10 l4 2 -2 3 -3-2z" fill="#e8c050" stroke="#a88020" stroke-width="0.6"/></svg>
<div class="t" style="left:39px;top:391.0px;line-height:14px;font-size:11px;color:#222">EA<svg class="g" viewBox="0 -88 100 100"><path class="g19"/></svg><svg class="g" viewBox="0 -88 100 100"><path class="g20"/></svg></div>
<svg style="left:19px;top:409px" width="15" height="15"><path d="M1 1 h10 v11 h-10z" fill="#f4e4a0" stroke="#b8a050"/><path d="M3 4 h6 M3 7 h6" stroke="#b8a050"/><path d="M9 10 l4 2 -2 3 -3-2z" fill="#e8c050" stroke="#a88020" stroke-width="0.6"/></svg>
<div class="t" style="left:39px;top:409.0px;line-height:14px;font-size:11px;color:#222"><svg class="g" viewBox="0 -88 100 100"><path class="g39"/></svg><svg class="g" viewBox="0 -88 100 100"><path class="g40"/></svg></div>
<div class="b" style="left:0px;top:507px;width:37px;height:19px;background:#fff;border-bottom:2px solid #333;border-right:2px solid #333"></div>
<div class="b" style="left:37px;top:507px;width:104px;height:2px;background:#333"></div>
<div class="b" style="left:143px;top:288px;width:1px;height:240px;background:#d6d6d6"></div>
<div class="b" style="left:0px;top:300px;width:141px;height:1px;background:#c8c8c8"></div>
<div class="t" style="left:7px;top:510.0px;line-height:14px;font-size:11px;color:#222"><svg class="g" viewBox="0 -88 100 100"><path class="g41"/></svg><svg class="g" viewBox="0 -88 100 100"><path class="g42"/></svg></div>
<div class="t" style="left:46px;top:510.0px;line-height:14px;font-size:11px;color:#999"><svg class="g" viewBox="0 -88 100 100"><path class="g43"/></svg><svg class="g" viewBox="0 -88 100 100"><path class="g44"/></svg><svg class="g" viewBox="0 -88 100 100"><path class="g45"/></svg></div>
<div class="b" style="left:86px;top:511px;width:1px;height:13px;background:#888"></div>
<div class="b" style="left:0px;top:529px;width:145px;height:2px;background:#d4d4d4"></div>
<div class="b" style="left:145px;top:42px;width:1135px;height:470px;background:#000"></div>
<div class="b" style="left:148px;top:45px;width:1096px;height:450px;border:1px solid #d8d8d8"></div>
<svg style="left:1018px;top:45px" width="9" height="5"><path d="M0 0 H9 L4.5 5z" fill="#8a9aa8"/></svg>
<svg style="left:152px;top:52px" width="7" height="4"><path d="M0 0 H7 L3.5 4z" fill="#fff"/></svg>
<div class="b" style="left:148px;top:322px;width:1px;height:24px;background:#2aa82a"></div>
<div class="b" style="left:148px;top:356px;width:1px;height:10px;background:#2aa82a"></div>
<div class="b" style="left:1244px;top:56px;width:3px;height:1px;background:#ddd"></div>
<div class="t" style="left:1248px;top:50.4px;line-height:12px;font-size:9px;color:#f4f4f4;letter-spacing:0;-webkit-text-stroke:0.1px #f4f4f4;transform:scaleX(.88);transform-origin:0 0">5433.40</div>
<div class="b" style="left:1244px;top:85px;width:3px;height:1px;background:#ddd"></div>
<div class="t" style="left:1248px;top:79.4px;line-height:12px;font-size:9px;color:#f4f4f4;letter-spacing:0;-webkit-text-stroke:0.1px #f4f4f4;transform:scaleX(.88);transform-origin:0 0">5393.80</div>
<div class="b" style="left:1244px;top:114px;width:3px;height:1px;background:#ddd"></div>
<div class="t" style="left:1248px;top:108.5px;line-height:12px;font-size:9px;color:#f4f4f4;letter-spacing:0;-webkit-text-stroke:0.1px #f4f4f4;transform:scaleX(.88);transform-origin:0 0">5354.20</div>
<div class="b" style="left:1244px;top:143px;width:3px;height:1px;background:#ddd"></div>
<div class="t" style="left:1248px;top:137.5px;line-height:12px;font-size:9px;color:#f4f4f4;letter-spacing:0;-webkit-text-stroke:0.1px #f4f4f4;transform:scaleX(.88);transform-origin:0 0">5313.40</div>
<div class="b" style="left:1244px;top:173px;width:3px;height:1px;background:#ddd"></div>
<div class="t" style="left:1248px;top:166.5px;line-height:12px;font-size:9px;color:#f4f4f4;letter-spacing:0;-webkit-text-stroke:0.1px #f4f4f4;transform:scaleX(.88);transform-origin:0 0">5273.80</div>
<div class="b" style="left:1244px;top:202px;width:3px;height:1px;background:#ddd"></div>
<div class="t" style="left:1248px;top:195.6px;line-height:12px;font-size:9px;color:#f4f4f4;letter-spacing:0;-webkit-text-stroke:0.1px #f4f4f4;transform:scaleX(.88);transform-origin:0 0">5233.00</div>
<div class="b" style="left:1244px;top:231px;width:3px;height:1px;background:#ddd"></div>
<div class="t" style="left:1248px;top:224.6px;line-height:12px;font-size:9px;color:#f4f4f4;letter-spacing:0;-webkit-text-stroke:0.1px #f4f4f4;transform:scaleX(.88);transform-origin:0 0">5193.40</div>
<div class="b" style="left:1244px;top:260px;width:3px;height:1px;background:#ddd"></div>
<div class="t" style="left:1248px;top:253.6px;line-height:12px;font-size:9px;color:#f4f4f4;letter-spacing:0;-webkit-text-stroke:0.1px #f4f4f4;transform:scaleX(.88);transform-origin:0 0">5152.60</div>
<div class="b" style="left:1244px;top:289px;width:3px;height:1px;background:#ddd"></div>
<div class="t" style="left:1248px;top:282.6px;line-height:12px;font-size:9px;color:#f4f4f4;letter-spacing:0;-webkit-text-stroke:0.1px #f4f4f4;transform:scaleX(.88);transform-origin:0 0">5113.00</div>
<div class="b" style="left:1244px;top:318px;width:3px;height:1px;background:#ddd"></div>
<div class="t" style="left:1248px;top:311.7px;line-height:12px;font-size:9px;color:#f4f4f4;letter-spacing:0;-webkit-text-stroke:0.1px #f4f4f4;transform:scaleX(.88);transform-origin:0 0">5072.20</div>
<div class="b" style="left:1244px;top:347px;width:3px;height:1px;background:#ddd"></div>
<div class="t" style="left:1248px;top:340.7px;line-height:12px;font-size:9px;color:#f4f4f4;letter-spacing:0;-webkit-text-stroke:0.1px #f4f4f4;transform:scaleX(.88);transform-origin:0 0">5032.60</div>
<div class="b" style="left:1244px;top:376px;width:3px;height:1px;background:#ddd"></div>
<div class="t" style="left:1248px;top:369.7px;line-height:12px;font-size:9px;color:#f4f4f4;letter-spacing:0;-webkit-text-stroke:0.1px #f4f4f4;transform:scaleX(.88);transform-origin:0 0">4991.80</div>
<div class="b" style="left:1244px;top:405px;width:3px;height:1px;background:#ddd"></div>
<div class="t" style="left:1248px;top:398.8px;line-height:12px;font-size:9px;color:#f4f4f4;letter-spacing:0;-webkit-text-stroke:0.1px #f4f4f4;transform:scaleX(.88);transform-origin:0 0">4952.20</div>
<div class="b" style="left:1244px;top:434px;width:3px;height:1px;background:#ddd"></div>
<div class="t" style="left:1248px;top:427.8px;line-height:12px;font-size:9px;color:#f4f4f4;letter-spacing:0;-webkit-text-stroke:0.1px #f4f4f4;transform:scaleX(.88);transform-origin:0 0">4911.40</div>
<div class="b" style="left:1244px;top:463px;width:3px;height:1px;background:#ddd"></div>
<div class="t" style="left:1248px;top:456.8px;line-height:12px;font-size:9px;color:#f4f4f4;letter-spacing:0;-webkit-text-stroke:0.1px #f4f4f4;transform:scaleX(.88);transform-origin:0 0">4871.80</div>
<div class="b" style="left:1244px;top:492px;width:3px;height:1px;background:#ddd"></div>
<div class="t" style="left:1248px;top:485.9px;line-height:12px;font-size:9px;color:#f4f4f4;letter-spacing:0;-webkit-text-stroke:0.1px #f4f4f4;transform:scaleX(.88);transform-origin:0 0">4832.20</div>
<div class="b" style="left:1245px;top:350px;width:35px;height:9px;background:#fff"></div>
<div class="t" style="left:1248px;top:349.5px;line-height:10px;font-size:9px;color:#000;transform:scaleX(.88);transform-origin:0 0">5022.01</div>
<div class="b" style="left:182px;top:59px;width:616px;height:27px;background:#05090e;border:1px solid #1d4a66"></div>
<svg style="left:189px;top:62px" width="23" height="22"><rect x="1.5" y="1.5" width="20" height="19" rx="3.5" fill="#2a4aa8"/><rect x="0.5" y="0.5" width="20" height="19" rx="3.5" fill="#f8f040"/><text x="10.5" y="10.5" text-anchor="middle" font-size="10.5" font-weight="bold" font-family="Liberation Sans" fill="#0a0a0a" textLength="15" lengthAdjust="spacingAndGlyphs">FX</text><text x="10.5" y="17" text-anchor="middle" font-size="6.5" font-weight="bold" font-family="Liberation Sans" fill="#1a1a1a" textLength="16" lengthAdjust="spacingAndGlyphs">DATA</text></svg>
<div class="t" style="left:216px;top:65.0px;line-height:14px;font-size:11px;color:#e6e6e6"><svg class="g" viewBox="0 -88 100 100"><path class="g46"/></svg><svg class="g" viewBox="0 -88 100 100"><path class="g47"/></svg><svg class="g" viewBox="0 -88 100 100"><path class="g48"/></svg><svg class="g" viewBox="0 -88 100 100"><path class="g49"/></svg> | MyfxData.cn &nbsp;<svg class="g" viewBox="0 -88 100 100"><path class="g50"/></svg><svg class="g" viewBox="0 -88 100 100"><path class="g51"/></svg><svg class="g" viewBox="0 -88 100 100"><path class="g52"/></svg><svg class="g" viewBox="0 -88 100 100"><path class="g53"/></svg><svg class="g" viewBox="0 -88 100 100"><path class="g54"/></svg><svg class="g" viewBox="0 -88 100 100"><path class="g55"/></svg><svg class="g" viewBox="0 -88 100 100"><path class="g56"/></svg><svg class="g" viewBox="0 -88 100 100"><path class="g19"/></svg><svg class="g" viewBox="0 -88 100 100"><path class="g20"/></svg></div>
<div class="t" style="left:475px;top:66.0px;line-height:14px;font-size:12px;color:#d8d23c">6<svg class="g" viewBox="0 -88 100 100"><path class="g57"/></svg>15<svg class="g" viewBox="0 -88 100 100"><path class="g58"/></svg><svg class="g" viewBox="0 -88 100 100"><path class="g59"/></svg><svg class="g" viewBox="0 -88 100 100"><path class="g60"/></svg><svg class="g" viewBox="0 -88 100 100"><path class="g61"/></svg></div>
<div class="t" style="left:612px;top:66.0px;line-height:14px;font-size:12px;color:#da3a44"><svg class="g" viewBox="0 -88 100 100"><path class="g62"/></svg><svg class="g" viewBox="0 -88 100 100"><path class="g63"/></svg><svg class="g" viewBox="0 -88 100 100"><path class="g64"/></svg><svg class="g" viewBox="0 -88 100 100"><path class="g50"/></svg><svg class="g" viewBox="0 -88 100 100"><path class="g51"/></svg><svg class="g" viewBox="0 -88 100 100"><path class="g37"/></svg><svg class="g" viewBox="0 -88 100 100"><path class="g38"/></svg><svg class="g" viewBox="0 -88 100 100"><path class="g65"/></svg><svg class="g" viewBox="0 -88 100 100"><path class="g66"/></svg></div>
<div class="b" style="left:745px;top:63px;width:19px;height:19px;border:1px solid #1d4a66;border-radius:2px;background:#000"></div>
<svg style="left:749px;top:67px" width="11" height="11"><path d="M1 10 H10 M1 10 L9 3" stroke="#e8e8e8" stroke-width="1.3" fill="none"/></svg>
<div class="b" style="left:771px;top:63px;width:19px;height:19px;border:1px solid #1d4a66;border-radius:2px;background:#000"></div>
<div class="b" style="left:775px;top:71px;width:11px;height:3px;background:#f0f0f0"></div>
<div class="b" style="left:182px;top:89px;width:616px;height:405px;background:#05090e;border:1px solid #1d4a66;border-bottom:none"></div>
<div class="b" style="left:167px;top:89px;width:14px;height:19px;border:1px solid #1d4a66;border-radius:2px;background:#000"></div>
<svg style="left:168px;top:93px" width="12" height="12"><path d="M1 10 L6 2 L11 10z" fill="#fff"/></svg>
<div class="b" style="left:167px;top:109px;width:14px;height:19px;border:1px solid #1d4a66;border-radius:2px;background:#000"></div>
<svg style="left:168px;top:113px" width="12" height="12"><path d="M1 2 L6 10 L11 2z" fill="#fff"/></svg>
<div class="b" style="left:191px;top:103px;width:51px;height:21px;border:1px solid #1d4a66;border-radius:2px;background:#000"></div>
<div class="t" style="left:116.5px;width:200px;text-align:center;top:106.5px;line-height:14px;font-size:10.5px;color:#e8e8e8"><svg class="g" viewBox="0 -88 100 100"><path class="g62"/></svg><svg class="g" viewBox="0 -88 100 100"><path class="g67"/></svg><svg class="g" viewBox="0 -88 100 100"><path class="g50"/></svg><svg class="g" viewBox="0 -88 100 100"><path class="g51"/></svg></div>
<div class="b" style="left:249px;top:103px;width:51px;height:21px;border:1px solid #1d4a66;border-radius:2px;background:#000"></div>
<div class="t" style="left:174.5px;width:200px;text-align:center;top:106.5px;line-height:14px;font-size:10.5px;color:#e8e8e8"><svg class="g" viewBox="0 -88 100 100"><path class="g6"/></svg><svg class="g" viewBox="0 -88 100 100"><path class="g7"/></svg><svg class="g" viewBox="0 -88 100 100"><path class="g50"/></svg><svg class="g" viewBox="0 -88 100 100"><path class="g51"/></svg></div>
<div class="b" style="left:306px;top:103px;width:51px;height:21px;border:1px solid #1d4a66;border-radius:2px;background:#000"></div>
<div class="t" style="left:231.5px;width:200px;text-align:center;top:106.5px;line-height:14px;font-size:10.5px;color:#e8e8e8"><svg class="g" viewBox="0 -88 100 100"><path class="g52"/></svg><svg class="g" viewBox="0 -88 100 100"><path class="g68"/></svg><svg class="g" viewBox="0 -88 100 100"><path class="g69"/></svg><svg class="g" viewBox="0 -88 100 100"><path class="g6"/></svg></div>
<div class="b" style="left:364px;top:103px;width:51px;height:21px;border:1px solid #1d4a66;border-radius:2px;background:#000"></div>
<div class="t" style="left:289.5px;width:200px;text-align:center;top:106.5px;line-height:14px;font-size:10.5px;color:#e8e8e8"><svg class="g" viewBox="0 -88 100 100"><path class="g23"/></svg><svg class="g" viewBox="0 -88 100 100"><path class="g70"/></svg><svg class="g" viewBox="0 -88 100 100"><path class="g71"/></svg><svg class="g" viewBox="0 -88 100 100"><path class="g6"/></svg></div>
<div class="b" style="left:422px;top:103px;width:51px;height:21px;border:1px solid #1d4a66;border-radius:2px;background:#163448"></div>
<div class="t" style="left:347.5px;width:200px;text-align:center;top:106.5px;line-height:14px;font-size:10.5px;color:#e8e8e8"><svg class="g" viewBox="0 -88 100 100"><path class="g72"/></svg><svg class="g" viewBox="0 -88 100 100"><path class="g73"/></svg><svg class="g" viewBox="0 -88 100 100"><path class="g48"/></svg><svg class="g" viewBox="0 -88 100 100"><path class="g49"/></svg></div>
<div class="b" style="left:481px;top:103px;width:51px;height:21px;border:1px solid #1d4a66;border-radius:2px;background:#000"></div>
<div class="t" style="left:406.5px;width:200px;text-align:center;top:106.5px;line-height:14px;font-size:10.5px;color:#e8e8e8"><svg class="g" viewBox="0 -88 100 100"><path class="g74"/></svg><svg class="g" viewBox="0 -88 100 100"><path class="g73"/></svg><svg class="g" viewBox="0 -88 100 100"><path class="g75"/></svg><svg class="g" viewBox="0 -88 100 100"><path class="g76"/></svg></div>
<div class="b" style="left:255px;top:95px;width:12px;height:8px;background:#3a9a3a"></div>
<div class="t" style="left:258px;top:95.0px;line-height:8px;font-size:7px;font-weight:bold;color:#fff">N</div>
<div class="b" style="left:268px;top:95px;width:12px;height:8px;background:#e88a2a"></div>
<div class="t" style="left:271px;top:95.0px;line-height:8px;font-size:7px;font-weight:bold;color:#fff">E</div>
<div class="b" style="left:281px;top:91px;width:13px;height:12px;background:#3a7ae0"></div>
<div class="t" style="left:284px;top:94.0px;line-height:8px;font-size:7px;font-weight:bold;color:#cfe0ff">W</div>
<div class="b" style="left:441px;top:86px;width:23px;height:14px;background:#000"></div>
<svg style="left:442px;top:87px" width="21" height="13"><path d="M2 0.5 h17 q1.5 0 1.5 1.5 v5 q0 1.5 -1.5 1.5 h-10 l-3 4 0.5-4 h-4.5 q-1.5 0 -1.5-1.5 v-5 q0-1.5 1.5-1.5z" fill="#f0902a"/><text x="10.5" y="7" text-anchor="middle" font-size="6.5" font-weight="bold" font-family="Liberation Sans" fill="#fff6e8" textLength="14" lengthAdjust="spacingAndGlyphs">HOT</text></svg>
<div class="t" style="left:540px;top:92.5px;line-height:14px;font-size:10px;color:#d8d8d8"><svg class="g" viewBox="0 -88 100 100"><path class="g77"/></svg><svg class="g" viewBox="0 -88 100 100"><path class="g34"/></svg><svg class="g" viewBox="0 -88 100 100"><path class="g78"/></svg><svg class="g" viewBox="0 -88 100 100"><path class="g79"/></svg>:USD</div>
<div class="t" style="left:611px;top:92.5px;line-height:14px;font-size:10px;color:#d8d8d8"><svg class="g" viewBox="0 -88 100 100"><path class="g80"/></svg><svg class="g" viewBox="0 -88 100 100"><path class="g81"/></svg><svg class="g" viewBox="0 -88 100 100"><path class="g64"/></svg><svg class="g" viewBox="0 -88 100 100"><path class="g82"/></svg>:30%</div>
<div class="t" style="left:540px;top:109.5px;line-height:14px;font-size:10px;color:#d8d8d8"><svg class="g" viewBox="0 -88 100 100"><path class="g83"/></svg><svg class="g" viewBox="0 -88 100 100"><path class="g84"/></svg><svg class="g" viewBox="0 -88 100 100"><path class="g85"/></svg><svg class="g" viewBox="0 -88 100 100"><path class="g23"/></svg>:OFF</div>
<div class="t" style="left:611px;top:109.5px;line-height:14px;font-size:10px;color:#d8d8d8"><svg class="g" viewBox="0 -88 100 100"><path class="g23"/></svg><svg class="g" viewBox="0 -88 100 100"><path class="g70"/></svg><svg class="g" viewBox="0 -88 100 100"><path class="g86"/></svg><svg class="g" viewBox="0 -88 100 100"><path class="g87"/></svg>:OFF</div>
<div class="b" style="left:683px;top:93px;width:50px;height:14px;border:1px solid #1d4a66;border-radius:2px;background:#183a54"></div>
<div class="t" style="left:608.0px;width:200px;text-align:center;top:93.0px;line-height:14px;font-size:10px;color:#e8e8e8"><svg class="g" viewBox="0 -88 100 100"><path class="g88"/></svg><svg class="g" viewBox="0 -88 100 100"><path class="g89"/></svg><svg class="g" viewBox="0 -88 100 100"><path class="g50"/></svg><svg class="g" viewBox="0 -88 100 100"><path class="g51"/></svg></div>
<div class="b" style="left:739px;top:93px;width:50px;height:14px;border:1px solid #1d4a66;border-radius:2px;background:#000"></div>
<div class="t" style="left:664.0px;width:200px;text-align:center;top:93.0px;line-height:14px;font-size:10px;color:#8a8a8a"><svg class="g" viewBox="0 -88 100 100"><path class="g81"/></svg><svg class="g" viewBox="0 -88 100 100"><path class="g90"/></svg><svg class="g" viewBox="0 -88 100 100"><path class="g50"/></svg><svg class="g" viewBox="0 -88 100 100"><path class="g51"/></svg></div>
<div class="b" style="left:683px;top:110px;width:50px;height:14px;border:1px solid #1d4a66;border-radius:2px;background:#000"></div>
<div class="t" style="left:608.0px;width:200px;text-align:center;top:110.0px;line-height:14px;font-size:10px;color:#8a8a8a"><svg class="g" viewBox="0 -88 100 100"><path class="g91"/></svg><svg class="g" viewBox="0 -88 100 100"><path class="g76"/></svg><svg class="g" viewBox="0 -88 100 100"><path class="g50"/></svg><svg class="g" viewBox="0 -88 100 100"><path class="g51"/></svg></div>
<div class="b" style="left:739px;top:110px;width:50px;height:14px;border:1px solid #1d4a66;border-radius:2px;background:#000"></div>
<div class="t" style="left:664.0px;width:200px;text-align:center;top:110.0px;line-height:14px;font-size:10px;color:#8a8a8a"><svg class="g" viewBox="0 -88 100 100"><path class="g92"/></svg><svg class="g" viewBox="0 -88 100 100"><path class="g93"/></svg><svg class="g" viewBox="0 -88 100 100"><path class="g50"/></svg><svg class="g" viewBox="0 -88 100 100"><path class="g51"/></svg></div>
<div class="b" style="left:183px;top:127px;width:614px;height:23px;background:#1d4862"></div>
<div class="t" style="left:202px;top:131.5px;line-height:14px;font-size:10.5px;color:#d8dde2"><svg class="g" viewBox="0 -88 100 100"><path class="g58"/></svg> <svg class="g" viewBox="0 -88 100 100"><path class="g94"/></svg></div>
<div class="t" style="left:250px;top:131.5px;line-height:14px;font-size:10.5px;color:#d8dde2"><svg class="g" viewBox="0 -88 100 100"><path class="g16"/></svg> <svg class="g" viewBox="0 -88 100 100"><path class="g95"/></svg></div>
<div class="t" style="left:302px;top:131.5px;line-height:14px;font-size:10.5px;color:#d8dde2"><svg class="g" viewBox="0 -88 100 100"><path class="g96"/></svg> <svg class="g" viewBox="0 -88 100 100"><path class="g48"/></svg></div>
<div class="t" style="left:354px;top:131.5px;line-height:14px;font-size:10.5px;color:#d8dde2"><svg class="g" viewBox="0 -88 100 100"><path class="g97"/></svg> <svg class="g" viewBox="0 -88 100 100"><path class="g84"/></svg></div>
<div class="t" style="left:410px;top:131.5px;line-height:14px;font-size:10.5px;color:#d8dde2"><svg class="g" viewBox="0 -88 100 100"><path class="g97"/></svg><svg class="g" viewBox="0 -88 100 100"><path class="g91"/></svg><svg class="g" viewBox="0 -88 100 100"><path class="g98"/></svg></div>
<div class="t" style="left:470px;top:131.5px;line-height:14px;font-size:10.5px;color:#d8dde2"><svg class="g" viewBox="0 -88 100 100"><path class="g99"/></svg><svg class="g" viewBox="0 -88 100 100"><path class="g100"/></svg><svg class="g" viewBox="0 -88 100 100"><path class="g83"/></svg><svg class="g" viewBox="0 -88 100 100"><path class="g84"/></svg></div>
<div class="t" style="left:536px;top:131.5px;line-height:14px;font-size:10.5px;color:#d8dde2"><svg class="g" viewBox="0 -88 100 100"><path class="g83"/></svg><svg class="g" viewBox="0 -88 100 100"><path class="g84"/></svg><svg class="g" viewBox="0 -88 100 100"><path class="g64"/></svg><svg class="g" viewBox="0 -88 100 100"><path class="g82"/></svg></div>
<div class="t" style="left:603px;top:131.5px;line-height:14px;font-size:10.5px;color:#d8dde2"><svg class="g" viewBox="0 -88 100 100"><path class="g99"/></svg><svg class="g" viewBox="0 -88 100 100"><path class="g100"/></svg><svg class="g" viewBox="0 -88 100 100"><path class="g83"/></svg><svg class="g" viewBox="0 -88 100 100"><path class="g97"/></svg></div>
<div class="t" style="left:670px;top:131.5px;line-height:14px;font-size:10.5px;color:#d8dde2"><svg class="g" viewBox="0 -88 100 100"><path class="g83"/></svg><svg class="g" viewBox="0 -88 100 100"><path class="g97"/></svg><svg class="g" viewBox="0 -88 100 100"><path class="g64"/></svg><svg class="g" viewBox="0 -88 100 100"><path class="g82"/></svg></div>
<div class="t" style="left:735px;top:131.5px;line-height:14px;font-size:10.5px;color:#d8dde2"><svg class="g" viewBox="0 -88 100 100"><path class="g101"/></svg> <svg class="g" viewBox="0 -88 100 100"><path class="g102"/></svg></div>
<div class="t" style="left:200px;top:154.5px;line-height:14px;font-size:11.5px;letter-spacing:-0.4px;color:#cf2c26">03.15</div>
<div class="t" style="left:253px;top:154.5px;line-height:14px;font-size:11.5px;letter-spacing:-0.4px;color:#cf2c26">13</div>
<div class="t" style="left:302px;top:154.5px;line-height:14px;font-size:11.5px;letter-spacing:-0.4px;color:#cf2c26">0.16</div>
<div class="t" style="left:352px;top:154.5px;line-height:14px;font-size:11.5px;letter-spacing:-0.4px;color:#cf2c26">32.35</div>
<div class="t" style="left:410.5px;top:154.5px;line-height:14px;font-size:11.5px;letter-spacing:-0.4px;color:#cf2c26">0.06%</div>
<div class="t" style="left:470px;top:154.5px;line-height:14px;font-size:11.5px;letter-spacing:-0.4px;color:#62c83a">-285.04</div>
<div class="t" style="left:537px;top:154.5px;line-height:14px;font-size:11.5px;letter-spacing:-0.4px;color:#62c83a">-0.40%</div>
<div class="t" style="left:603px;top:154.5px;line-height:14px;font-size:11.5px;letter-spacing:-0.4px;color:#b4b4b4">0.00</div>
<div class="t" style="left:670px;top:154.5px;line-height:14px;font-size:11.5px;letter-spacing:-0.4px;color:#b4b4b4">0.00%</div>
<div class="t" style="left:729px;top:154.5px;line-height:14px;font-size:11.5px;letter-spacing:-0.4px;color:#cf2c26">72079.32</div>
<div class="t" style="left:200px;top:168.6px;line-height:14px;font-size:11.5px;letter-spacing:-0.4px;color:#cf2c26">03.13</div>
<div class="t" style="left:253px;top:168.6px;line-height:14px;font-size:11.5px;letter-spacing:-0.4px;color:#cf2c26">240</div>
<div class="t" style="left:302px;top:168.6px;line-height:14px;font-size:11.5px;letter-spacing:-0.4px;color:#cf2c26">3.54</div>
<div class="t" style="left:352px;top:168.6px;line-height:14px;font-size:11.5px;letter-spacing:-0.4px;color:#cf2c26">453.89</div>
<div class="t" style="left:410.5px;top:168.6px;line-height:14px;font-size:11.5px;letter-spacing:-0.4px;color:#cf2c26">0.91%</div>
<div class="t" style="left:470px;top:168.6px;line-height:14px;font-size:11.5px;letter-spacing:-0.4px;color:#62c83a">-401.48</div>
<div class="t" style="left:537px;top:168.6px;line-height:14px;font-size:11.5px;letter-spacing:-0.4px;color:#62c83a">-0.56%</div>
<div class="t" style="left:603px;top:168.6px;line-height:14px;font-size:11.5px;letter-spacing:-0.4px;color:#cf2c26">8.73</div>
<div class="t" style="left:670px;top:168.6px;line-height:14px;font-size:11.5px;letter-spacing:-0.4px;color:#cf2c26">0.01%</div>
<div class="t" style="left:729px;top:168.6px;line-height:14px;font-size:11.5px;letter-spacing:-0.4px;color:#cf2c26">72046.97</div>
<div class="t" style="left:200px;top:182.6px;line-height:14px;font-size:11.5px;letter-spacing:-0.4px;color:#cf2c26">03.12</div>
<div class="t" style="left:253px;top:182.6px;line-height:14px;font-size:11.5px;letter-spacing:-0.4px;color:#cf2c26">136</div>
<div class="t" style="left:302px;top:182.6px;line-height:14px;font-size:11.5px;letter-spacing:-0.4px;color:#cf2c26">1.89</div>
<div class="t" style="left:352px;top:182.6px;line-height:14px;font-size:11.5px;letter-spacing:-0.4px;color:#cf2c26">236.00</div>
<div class="t" style="left:410.5px;top:182.6px;line-height:14px;font-size:11.5px;letter-spacing:-0.4px;color:#cf2c26">0.47%</div>
<div class="t" style="left:470px;top:182.6px;line-height:14px;font-size:11.5px;letter-spacing:-0.4px;color:#62c83a">-2190.87</div>
<div class="t" style="left:537px;top:182.6px;line-height:14px;font-size:11.5px;letter-spacing:-0.4px;color:#62c83a">-3.06%</div>
<div class="t" style="left:603px;top:182.6px;line-height:14px;font-size:11.5px;letter-spacing:-0.4px;color:#cf2c26">11.68</div>
<div class="t" style="left:670px;top:182.6px;line-height:14px;font-size:11.5px;letter-spacing:-0.4px;color:#cf2c26">0.02%</div>
<div class="t" style="left:729px;top:182.6px;line-height:14px;font-size:11.5px;letter-spacing:-0.4px;color:#cf2c26">71593.08</div>
<div class="t" style="left:200px;top:196.7px;line-height:14px;font-size:11.5px;letter-spacing:-0.4px;color:#cf2c26">03.11</div>
<div class="t" style="left:253px;top:196.7px;line-height:14px;font-size:11.5px;letter-spacing:-0.4px;color:#cf2c26">201</div>
<div class="t" style="left:302px;top:196.7px;line-height:14px;font-size:11.5px;letter-spacing:-0.4px;color:#cf2c26">2.39</div>
<div class="t" style="left:352px;top:196.7px;line-height:14px;font-size:11.5px;letter-spacing:-0.4px;color:#cf2c26">385.47</div>
<div class="t" style="left:410.5px;top:196.7px;line-height:14px;font-size:11.5px;letter-spacing:-0.4px;color:#cf2c26">0.77%</div>
<div class="t" style="left:470px;top:196.7px;line-height:14px;font-size:11.5px;letter-spacing:-0.4px;color:#62c83a">-210.21</div>
<div class="t" style="left:537px;top:196.7px;line-height:14px;font-size:11.5px;letter-spacing:-0.4px;color:#62c83a">-0.30%</div>
<div class="t" style="left:603px;top:196.7px;line-height:14px;font-size:11.5px;letter-spacing:-0.4px;color:#cf2c26">27.05</div>
<div class="t" style="left:670px;top:196.7px;line-height:14px;font-size:11.5px;letter-spacing:-0.4px;color:#cf2c26">0.04%</div>
<div class="t" style="left:729px;top:196.7px;line-height:14px;font-size:11.5px;letter-spacing:-0.4px;color:#cf2c26">71357.08</div>
<div class="t" style="left:200px;top:210.7px;line-height:14px;font-size:11.5px;letter-spacing:-0.4px;color:#cf2c26">03.10</div>
<div class="t" style="left:253px;top:210.7px;line-height:14px;font-size:11.5px;letter-spacing:-0.4px;color:#cf2c26">287</div>
<div class="t" style="left:302px;top:210.7px;line-height:14px;font-size:11.5px;letter-spacing:-0.4px;color:#cf2c26">3.59</div>
<div class="t" style="left:352px;top:210.7px;line-height:14px;font-size:11.5px;letter-spacing:-0.4px;color:#cf2c26">566.75</div>
<div class="t" style="left:410.5px;top:210.7px;line-height:14px;font-size:11.5px;letter-spacing:-0.4px;color:#cf2c26">1.13%</div>
<div class="t" style="left:470px;top:210.7px;line-height:14px;font-size:11.5px;letter-spacing:-0.4px;color:#62c83a">-679.73</div>
<div class="t" style="left:537px;top:210.7px;line-height:14px;font-size:11.5px;letter-spacing:-0.4px;color:#62c83a">-0.96%</div>
<div class="t" style="left:603px;top:210.7px;line-height:14px;font-size:11.5px;letter-spacing:-0.4px;color:#cf2c26">37.10</div>
<div class="t" style="left:670px;top:210.7px;line-height:14px;font-size:11.5px;letter-spacing:-0.4px;color:#cf2c26">0.05%</div>
<div class="t" style="left:729px;top:210.7px;line-height:14px;font-size:11.5px;letter-spacing:-0.4px;color:#cf2c26">70971.61</div>
<div class="t" style="left:200px;top:224.8px;line-height:14px;font-size:11.5px;letter-spacing:-0.4px;color:#cf2c26">03.09</div>
<div class="t" style="left:253px;top:224.8px;line-height:14px;font-size:11.5px;letter-spacing:-0.4px;color:#cf2c26">381</div>
<div class="t" style="left:302px;top:224.8px;line-height:14px;font-size:11.5px;letter-spacing:-0.4px;color:#cf2c26">4.60</div>
<div class="t" style="left:352px;top:224.8px;line-height:14px;font-size:11.5px;letter-spacing:-0.4px;color:#cf2c26">770.88</div>
<div class="t" style="left:410.5px;top:224.8px;line-height:14px;font-size:11.5px;letter-spacing:-0.4px;color:#cf2c26">1.54%</div>
<div class="t" style="left:470px;top:224.8px;line-height:14px;font-size:11.5px;letter-spacing:-0.4px;color:#62c83a">-290.45</div>
<div class="t" style="left:537px;top:224.8px;line-height:14px;font-size:11.5px;letter-spacing:-0.4px;color:#62c83a">-0.41%</div>
<div class="t" style="left:603px;top:224.8px;line-height:14px;font-size:11.5px;letter-spacing:-0.4px;color:#cf2c26">55.39</div>
<div class="t" style="left:670px;top:224.8px;line-height:14px;font-size:11.5px;letter-spacing:-0.4px;color:#cf2c26">0.08%</div>
<div class="t" style="left:729px;top:224.8px;line-height:14px;font-size:11.5px;letter-spacing:-0.4px;color:#cf2c26">70404.86</div>
<div class="t" style="left:200px;top:238.8px;line-height:14px;font-size:11.5px;letter-spacing:-0.4px;color:#cf2c26">03.08</div>
<div class="t" style="left:253px;top:238.8px;line-height:14px;font-size:11.5px;letter-spacing:-0.4px;color:#cf2c26">122</div>
<div class="t" style="left:302px;top:238.8px;line-height:14px;font-size:11.5px;letter-spacing:-0.4px;color:#cf2c26">1.42</div>
<div class="t" style="left:352px;top:238.8px;line-height:14px;font-size:11.5px;letter-spacing:-0.4px;color:#cf2c26">366.02</div>
<div class="t" style="left:410.5px;top:238.8px;line-height:14px;font-size:11.5px;letter-spacing:-0.4px;color:#cf2c26">0.73%</div>
<div class="t" style="left:470px;top:238.8px;line-height:14px;font-size:11.5px;letter-spacing:-0.4px;color:#62c83a">-247.92</div>
<div class="t" style="left:537px;top:238.8px;line-height:14px;font-size:11.5px;letter-spacing:-0.4px;color:#62c83a">-0.36%</div>
<div class="t" style="left:603px;top:238.8px;line-height:14px;font-size:11.5px;letter-spacing:-0.4px;color:#cf2c26">15.28</div>
<div class="t" style="left:670px;top:238.8px;line-height:14px;font-size:11.5px;letter-spacing:-0.4px;color:#cf2c26">0.02%</div>
<div class="t" style="left:729px;top:238.8px;line-height:14px;font-size:11.5px;letter-spacing:-0.4px;color:#cf2c26">69633.98</div>
<div class="t" style="left:200px;top:252.9px;line-height:14px;font-size:11.5px;letter-spacing:-0.4px;color:#cf2c26">03.06</div>
<div class="t" style="left:253px;top:252.9px;line-height:14px;font-size:11.5px;letter-spacing:-0.4px;color:#cf2c26">365</div>
<div class="t" style="left:302px;top:252.9px;line-height:14px;font-size:11.5px;letter-spacing:-0.4px;color:#cf2c26">5.01</div>
<div class="t" style="left:352px;top:252.9px;line-height:14px;font-size:11.5px;letter-spacing:-0.4px;color:#cf2c26">690.03</div>
<div class="t" style="left:410.5px;top:252.9px;line-height:14px;font-size:11.5px;letter-spacing:-0.4px;color:#cf2c26">1.38%</div>
<div class="t" style="left:470px;top:252.9px;line-height:14px;font-size:11.5px;letter-spacing:-0.4px;color:#62c83a">-1142.56</div>
<div class="t" style="left:537px;top:252.9px;line-height:14px;font-size:11.5px;letter-spacing:-0.4px;color:#62c83a">-1.65%</div>
<div class="t" style="left:603px;top:252.9px;line-height:14px;font-size:11.5px;letter-spacing:-0.4px;color:#cf2c26">151.48</div>
<div class="t" style="left:670px;top:252.9px;line-height:14px;font-size:11.5px;letter-spacing:-0.4px;color:#cf2c26">0.22%</div>
<div class="t" style="left:729px;top:252.9px;line-height:14px;font-size:11.5px;letter-spacing:-0.4px;color:#cf2c26">69267.96</div>
<div class="t" style="left:200px;top:266.9px;line-height:14px;font-size:11.5px;letter-spacing:-0.4px;color:#cf2c26">03.05</div>
<div class="t" style="left:253px;top:266.9px;line-height:14px;font-size:11.5px;letter-spacing:-0.4px;color:#cf2c26">378</div>
<div class="t" style="left:302px;top:266.9px;line-height:14px;font-size:11.5px;letter-spacing:-0.4px;color:#cf2c26">4.94</div>
<div class="t" style="left:352px;top:266.9px;line-height:14px;font-size:11.5px;letter-spacing:-0.4px;color:#cf2c26">734.52</div>
<div class="t" style="left:410.5px;top:266.9px;line-height:14px;font-size:11.5px;letter-spacing:-0.4px;color:#cf2c26">1.47%</div>
<div class="t" style="left:470px;top:266.9px;line-height:14px;font-size:11.5px;letter-spacing:-0.4px;color:#62c83a">-755.85</div>
<div class="t" style="left:537px;top:266.9px;line-height:14px;font-size:11.5px;letter-spacing:-0.4px;color:#62c83a">-1.11%</div>
<div class="t" style="left:603px;top:266.9px;line-height:14px;font-size:11.5px;letter-spacing:-0.4px;color:#cf2c26">16.19</div>
<div class="t" style="left:670px;top:266.9px;line-height:14px;font-size:11.5px;letter-spacing:-0.4px;color:#cf2c26">0.02%</div>
<div class="t" style="left:729px;top:266.9px;line-height:14px;font-size:11.5px;letter-spacing:-0.4px;color:#cf2c26">68577.93</div>
<div class="t" style="left:200px;top:280.9px;line-height:14px;font-size:11.5px;letter-spacing:-0.4px;color:#cf2c26">03.04</div>
<div class="t" style="left:253px;top:280.9px;line-height:14px;font-size:11.5px;letter-spacing:-0.4px;color:#cf2c26">501</div>
<div class="t" style="left:302px;top:280.9px;line-height:14px;font-size:11.5px;letter-spacing:-0.4px;color:#cf2c26">5.73</div>
<div class="t" style="left:352px;top:280.9px;line-height:14px;font-size:11.5px;letter-spacing:-0.4px;color:#cf2c26">1000.05</div>
<div class="t" style="left:410.5px;top:280.9px;line-height:14px;font-size:11.5px;letter-spacing:-0.4px;color:#cf2c26">2.00%</div>
<div class="t" style="left:470px;top:280.9px;line-height:14px;font-size:11.5px;letter-spacing:-0.4px;color:#62c83a">-297.49</div>
<div class="t" style="left:537px;top:280.9px;line-height:14px;font-size:11.5px;letter-spacing:-0.4px;color:#62c83a">-0.44%</div>
<div class="t" style="left:603px;top:280.9px;line-height:14px;font-size:11.5px;letter-spacing:-0.4px;color:#cf2c26">26.87</div>
<div class="t" style="left:670px;top:280.9px;line-height:14px;font-size:11.5px;letter-spacing:-0.4px;color:#cf2c26">0.04%</div>
<div class="t" style="left:729px;top:280.9px;line-height:14px;font-size:11.5px;letter-spacing:-0.4px;color:#cf2c26">67843.41</div>
<div class="t" style="left:200px;top:295.0px;line-height:14px;font-size:11.5px;letter-spacing:-0.4px;color:#cf2c26">03.03</div>
<div class="t" style="left:253px;top:295.0px;line-height:14px;font-size:11.5px;letter-spacing:-0.4px;color:#cf2c26">971</div>
<div class="t" style="left:302px;top:295.0px;line-height:14px;font-size:11.5px;letter-spacing:-0.4px;color:#cf2c26">16.08</div>
<div class="t" style="left:352px;top:295.0px;line-height:14px;font-size:11.5px;letter-spacing:-0.4px;color:#cf2c26">2068.53</div>
<div class="t" style="left:410.5px;top:295.0px;line-height:14px;font-size:11.5px;letter-spacing:-0.4px;color:#cf2c26">4.14%</div>
<div class="t" style="left:470px;top:295.0px;line-height:14px;font-size:11.5px;letter-spacing:-0.4px;color:#62c83a">-4047.27</div>
<div class="t" style="left:537px;top:295.0px;line-height:14px;font-size:11.5px;letter-spacing:-0.4px;color:#62c83a">-6.17%</div>
<div class="t" style="left:603px;top:295.0px;line-height:14px;font-size:11.5px;letter-spacing:-0.4px;color:#cf2c26">355.98</div>
<div class="t" style="left:670px;top:295.0px;line-height:14px;font-size:11.5px;letter-spacing:-0.4px;color:#cf2c26">0.55%</div>
<div class="t" style="left:729px;top:295.0px;line-height:14px;font-size:11.5px;letter-spacing:-0.4px;color:#cf2c26">66843.36</div>
<div class="t" style="left:200px;top:309.1px;line-height:14px;font-size:11.5px;letter-spacing:-0.4px;color:#cf2c26">03.02</div>
<div class="t" style="left:253px;top:309.1px;line-height:14px;font-size:11.5px;letter-spacing:-0.4px;color:#cf2c26">481</div>
<div class="t" style="left:302px;top:309.1px;line-height:14px;font-size:11.5px;letter-spacing:-0.4px;color:#cf2c26">6.48</div>
<div class="t" style="left:352px;top:309.1px;line-height:14px;font-size:11.5px;letter-spacing:-0.4px;color:#cf2c26">1005.70</div>
<div class="t" style="left:410.5px;top:309.1px;line-height:14px;font-size:11.5px;letter-spacing:-0.4px;color:#cf2c26">2.01%</div>
<div class="t" style="left:470px;top:309.1px;line-height:14px;font-size:11.5px;letter-spacing:-0.4px;color:#62c83a">-1561.99</div>
<div class="t" style="left:537px;top:309.1px;line-height:14px;font-size:11.5px;letter-spacing:-0.4px;color:#62c83a">-2.43%</div>
<div class="t" style="left:603px;top:309.1px;line-height:14px;font-size:11.5px;letter-spacing:-0.4px;color:#cf2c26">39.46</div>
<div class="t" style="left:670px;top:309.1px;line-height:14px;font-size:11.5px;letter-spacing:-0.4px;color:#cf2c26">0.06%</div>
<div class="t" style="left:729px;top:309.1px;line-height:14px;font-size:11.5px;letter-spacing:-0.4px;color:#cf2c26">64774.83</div>
<div class="t" style="left:200px;top:323.1px;line-height:14px;font-size:11.5px;letter-spacing:-0.4px;color:#cf2c26">03.01</div>
<div class="t" style="left:253px;top:323.1px;line-height:14px;font-size:11.5px;letter-spacing:-0.4px;color:#cf2c26">67</div>
<div class="t" style="left:302px;top:323.1px;line-height:14px;font-size:11.5px;letter-spacing:-0.4px;color:#cf2c26">0.82</div>
<div class="t" style="left:352px;top:323.1px;line-height:14px;font-size:11.5px;letter-spacing:-0.4px;color:#cf2c26">209.02</div>
<div class="t" style="left:410.5px;top:323.1px;line-height:14px;font-size:11.5px;letter-spacing:-0.4px;color:#cf2c26">0.42%</div>
<div class="t" style="left:470px;top:323.1px;line-height:14px;font-size:11.5px;letter-spacing:-0.4px;color:#62c83a">-601.32</div>
<div class="t" style="left:537px;top:323.1px;line-height:14px;font-size:11.5px;letter-spacing:-0.4px;color:#62c83a">-0.94%</div>
<div class="t" style="left:603px;top:323.1px;line-height:14px;font-size:11.5px;letter-spacing:-0.4px;color:#cf2c26">7.25</div>
<div class="t" style="left:670px;top:323.1px;line-height:14px;font-size:11.5px;letter-spacing:-0.4px;color:#cf2c26">0.01%</div>
<div class="t" style="left:729px;top:323.1px;line-height:14px;font-size:11.5px;letter-spacing:-0.4px;color:#cf2c26">63769.13</div>
<div class="t" style="left:200px;top:337.1px;line-height:14px;font-size:11.5px;letter-spacing:-0.4px;color:#cf2c26">02.27</div>
<div class="t" style="left:253px;top:337.1px;line-height:14px;font-size:11.5px;letter-spacing:-0.4px;color:#cf2c26">234</div>
<div class="t" style="left:302px;top:337.1px;line-height:14px;font-size:11.5px;letter-spacing:-0.4px;color:#cf2c26">2.81</div>
<div class="t" style="left:352px;top:337.1px;line-height:14px;font-size:11.5px;letter-spacing:-0.4px;color:#cf2c26">451.27</div>
<div class="t" style="left:410.5px;top:337.1px;line-height:14px;font-size:11.5px;letter-spacing:-0.4px;color:#cf2c26">0.90%</div>
<div class="t" style="left:470px;top:337.1px;line-height:14px;font-size:11.5px;letter-spacing:-0.4px;color:#62c83a">-693.24</div>
<div class="t" style="left:537px;top:337.1px;line-height:14px;font-size:11.5px;letter-spacing:-0.4px;color:#62c83a">-1.10%</div>
<div class="t" style="left:603px;top:337.1px;line-height:14px;font-size:11.5px;letter-spacing:-0.4px;color:#cf2c26">17.87</div>
<div class="t" style="left:670px;top:337.1px;line-height:14px;font-size:11.5px;letter-spacing:-0.4px;color:#cf2c26">0.03%</div>
<div class="t" style="left:729px;top:337.1px;line-height:14px;font-size:11.5px;letter-spacing:-0.4px;color:#cf2c26">63560.11</div>
<div class="t" style="left:200px;top:351.2px;line-height:14px;font-size:11.5px;letter-spacing:-0.4px;color:#cf2c26">02.26</div>
<div class="t" style="left:253px;top:351.2px;line-height:14px;font-size:11.5px;letter-spacing:-0.4px;color:#cf2c26">247</div>
<div class="t" style="left:302px;top:351.2px;line-height:14px;font-size:11.5px;letter-spacing:-0.4px;color:#cf2c26">3.07</div>
<div class="t" style="left:352px;top:351.2px;line-height:14px;font-size:11.5px;letter-spacing:-0.4px;color:#cf2c26">459.06</div>
<div class="t" style="left:410.5px;top:351.2px;line-height:14px;font-size:11.5px;letter-spacing:-0.4px;color:#cf2c26">0.92%</div>
<div class="t" style="left:470px;top:351.2px;line-height:14px;font-size:11.5px;letter-spacing:-0.4px;color:#62c83a">-527.57</div>
<div class="t" style="left:537px;top:351.2px;line-height:14px;font-size:11.5px;letter-spacing:-0.4px;color:#62c83a">-0.84%</div>
<div class="t" style="left:603px;top:351.2px;line-height:14px;font-size:11.5px;letter-spacing:-0.4px;color:#cf2c26">13.82</div>
<div class="t" style="left:670px;top:351.2px;line-height:14px;font-size:11.5px;letter-spacing:-0.4px;color:#cf2c26">0.02%</div>
<div class="t" style="left:729px;top:351.2px;line-height:14px;font-size:11.5px;letter-spacing:-0.4px;color:#cf2c26">63108.84</div>
<div class="t" style="left:200px;top:365.2px;line-height:14px;font-size:11.5px;letter-spacing:-0.4px;color:#cf2c26">02.25</div>
<div class="t" style="left:253px;top:365.2px;line-height:14px;font-size:11.5px;letter-spacing:-0.4px;color:#cf2c26">251</div>
<div class="t" style="left:302px;top:365.2px;line-height:14px;font-size:11.5px;letter-spacing:-0.4px;color:#cf2c26">2.93</div>
<div class="t" style="left:352px;top:365.2px;line-height:14px;font-size:11.5px;letter-spacing:-0.4px;color:#cf2c26">532.92</div>
<div class="t" style="left:410.5px;top:365.2px;line-height:14px;font-size:11.5px;letter-spacing:-0.4px;color:#cf2c26">1.07%</div>
<div class="t" style="left:470px;top:365.2px;line-height:14px;font-size:11.5px;letter-spacing:-0.4px;color:#62c83a">-185.32</div>
<div class="t" style="left:537px;top:365.2px;line-height:14px;font-size:11.5px;letter-spacing:-0.4px;color:#62c83a">-0.30%</div>
<div class="t" style="left:603px;top:365.2px;line-height:14px;font-size:11.5px;letter-spacing:-0.4px;color:#cf2c26">13.53</div>
<div class="t" style="left:670px;top:365.2px;line-height:14px;font-size:11.5px;letter-spacing:-0.4px;color:#cf2c26">0.02%</div>
<div class="t" style="left:729px;top:365.2px;line-height:14px;font-size:11.5px;letter-spacing:-0.4px;color:#cf2c26">62649.78</div>
<div class="t" style="left:200px;top:379.3px;line-height:14px;font-size:11.5px;letter-spacing:-0.4px;color:#cf2c26">02.24</div>
<div class="t" style="left:253px;top:379.3px;line-height:14px;font-size:11.5px;letter-spacing:-0.4px;color:#cf2c26">360</div>
<div class="t" style="left:302px;top:379.3px;line-height:14px;font-size:11.5px;letter-spacing:-0.4px;color:#cf2c26">4.23</div>
<div class="t" style="left:352px;top:379.3px;line-height:14px;font-size:11.5px;letter-spacing:-0.4px;color:#cf2c26">727.55</div>
<div class="t" style="left:410.5px;top:379.3px;line-height:14px;font-size:11.5px;letter-spacing:-0.4px;color:#cf2c26">1.46%</div>
<div class="t" style="left:470px;top:379.3px;line-height:14px;font-size:11.5px;letter-spacing:-0.4px;color:#62c83a">-167.31</div>
<div class="t" style="left:537px;top:379.3px;line-height:14px;font-size:11.5px;letter-spacing:-0.4px;color:#62c83a">-0.27%</div>
<div class="t" style="left:603px;top:379.3px;line-height:14px;font-size:11.5px;letter-spacing:-0.4px;color:#cf2c26">25.74</div>
<div class="t" style="left:670px;top:379.3px;line-height:14px;font-size:11.5px;letter-spacing:-0.4px;color:#cf2c26">0.04%</div>
<div class="t" style="left:729px;top:379.3px;line-height:14px;font-size:11.5px;letter-spacing:-0.4px;color:#cf2c26">62116.86</div>
<div class="t" style="left:200px;top:393.4px;line-height:14px;font-size:11.5px;letter-spacing:-0.4px;color:#cf2c26">02.23</div>
<div class="t" style="left:253px;top:393.4px;line-height:14px;font-size:11.5px;letter-spacing:-0.4px;color:#cf2c26">256</div>
<div class="t" style="left:302px;top:393.4px;line-height:14px;font-size:11.5px;letter-spacing:-0.4px;color:#cf2c26">6.47</div>
<div class="t" style="left:352px;top:393.4px;line-height:14px;font-size:11.5px;letter-spacing:-0.4px;color:#cf2c26">565.84</div>
<div class="t" style="left:410.5px;top:393.4px;line-height:14px;font-size:11.5px;letter-spacing:-0.4px;color:#cf2c26">1.13%</div>
<div class="t" style="left:470px;top:393.4px;line-height:14px;font-size:11.5px;letter-spacing:-0.4px;color:#62c83a">-4964.63</div>
<div class="t" style="left:537px;top:393.4px;line-height:14px;font-size:11.5px;letter-spacing:-0.4px;color:#62c83a">-8.16%</div>
<div class="t" style="left:603px;top:393.4px;line-height:14px;font-size:11.5px;letter-spacing:-0.4px;color:#cf2c26">951.31</div>
<div class="t" style="left:670px;top:393.4px;line-height:14px;font-size:11.5px;letter-spacing:-0.4px;color:#cf2c26">1.59%</div>
<div class="t" style="left:729px;top:393.4px;line-height:14px;font-size:11.5px;letter-spacing:-0.4px;color:#cf2c26">61389.31</div>
<div class="t" style="left:200px;top:407.4px;line-height:14px;font-size:11.5px;letter-spacing:-0.4px;color:#b4b4b4">02.22</div>
<div class="t" style="left:253px;top:407.4px;line-height:14px;font-size:11.5px;letter-spacing:-0.4px;color:#b4b4b4">0</div>
<div class="t" style="left:302px;top:407.4px;line-height:14px;font-size:11.5px;letter-spacing:-0.4px;color:#b4b4b4">0.00</div>
<div class="t" style="left:352px;top:407.4px;line-height:14px;font-size:11.5px;letter-spacing:-0.4px;color:#b4b4b4">0.00</div>
<div class="t" style="left:410.5px;top:407.4px;line-height:14px;font-size:11.5px;letter-spacing:-0.4px;color:#cf2c26">1.02%</div>
<div class="t" style="left:470px;top:407.4px;line-height:14px;font-size:11.5px;letter-spacing:-0.4px;color:#62c83a">-5939.25</div>
<div class="t" style="left:537px;top:407.4px;line-height:14px;font-size:11.5px;letter-spacing:-0.4px;color:#62c83a">-9.76%</div>
<div class="t" style="left:603px;top:407.4px;line-height:14px;font-size:11.5px;letter-spacing:-0.4px;color:#b4b4b4">0.00</div>
<div class="t" style="left:670px;top:407.4px;line-height:14px;font-size:11.5px;letter-spacing:-0.4px;color:#b4b4b4">0.00%</div>
<div class="t" style="left:729px;top:407.4px;line-height:14px;font-size:11.5px;letter-spacing:-0.4px;color:#b4b4b4">60823.47</div>
<div class="t" style="left:200px;top:421.4px;line-height:14px;font-size:11.5px;letter-spacing:-0.4px;color:#cf2c26">02.20</div>
<div class="t" style="left:253px;top:421.4px;line-height:14px;font-size:11.5px;letter-spacing:-0.4px;color:#cf2c26">252</div>
<div class="t" style="left:302px;top:421.4px;line-height:14px;font-size:11.5px;letter-spacing:-0.4px;color:#cf2c26">3.16</div>
<div class="t" style="left:352px;top:421.4px;line-height:14px;font-size:11.5px;letter-spacing:-0.4px;color:#cf2c26">509.31</div>
<div class="t" style="left:410.5px;top:421.4px;line-height:14px;font-size:11.5px;letter-spacing:-0.4px;color:#cf2c26">1.02%</div>
<div class="t" style="left:470px;top:421.4px;line-height:14px;font-size:11.5px;letter-spacing:-0.4px;color:#62c83a">-374.18</div>
<div class="t" style="left:537px;top:421.4px;line-height:14px;font-size:11.5px;letter-spacing:-0.4px;color:#62c83a">-0.62%</div>
<div class="t" style="left:603px;top:421.4px;line-height:14px;font-size:11.5px;letter-spacing:-0.4px;color:#cf2c26">150.68</div>
<div class="t" style="left:670px;top:421.4px;line-height:14px;font-size:11.5px;letter-spacing:-0.4px;color:#cf2c26">0.25%</div>
<div class="t" style="left:729px;top:421.4px;line-height:14px;font-size:11.5px;letter-spacing:-0.4px;color:#cf2c26">60823.47</div>
<div class="t" style="left:200px;top:435.5px;line-height:14px;font-size:11.5px;letter-spacing:-0.4px;color:#cf2c26">02.19</div>
<div class="t" style="left:253px;top:435.5px;line-height:14px;font-size:11.5px;letter-spacing:-0.4px;color:#cf2c26">174</div>
<div class="t" style="left:302px;top:435.5px;line-height:14px;font-size:11.5px;letter-spacing:-0.4px;color:#cf2c26">2.56</div>
<div class="t" style="left:352px;top:435.5px;line-height:14px;font-size:11.5px;letter-spacing:-0.4px;color:#cf2c26">408.58</div>
<div class="t" style="left:410.5px;top:435.5px;line-height:14px;font-size:11.5px;letter-spacing:-0.4px;color:#cf2c26">0.82%</div>
<div class="t" style="left:470px;top:435.5px;line-height:14px;font-size:11.5px;letter-spacing:-0.4px;color:#62c83a">-1910.20</div>
<div class="t" style="left:537px;top:435.5px;line-height:14px;font-size:11.5px;letter-spacing:-0.4px;color:#62c83a">-3.19%</div>
<div class="t" style="left:603px;top:435.5px;line-height:14px;font-size:11.5px;letter-spacing:-0.4px;color:#b4b4b4">0.00</div>
<div class="t" style="left:670px;top:435.5px;line-height:14px;font-size:11.5px;letter-spacing:-0.4px;color:#b4b4b4">0.00%</div>
<div class="t" style="left:729px;top:435.5px;line-height:14px;font-size:11.5px;letter-spacing:-0.4px;color:#cf2c26">60314.16</div>
<div class="t" style="left:200px;top:449.6px;line-height:14px;font-size:11.5px;letter-spacing:-0.4px;color:#cf2c26">02.18</div>
<div class="t" style="left:253px;top:449.6px;line-height:14px;font-size:11.5px;letter-spacing:-0.4px;color:#cf2c26">158</div>
<div class="t" style="left:302px;top:449.6px;line-height:14px;font-size:11.5px;letter-spacing:-0.4px;color:#cf2c26">1.97</div>
<div class="t" style="left:352px;top:449.6px;line-height:14px;font-size:11.5px;letter-spacing:-0.4px;color:#cf2c26">430.52</div>
<div class="t" style="left:410.5px;top:449.6px;line-height:14px;font-size:11.5px;letter-spacing:-0.4px;color:#cf2c26">0.86%</div>
<div class="t" style="left:470px;top:449.6px;line-height:14px;font-size:11.5px;letter-spacing:-0.4px;color:#62c83a">-1940.00</div>
<div class="t" style="left:537px;top:449.6px;line-height:14px;font-size:11.5px;letter-spacing:-0.4px;color:#62c83a">-3.25%</div>
<div class="t" style="left:603px;top:449.6px;line-height:14px;font-size:11.5px;letter-spacing:-0.4px;color:#b4b4b4">0.00</div>
<div class="t" style="left:670px;top:449.6px;line-height:14px;font-size:11.5px;letter-spacing:-0.4px;color:#b4b4b4">0.00%</div>
<div class="t" style="left:729px;top:449.6px;line-height:14px;font-size:11.5px;letter-spacing:-0.4px;color:#cf2c26">59905.58</div>
<div class="b" style="left:183px;top:467px;width:614px;height:1px;background:#1d4a66"></div>
<div class="t" style="left:200px;top:475.5px;line-height:14px;font-size:11.5px;letter-spacing:-0.4px;color:#cf2c26">22<svg class="g" viewBox="0 -88 100 100"><path class="g103"/></svg><svg class="g" viewBox="0 -88 100 100"><path class="g47"/></svg><svg class="g" viewBox="0 -88 100 100"><path class="g104"/></svg></div>
<div class="t" style="left:253px;top:475.5px;line-height:14px;font-size:11.5px;letter-spacing:-0.4px;color:#cf2c26">6075</div>
<div class="t" style="left:302px;top:475.5px;line-height:14px;font-size:11.5px;letter-spacing:-0.4px;color:#cf2c26">83.85</div>
<div class="t" style="left:352px;top:475.5px;line-height:14px;font-size:11.5px;letter-spacing:-0.4px;color:#cf2c26">12604.26</div>
<div class="t" style="left:410.5px;top:475.5px;line-height:14px;font-size:11.5px;letter-spacing:-0.4px;color:#cf2c26">26.23%</div>
<div class="t" style="left:470px;top:475.5px;line-height:14px;font-size:11.5px;letter-spacing:-0.4px;color:#cf2c26">-5939.25</div>
<div class="t" style="left:537px;top:475.5px;line-height:14px;font-size:11.5px;letter-spacing:-0.4px;color:#cf2c26">-9.76%</div>
<div class="t" style="left:603px;top:475.5px;line-height:14px;font-size:11.5px;letter-spacing:-0.4px;color:#cf2c26">951.31</div>
<div class="t" style="left:670px;top:475.5px;line-height:14px;font-size:11.5px;letter-spacing:-0.4px;color:#cf2c26">1.59%</div>
<div class="t" style="left:729px;top:475.5px;line-height:14px;font-size:11.5px;letter-spacing:-0.4px;color:#cf2c26">72079.32</div>
<div class="b" style="left:162px;top:150px;width:20px;height:18px;border:1px solid #1d4a66;border-right:none;border-radius:3px 0 0 3px;background:#15394f"></div>
<div class="t" style="left:72.0px;width:200px;text-align:center;top:152.0px;line-height:14px;font-size:10.5px;color:#e8e8e8"><svg class="g" viewBox="0 -88 100 100"><path class="g58"/></svg></div>
<div class="b" style="left:162px;top:174px;width:20px;height:19px;border:1px solid #1d4a66;border-right:none;border-radius:3px 0 0 3px;background:#000"></div>
<div class="t" style="left:72.0px;width:200px;text-align:center;top:176.5px;line-height:14px;font-size:10.5px;color:#e8e8e8"><svg class="g" viewBox="0 -88 100 100"><path class="g105"/></svg></div>
<div class="b" style="left:162px;top:199px;width:20px;height:19px;border:1px solid #1d4a66;border-right:none;border-radius:3px 0 0 3px;background:#000"></div>
<div class="t" style="left:72.0px;width:200px;text-align:center;top:201.5px;line-height:14px;font-size:10.5px;color:#e8e8e8"><svg class="g" viewBox="0 -88 100 100"><path class="g57"/></svg></div>
<div class="b" style="left:162px;top:224px;width:20px;height:19px;border:1px solid #1d4a66;border-right:none;border-radius:3px 0 0 3px;background:#000"></div>
<div class="t" style="left:72.0px;width:200px;text-align:center;top:226.5px;line-height:14px;font-size:10.5px;color:#e8e8e8"><svg class="g" viewBox="0 -88 100 100"><path class="g106"/></svg></div>
<div class="b" style="left:154px;top:248px;width:28px;height:18px;border:1px solid #1d4a66;border-right:none;border-radius:3px 0 0 3px;background:#000"></div>
<div class="t" style="left:68.0px;width:200px;text-align:center;top:250.0px;line-height:14px;font-size:10.5px;color:#e8e8e8"><svg class="g" viewBox="0 -88 100 100"><path class="g16"/></svg><svg class="g" viewBox="0 -88 100 100"><path class="g79"/></svg></div>
<div class="b" style="left:154px;top:273px;width:28px;height:19px;border:1px solid #1d4a66;border-right:none;border-radius:3px 0 0 3px;background:#000"></div>
<div class="t" style="left:68.0px;width:200px;text-align:center;top:275.5px;line-height:14px;font-size:10.5px;color:#e8e8e8"><svg class="g" viewBox="0 -88 100 100"><path class="g107"/></svg><svg class="g" viewBox="0 -88 100 100"><path class="g81"/></svg></div>
<div class="b" style="left:154px;top:297px;width:28px;height:19px;border:1px solid #1d4a66;border-right:none;border-radius:3px 0 0 3px;background:#000"></div>
<div class="t" style="left:68.0px;width:200px;text-align:center;top:299.5px;line-height:14px;font-size:10.5px;color:#e8e8e8"><svg class="g" viewBox="0 -88 100 100"><path class="g25"/></svg><svg class="g" viewBox="0 -88 100 100"><path class="g26"/></svg></div>
<div class="b" style="left:154px;top:323px;width:28px;height:18px;border:1px solid #1d4a66;border-right:none;border-radius:3px 0 0 3px;background:#000"></div>
<div class="t" style="left:68.0px;width:200px;text-align:center;top:325.0px;line-height:14px;font-size:10.5px;color:#e8e8e8"><svg class="g" viewBox="0 -88 100 100"><path class="g108"/></svg><svg class="g" viewBox="0 -88 100 100"><path class="g109"/></svg></div>
<div class="b" style="left:154px;top:347px;width:28px;height:19px;border:1px solid #1d4a66;border-right:none;border-radius:3px 0 0 3px;background:#000"></div>
<div class="t" style="left:68.0px;width:200px;text-align:center;top:349.5px;line-height:14px;font-size:10.5px;color:#e8e8e8"><svg class="g" viewBox="0 -88 100 100"><path class="g110"/></svg><svg class="g" viewBox="0 -88 100 100"><path class="g111"/></svg></div>
<div class="b" style="left:154px;top:372px;width:28px;height:18px;border:1px solid #1d4a66;border-right:none;border-radius:3px 0 0 3px;background:#000"></div>
<div class="t" style="left:68.0px;width:200px;text-align:center;top:374.0px;line-height:14px;font-size:10.5px;color:#e8e8e8"><svg class="g" viewBox="0 -88 100 100"><path class="g112"/></svg><svg class="g" viewBox="0 -88 100 100"><path class="g113"/></svg></div>
<div class="b" style="left:154px;top:396px;width:28px;height:19px;border:1px solid #1d4a66;border-right:none;border-radius:3px 0 0 3px;background:#000"></div>
<div class="t" style="left:68.0px;width:200px;text-align:center;top:398.5px;line-height:14px;font-size:10.5px;color:#e8e8e8"><svg class="g" viewBox="0 -88 100 100"><path class="g100"/></svg><svg class="g" viewBox="0 -88 100 100"><path class="g114"/></svg></div>
<div class="b" style="left:154px;top:420px;width:28px;height:18px;border:1px solid #1d4a66;border-right:none;border-radius:3px 0 0 3px;background:#000"></div>
<div class="t" style="left:68.0px;width:200px;text-align:center;top:422.0px;line-height:14px;font-size:10.5px;color:#e8e8e8">VIP</div>
<div class="b" style="left:154px;top:438px;width:28px;height:18px;border:1px solid #1d4a66;border-right:none;border-radius:3px 0 0 3px;background:#000"></div>
<div class="t" style="left:68.0px;width:200px;text-align:center;top:440.0px;line-height:14px;font-size:10.5px;color:#e8e8e8"><svg class="g" viewBox="0 -88 100 100"><path class="g115"/></svg><svg class="g" viewBox="0 -88 100 100"><path class="g116"/></svg></div>
<div class="b" style="left:154px;top:456px;width:28px;height:13px;border:1px solid #1d4a66;border-right:none;border-radius:3px 0 0 3px;background:#000"></div>
<svg style="left:164px;top:460px" width="9" height="6"><path d="M0.5 0.5 L4.5 5 L8.5 0.5" stroke="#e8e8e8" fill="none" stroke-width="1.1"/></svg>
<div class="b" style="left:805px;top:60px;width:325px;height:434px;background:#05090e"></div>
<div class="b" style="left:805px;top:60px;width:325px;height:1px;background:repeating-linear-gradient(90deg,#1c5070 0 3px,transparent 3px 5px)"></div>
<div class="b" style="left:805px;top:85px;width:325px;height:1px;background:repeating-linear-gradient(90deg,#1c5070 0 3px,transparent 3px 5px)"></div>
<div class="b" style="left:805px;top:60px;width:1px;height:26px;background:repeating-linear-gradient(180deg,#1c5070 0 3px,transparent 3px 5px)"></div>
<div class="b" style="left:1129px;top:60px;width:1px;height:26px;background:repeating-linear-gradient(180deg,#1c5070 0 3px,transparent 3px 5px)"></div>
<div class="b" style="left:805px;top:89px;width:325px;height:1px;background:repeating-linear-gradient(90deg,#1c5070 0 3px,transparent 3px 5px)"></div>
<div class="b" style="left:805px;top:89px;width:1px;height:405px;background:repeating-linear-gradient(180deg,#1c5070 0 3px,transparent 3px 5px)"></div>
<div class="b" style="left:1129px;top:89px;width:1px;height:405px;background:repeating-linear-gradient(180deg,#1c5070 0 3px,transparent 3px 5px)"></div>
<div class="b" style="left:805px;top:114px;width:325px;height:1px;background:repeating-linear-gradient(90deg,#1c5070 0 3px,transparent 3px 5px)"></div>
<div class="b" style="left:805px;top:139px;width:325px;height:1px;background:repeating-linear-gradient(90deg,#1c5070 0 3px,transparent 3px 5px)"></div>
<div class="b" style="left:805px;top:176px;width:325px;height:1px;background:repeating-linear-gradient(90deg,#1c5070 0 3px,transparent 3px 5px)"></div>
<div class="b" style="left:805px;top:212px;width:325px;height:1px;background:repeating-linear-gradient(90deg,#1c5070 0 3px,transparent 3px 5px)"></div>
<div class="b" style="left:805px;top:248px;width:325px;height:1px;background:repeating-linear-gradient(90deg,#1c5070 0 3px,transparent 3px 5px)"></div>
<div class="b" style="left:805px;top:284px;width:325px;height:1px;background:repeating-linear-gradient(90deg,#1c5070 0 3px,transparent 3px 5px)"></div>
<div class="b" style="left:805px;top:320px;width:325px;height:1px;background:repeating-linear-gradient(90deg,#1c5070 0 3px,transparent 3px 5px)"></div>
<div class="b" style="left:805px;top:381px;width:325px;height:1px;background:repeating-linear-gradient(90deg,#1c5070 0 3px,transparent 3px 5px)"></div>
<div class="b" style="left:805px;top:414px;width:325px;height:1px;background:repeating-linear-gradient(90deg,#1c5070 0 3px,transparent 3px 5px)"></div>
<div class="b" style="left:805px;top:447px;width:325px;height:1px;background:repeating-linear-gradient(90deg,#1c5070 0 3px,transparent 3px 5px)"></div>
<div class="b" style="left:805px;top:480px;width:325px;height:1px;background:repeating-linear-gradient(90deg,#1c5070 0 3px,transparent 3px 5px)"></div>
<div class="t" style="left:817px;top:65.0px;line-height:14px;font-size:9.8px;color:#dcdcdc;"><svg class="g" viewBox="0 -88 100 100"><path class="g117"/></svg><svg class="g" viewBox="0 -88 100 100"><path class="g118"/></svg><svg class="g" viewBox="0 -88 100 100"><path class="g119"/></svg><svg class="g" viewBox="0 -88 100 100"><path class="g3"/></svg><svg class="g" viewBox="0 -88 100 100"><path class="g120"/></svg><svg class="g" viewBox="0 -88 100 100"><path class="g121"/></svg><svg class="g" viewBox="0 -88 100 100"><path class="g77"/></svg><svg class="g" viewBox="0 -88 100 100"><path class="g34"/></svg><svg class="g" viewBox="0 -88 100 100"><path class="g122"/></svg><svg class="g" viewBox="0 -88 100 100"><path class="g123"/></svg><svg class="g" viewBox="0 -88 100 100"><path class="g124"/></svg><svg class="g" viewBox="0 -88 100 100"><path class="g125"/></svg><svg class="g" viewBox="0 -88 100 100"><path class="g126"/></svg><svg class="g" viewBox="0 -88 100 100"><path class="g127"/></svg><svg class="g" viewBox="0 -88 100 100"><path class="g128"/></svg><svg class="g" viewBox="0 -88 100 100"><path class="g129"/></svg>&lt;<svg class="g" viewBox="0 -88 100 100"><path class="g130"/></svg><svg class="g" viewBox="0 -88 100 100"><path class="g131"/></svg><svg class="g" viewBox="0 -88 100 100"><path class="g19"/></svg><svg class="g" viewBox="0 -88 100 100"><path class="g20"/></svg><svg class="g" viewBox="0 -88 100 100"><path class="g132"/></svg><svg class="g" viewBox="0 -88 100 100"><path class="g133"/></svg>&gt;</div>
<div class="b" style="left:1103px;top:63px;width:20px;height:18px;border:1px solid #2a5a7a;border-radius:2px;background:#000"></div>
<svg style="left:1108px;top:67px" width="10" height="10"><path d="M0.5 0.5 L9.5 9.5 M9.5 0.5 L0.5 9.5" stroke="#f0f0f0" stroke-width="1.5"/></svg>
<div class="t" style="left:817px;top:94.5px;line-height:14px;font-size:9.8px;color:#dcdcdc;"><svg class="g" viewBox="0 -88 100 100"><path class="g134"/></svg><svg class="g" viewBox="0 -88 100 100"><path class="g135"/></svg><svg class="g" viewBox="0 -88 100 100"><path class="g136"/></svg><svg class="g" viewBox="0 -88 100 100"><path class="g137"/></svg><svg class="g" viewBox="0 -88 100 100"><path class="g120"/></svg>500</div>
<div class="t" style="left:915px;top:94.5px;line-height:14px;font-size:9.8px;color:#dcdcdc;"><svg class="g" viewBox="0 -88 100 100"><path class="g77"/></svg><svg class="g" viewBox="0 -88 100 100"><path class="g34"/></svg><svg class="g" viewBox="0 -88 100 100"><path class="g138"/></svg><svg class="g" viewBox="0 -88 100 100"><path class="g139"/></svg><svg class="g" viewBox="0 -88 100 100"><path class="g120"/></svg><svg class="g" viewBox="0 -88 100 100"><path class="g140"/></svg><svg class="g" viewBox="0 -88 100 100"><path class="g141"/></svg><svg class="g" viewBox="0 -88 100 100"><path class="g77"/></svg><svg class="g" viewBox="0 -88 100 100"><path class="g34"/></svg></div>
<div class="t" style="left:1033px;top:94.5px;line-height:14px;font-size:9.8px;color:#dcdcdc;"><svg class="g" viewBox="0 -88 100 100"><path class="g134"/></svg><svg class="g" viewBox="0 -88 100 100"><path class="g135"/></svg><svg class="g" viewBox="0 -88 100 100"><path class="g142"/></svg><svg class="g" viewBox="0 -88 100 100"><path class="g107"/></svg>EA<svg class="g" viewBox="0 -88 100 100"><path class="g19"/></svg><svg class="g" viewBox="0 -88 100 100"><path class="g20"/></svg></div>
<div class="t" style="left:817px;top:120.0px;line-height:14px;font-size:9.8px;color:#dcdcdc;"><svg class="g" viewBox="0 -88 100 100"><path class="g143"/></svg><svg class="g" viewBox="0 -88 100 100"><path class="g34"/></svg><svg class="g" viewBox="0 -88 100 100"><path class="g58"/></svg><svg class="g" viewBox="0 -88 100 100"><path class="g94"/></svg><svg class="g" viewBox="0 -88 100 100"><path class="g120"/></svg>2026.02.03</div>
<div class="t" style="left:940px;top:120.0px;line-height:14px;font-size:9.8px;color:#dcdcdc;"><svg class="g" viewBox="0 -88 100 100"><path class="g144"/></svg><svg class="g" viewBox="0 -88 100 100"><path class="g145"/></svg><svg class="g" viewBox="0 -88 100 100"><path class="g146"/></svg>35<svg class="g" viewBox="0 -88 100 100"><path class="g147"/></svg><svg class="g" viewBox="0 -88 100 100"><path class="g19"/></svg><svg class="g" viewBox="0 -88 100 100"><path class="g20"/></svg><svg class="g" viewBox="0 -88 100 100"><path class="g58"/></svg></div>
<div class="t" style="left:1041px;top:120.0px;line-height:14px;font-size:9.8px;color:#dcdcdc;"><svg class="g" viewBox="0 -88 100 100"><path class="g19"/></svg><svg class="g" viewBox="0 -88 100 100"><path class="g20"/></svg><svg class="g" viewBox="0 -88 100 100"><path class="g105"/></svg><svg class="g" viewBox="0 -88 100 100"><path class="g94"/></svg><svg class="g" viewBox="0 -88 100 100"><path class="g120"/></svg>8<svg class="g" viewBox="0 -88 100 100"><path class="g105"/></svg></div>
<div class="t" style="left:905px;top:151.0px;line-height:14px;font-size:10.5px;color:#dcdcdc;"><svg class="g" viewBox="0 -88 100 100"><path class="g104"/></svg><svg class="g" viewBox="0 -88 100 100"><path class="g97"/></svg><svg class="g" viewBox="0 -88 100 100"><path class="g84"/></svg><svg class="g" viewBox="0 -88 100 100"><path class="g148"/></svg><svg class="g" viewBox="0 -88 100 100"><path class="g102"/></svg><svg class="g" viewBox="0 -88 100 100"><path class="g120"/></svg></div>
<div class="t" style="left:967px;top:149.0px;line-height:16px;font-size:14px;color:#e2de5a;">22079.32</div>
<div class="t" style="left:817px;top:179.5px;line-height:14px;font-size:10.5px;color:#dcdcdc;"><svg class="g" viewBox="0 -88 100 100"><path class="g97"/></svg><svg class="g" viewBox="0 -88 100 100"><path class="g91"/></svg><svg class="g" viewBox="0 -88 100 100"><path class="g98"/></svg></div>
<div class="t" style="left:817px;top:192.5px;line-height:16px;font-size:14.5px;color:#e2de5a;">44.16%</div>
<div class="t" style="left:902px;top:179.5px;line-height:14px;font-size:10.5px;color:#dcdcdc;"><svg class="g" viewBox="0 -88 100 100"><path class="g91"/></svg><svg class="g" viewBox="0 -88 100 100"><path class="g149"/></svg><svg class="g" viewBox="0 -88 100 100"><path class="g150"/></svg><svg class="g" viewBox="0 -88 100 100"><path class="g151"/></svg></div>
<div class="t" style="left:902px;top:192.5px;line-height:16px;font-size:14.5px;color:#e2de5a;">1.41</div>
<div class="t" style="left:986px;top:179.5px;line-height:14px;font-size:10.5px;color:#dcdcdc;"><svg class="g" viewBox="0 -88 100 100"><path class="g152"/></svg><svg class="g" viewBox="0 -88 100 100"><path class="g153"/></svg><svg class="g" viewBox="0 -88 100 100"><path class="g98"/></svg></div>
<div class="t" style="left:986px;top:192.5px;line-height:16px;font-size:14.5px;color:#e2de5a;">69.63%</div>
<div class="t" style="left:1071px;top:179.5px;line-height:14px;font-size:10.5px;color:#dcdcdc;"><svg class="g" viewBox="0 -88 100 100"><path class="g97"/></svg><svg class="g" viewBox="0 -88 100 100"><path class="g84"/></svg><svg class="g" viewBox="0 -88 100 100"><path class="g64"/></svg></div>
<div class="t" style="left:1071px;top:192.5px;line-height:16px;font-size:14.5px;color:#e2de5a;">0.62</div>
<div class="t" style="left:817px;top:215.5px;line-height:14px;font-size:10.5px;color:#dcdcdc;"><svg class="g" viewBox="0 -88 100 100"><path class="g99"/></svg><svg class="g" viewBox="0 -88 100 100"><path class="g100"/></svg><svg class="g" viewBox="0 -88 100 100"><path class="g83"/></svg><svg class="g" viewBox="0 -88 100 100"><path class="g84"/></svg></div>
<div class="t" style="left:817px;top:228.5px;line-height:16px;font-size:14.5px;color:#e2de5a;">-5939.25</div>
<div class="t" style="left:902px;top:215.5px;line-height:14px;font-size:10.5px;color:#dcdcdc;"><svg class="g" viewBox="0 -88 100 100"><path class="g101"/></svg><svg class="g" viewBox="0 -88 100 100"><path class="g102"/></svg><svg class="g" viewBox="0 -88 100 100"><path class="g88"/></svg><svg class="g" viewBox="0 -88 100 100"><path class="g89"/></svg></div>
<div class="t" style="left:902px;top:228.5px;line-height:16px;font-size:14.5px;color:#e2de5a;">-9.76%</div>
<div class="t" style="left:986px;top:215.5px;line-height:14px;font-size:10.5px;color:#dcdcdc;"><svg class="g" viewBox="0 -88 100 100"><path class="g99"/></svg><svg class="g" viewBox="0 -88 100 100"><path class="g154"/></svg><svg class="g" viewBox="0 -88 100 100"><path class="g155"/></svg><svg class="g" viewBox="0 -88 100 100"><path class="g156"/></svg></div>
<div class="t" style="left:986px;top:228.5px;line-height:16px;font-size:14.5px;color:#e2de5a;">49391.33</div>
<div class="t" style="left:1071px;top:215.5px;line-height:14px;font-size:10.5px;color:#dcdcdc;"><svg class="g" viewBox="0 -88 100 100"><path class="g40"/></svg><svg class="g" viewBox="0 -88 100 100"><path class="g148"/></svg><svg class="g" viewBox="0 -88 100 100"><path class="g88"/></svg><svg class="g" viewBox="0 -88 100 100"><path class="g89"/></svg></div>
<div class="t" style="left:1071px;top:228.5px;line-height:16px;font-size:14.5px;color:#e2de5a;">1.22%</div>
<div class="t" style="left:817px;top:251.5px;line-height:14px;font-size:10.5px;color:#dcdcdc;"><svg class="g" viewBox="0 -88 100 100"><path class="g104"/></svg><svg class="g" viewBox="0 -88 100 100"><path class="g5"/></svg><svg class="g" viewBox="0 -88 100 100"><path class="g148"/></svg></div>
<div class="t" style="left:817px;top:264.5px;line-height:16px;font-size:14.5px;color:#e2de5a;">50000.00</div>
<div class="t" style="left:902px;top:251.5px;line-height:14px;font-size:10.5px;color:#dcdcdc;"><svg class="g" viewBox="0 -88 100 100"><path class="g5"/></svg><svg class="g" viewBox="0 -88 100 100"><path class="g148"/></svg><svg class="g" viewBox="0 -88 100 100"><path class="g157"/></svg><svg class="g" viewBox="0 -88 100 100"><path class="g48"/></svg></div>
<div class="t" style="left:902px;top:264.5px;line-height:16px;font-size:14.5px;color:#e2de5a;">1</div>
<div class="t" style="left:986px;top:251.5px;line-height:14px;font-size:10.5px;color:#dcdcdc;"><svg class="g" viewBox="0 -88 100 100"><path class="g104"/></svg><svg class="g" viewBox="0 -88 100 100"><path class="g158"/></svg><svg class="g" viewBox="0 -88 100 100"><path class="g148"/></svg></div>
<div class="t" style="left:986px;top:264.5px;line-height:16px;font-size:14.5px;color:#e2de5a;">0.00</div>
<div class="t" style="left:1071px;top:251.5px;line-height:14px;font-size:10.5px;color:#dcdcdc;"><svg class="g" viewBox="0 -88 100 100"><path class="g158"/></svg><svg class="g" viewBox="0 -88 100 100"><path class="g148"/></svg><svg class="g" viewBox="0 -88 100 100"><path class="g157"/></svg><svg class="g" viewBox="0 -88 100 100"><path class="g48"/></svg></div>
<div class="t" style="left:1071px;top:264.5px;line-height:16px;font-size:14.5px;color:#e2de5a;">0</div>
<div class="t" style="left:888px;top:287.5px;line-height:14px;font-size:10.5px;color:#dcdcdc;"><svg class="g" viewBox="0 -88 100 100"><path class="g99"/></svg><svg class="g" viewBox="0 -88 100 100"><path class="g100"/></svg><svg class="g" viewBox="0 -88 100 100"><path class="g159"/></svg><svg class="g" viewBox="0 -88 100 100"><path class="g160"/></svg><svg class="g" viewBox="0 -88 100 100"><path class="g161"/></svg><svg class="g" viewBox="0 -88 100 100"><path class="g148"/></svg></div>
<div class="t" style="left:888px;top:300.5px;line-height:16px;font-size:14.5px;color:#e2de5a;">1190.00</div>
<div class="t" style="left:986px;top:287.5px;line-height:14px;font-size:10.5px;color:#dcdcdc;"><svg class="g" viewBox="0 -88 100 100"><path class="g99"/></svg><svg class="g" viewBox="0 -88 100 100"><path class="g100"/></svg><svg class="g" viewBox="0 -88 100 100"><path class="g162"/></svg><svg class="g" viewBox="0 -88 100 100"><path class="g42"/></svg><svg class="g" viewBox="0 -88 100 100"><path class="g81"/></svg><svg class="g" viewBox="0 -88 100 100"><path class="g90"/></svg></div>
<div class="t" style="left:986px;top:300.5px;line-height:16px;font-size:14.5px;color:#e2de5a;">1.96%</div>
<div class="t" style="left:2000px;top:287.5px;line-height:14px;font-size:10.5px;color:#dcdcdc;"></div>
<div class="t" style="left:2000px;top:300.5px;line-height:16px;font-size:14.5px;color:#e2de5a;"></div>
<div class="t" style="left:2000px;top:287.5px;line-height:14px;font-size:10.5px;color:#dcdcdc;"></div>
<div class="t" style="left:2000px;top:300.5px;line-height:16px;font-size:14.5px;color:#e2de5a;"></div>
<div class="t" style="left:831px;top:325.5px;line-height:14px;font-size:10.5px;color:#dcdcdc;"><svg class="g" viewBox="0 -88 100 100"><path class="g58"/></svg><svg class="g" viewBox="0 -88 100 100"><path class="g163"/></svg><svg class="g" viewBox="0 -88 100 100"><path class="g43"/></svg><svg class="g" viewBox="0 -88 100 100"><path class="g164"/></svg></div>
<div class="t" style="left:908px;top:325.5px;line-height:14px;font-size:10.5px;color:#dcdcdc">630.84</div>
<div class="t" style="left:972px;top:325.5px;line-height:14px;font-size:10.5px;color:#dcdcdc">1.26%</div>
<div class="t" style="left:831px;top:343.2px;line-height:14px;font-size:10.5px;color:#dcdcdc;"><svg class="g" viewBox="0 -88 100 100"><path class="g105"/></svg><svg class="g" viewBox="0 -88 100 100"><path class="g163"/></svg><svg class="g" viewBox="0 -88 100 100"><path class="g43"/></svg><svg class="g" viewBox="0 -88 100 100"><path class="g164"/></svg></div>
<div class="t" style="left:908px;top:343.2px;line-height:14px;font-size:10.5px;color:#dcdcdc">3154.19</div>
<div class="t" style="left:972px;top:343.2px;line-height:14px;font-size:10.5px;color:#dcdcdc">6.31%</div>
<div class="t" style="left:831px;top:360.9px;line-height:14px;font-size:10.5px;color:#dcdcdc;"><svg class="g" viewBox="0 -88 100 100"><path class="g57"/></svg><svg class="g" viewBox="0 -88 100 100"><path class="g163"/></svg><svg class="g" viewBox="0 -88 100 100"><path class="g43"/></svg><svg class="g" viewBox="0 -88 100 100"><path class="g164"/></svg></div>
<div class="t" style="left:908px;top:360.9px;line-height:14px;font-size:10.5px;color:#dcdcdc">13878.43</div>
<div class="t" style="left:972px;top:360.9px;line-height:14px;font-size:10.5px;color:#dcdcdc">27.76%</div>
<div class="t" style="left:1042px;top:325.5px;line-height:14px;font-size:10.5px;color:#dcdcdc;"><svg class="g" viewBox="0 -88 100 100"><path class="g165"/></svg><svg class="g" viewBox="0 -88 100 100"><path class="g94"/></svg><svg class="g" viewBox="0 -88 100 100"><path class="g106"/></svg><svg class="g" viewBox="0 -88 100 100"><path class="g166"/></svg><svg class="g" viewBox="0 -88 100 100"><path class="g43"/></svg><svg class="g" viewBox="0 -88 100 100"><path class="g164"/></svg></div>
<div class="t" style="left:1042px;top:344.5px;line-height:16px;font-size:14.5px;color:#e2de5a;">333.08%</div>
<div class="t" style="left:817px;top:384.5px;line-height:14px;font-size:10.5px;color:#dcdcdc;"><svg class="g" viewBox="0 -88 100 100"><path class="g19"/></svg><svg class="g" viewBox="0 -88 100 100"><path class="g20"/></svg><svg class="g" viewBox="0 -88 100 100"><path class="g96"/></svg><svg class="g" viewBox="0 -88 100 100"><path class="g48"/></svg></div>
<div class="t" style="left:817px;top:398.0px;line-height:14px;font-size:12.5px;color:#e2de5a;">154.73</div>
<div class="t" style="left:902px;top:384.5px;line-height:14px;font-size:10.5px;color:#dcdcdc;"><svg class="g" viewBox="0 -88 100 100"><path class="g58"/></svg><svg class="g" viewBox="0 -88 100 100"><path class="g163"/></svg><svg class="g" viewBox="0 -88 100 100"><path class="g96"/></svg><svg class="g" viewBox="0 -88 100 100"><path class="g48"/></svg></div>
<div class="t" style="left:902px;top:398.0px;line-height:14px;font-size:12.5px;color:#e2de5a;">4.42</div>
<div class="t" style="left:986px;top:384.5px;line-height:14px;font-size:10.5px;color:#dcdcdc;"><svg class="g" viewBox="0 -88 100 100"><path class="g105"/></svg><svg class="g" viewBox="0 -88 100 100"><path class="g163"/></svg><svg class="g" viewBox="0 -88 100 100"><path class="g96"/></svg><svg class="g" viewBox="0 -88 100 100"><path class="g48"/></svg></div>
<div class="t" style="left:986px;top:398.0px;line-height:14px;font-size:12.5px;color:#e2de5a;">22.10</div>
<div class="t" style="left:1071px;top:384.5px;line-height:14px;font-size:10.5px;color:#dcdcdc;"><svg class="g" viewBox="0 -88 100 100"><path class="g57"/></svg><svg class="g" viewBox="0 -88 100 100"><path class="g163"/></svg><svg class="g" viewBox="0 -88 100 100"><path class="g96"/></svg><svg class="g" viewBox="0 -88 100 100"><path class="g48"/></svg></div>
<div class="t" style="left:1071px;top:398.0px;line-height:14px;font-size:12.5px;color:#e2de5a;">97.26</div>
<div class="t" style="left:817px;top:417.5px;line-height:14px;font-size:10.5px;color:#dcdcdc;"><svg class="g" viewBox="0 -88 100 100"><path class="g19"/></svg><svg class="g" viewBox="0 -88 100 100"><path class="g20"/></svg><svg class="g" viewBox="0 -88 100 100"><path class="g56"/></svg><svg class="g" viewBox="0 -88 100 100"><path class="g48"/></svg></div>
<div class="t" style="left:817px;top:431.0px;line-height:14px;font-size:12.5px;color:#e2de5a;">10394</div>
<div class="t" style="left:902px;top:417.5px;line-height:14px;font-size:10.5px;color:#dcdcdc;"><svg class="g" viewBox="0 -88 100 100"><path class="g97"/></svg><svg class="g" viewBox="0 -88 100 100"><path class="g91"/></svg><svg class="g" viewBox="0 -88 100 100"><path class="g56"/></svg><svg class="g" viewBox="0 -88 100 100"><path class="g48"/></svg></div>
<div class="t" style="left:902px;top:431.0px;line-height:14px;font-size:12.5px;color:#e2de5a;">7237</div>
<div class="t" style="left:986px;top:417.5px;line-height:14px;font-size:10.5px;color:#dcdcdc;"><svg class="g" viewBox="0 -88 100 100"><path class="g84"/></svg><svg class="g" viewBox="0 -88 100 100"><path class="g167"/></svg><svg class="g" viewBox="0 -88 100 100"><path class="g56"/></svg><svg class="g" viewBox="0 -88 100 100"><path class="g48"/></svg></div>
<div class="t" style="left:986px;top:431.0px;line-height:14px;font-size:12.5px;color:#e2de5a;">3155</div>
<div class="t" style="left:1071px;top:417.5px;line-height:14px;font-size:10.5px;color:#dcdcdc;"><svg class="g" viewBox="0 -88 100 100"><path class="g19"/></svg><svg class="g" viewBox="0 -88 100 100"><path class="g20"/></svg><svg class="g" viewBox="0 -88 100 100"><path class="g168"/></svg><svg class="g" viewBox="0 -88 100 100"><path class="g98"/></svg></div>
<div class="t" style="left:1071px;top:431.0px;line-height:14px;font-size:12.5px;color:#e2de5a;">297<svg class="g" viewBox="0 -88 100 100"><path class="g56"/></svg>/<svg class="g" viewBox="0 -88 100 100"><path class="g103"/></svg></div>
<div class="t" style="left:817px;top:450.5px;line-height:14px;font-size:10.5px;color:#dcdcdc;"><svg class="g" viewBox="0 -88 100 100"><path class="g99"/></svg><svg class="g" viewBox="0 -88 100 100"><path class="g100"/></svg><svg class="g" viewBox="0 -88 100 100"><path class="g96"/></svg><svg class="g" viewBox="0 -88 100 100"><path class="g48"/></svg></div>
<div class="t" style="left:817px;top:464.0px;line-height:14px;font-size:12.5px;color:#e2de5a;">0.67</div>
<div class="t" style="left:902px;top:450.5px;line-height:14px;font-size:10.5px;color:#dcdcdc;"><svg class="g" viewBox="0 -88 100 100"><path class="g99"/></svg><svg class="g" viewBox="0 -88 100 100"><path class="g154"/></svg><svg class="g" viewBox="0 -88 100 100"><path class="g96"/></svg><svg class="g" viewBox="0 -88 100 100"><path class="g48"/></svg></div>
<div class="t" style="left:902px;top:464.0px;line-height:14px;font-size:12.5px;color:#e2de5a;">0.01</div>
<div class="t" style="left:979px;top:450.5px;line-height:14px;font-size:10.5px;color:#dcdcdc;"><svg class="g" viewBox="0 -88 100 100"><path class="g134"/></svg><svg class="g" viewBox="0 -88 100 100"><path class="g163"/></svg><svg class="g" viewBox="0 -88 100 100"><path class="g143"/></svg><svg class="g" viewBox="0 -88 100 100"><path class="g81"/></svg><svg class="g" viewBox="0 -88 100 100"><path class="g96"/></svg><svg class="g" viewBox="0 -88 100 100"><path class="g48"/></svg></div>
<div class="t" style="left:979px;top:464.0px;line-height:14px;font-size:12.5px;color:#e2de5a;">0.01</div>
<div class="t" style="left:1064px;top:450.5px;line-height:14px;font-size:10.5px;color:#dcdcdc;"><svg class="g" viewBox="0 -88 100 100"><path class="g54"/></svg><svg class="g" viewBox="0 -88 100 100"><path class="g96"/></svg><svg class="g" viewBox="0 -88 100 100"><path class="g134"/></svg><svg class="g" viewBox="0 -88 100 100"><path class="g163"/></svg><svg class="g" viewBox="0 -88 100 100"><path class="g97"/></svg><svg class="g" viewBox="0 -88 100 100"><path class="g84"/></svg></div>
<div class="t" style="left:1064px;top:464.0px;line-height:14px;font-size:12.5px;color:#e2de5a;">142.70</div>
<div class="t" style="left:817px;top:482.5px;line-height:14px;font-size:10.5px;color:#dcdcdc;"><svg class="g" viewBox="0 -88 100 100"><path class="g99"/></svg><svg class="g" viewBox="0 -88 100 100"><path class="g100"/></svg><svg class="g" viewBox="0 -88 100 100"><path class="g97"/></svg><svg class="g" viewBox="0 -88 100 100"><path class="g91"/></svg></div>
<div class="t" style="left:902px;top:482.5px;line-height:14px;font-size:10.5px;color:#dcdcdc;"><svg class="g" viewBox="0 -88 100 100"><path class="g99"/></svg><svg class="g" viewBox="0 -88 100 100"><path class="g100"/></svg><svg class="g" viewBox="0 -88 100 100"><path class="g84"/></svg><svg class="g" viewBox="0 -88 100 100"><path class="g167"/></svg></div>
<div class="t" style="left:986px;top:482.5px;line-height:14px;font-size:10.5px;color:#dcdcdc;"><svg class="g" viewBox="0 -88 100 100"><path class="g134"/></svg><svg class="g" viewBox="0 -88 100 100"><path class="g163"/></svg><svg class="g" viewBox="0 -88 100 100"><path class="g97"/></svg><svg class="g" viewBox="0 -88 100 100"><path class="g91"/></svg></div>
<div class="t" style="left:1071px;top:482.5px;line-height:14px;font-size:10.5px;color:#dcdcdc;"><svg class="g" viewBox="0 -88 100 100"><path class="g134"/></svg><svg class="g" viewBox="0 -88 100 100"><path class="g163"/></svg><svg class="g" viewBox="0 -88 100 100"><path class="g84"/></svg><svg class="g" viewBox="0 -88 100 100"><path class="g167"/></svg></div>
<div class="b" style="left:145px;top:495px;width:1099px;height:17px;background:#000"></div>
<div class="b" style="left:148px;top:494px;width:1096px;height:1px;background:#d8d8d8"></div>
<div class="b" style="left:149px;top:494px;width:1px;height:4px;background:#ddd"></div>
<div class="t" style="left:148px;top:495.5px;line-height:12px;font-size:9px;color:#f4f4f4;letter-spacing:0;-webkit-text-stroke:0.1px #f4f4f4;transform:scaleX(.925);transform-origin:0 0">12 Feb 2026</div>
<div class="b" style="left:205px;top:494px;width:1px;height:4px;background:#ddd"></div>
<div class="t" style="left:204px;top:495.5px;line-height:12px;font-size:9px;color:#f4f4f4;letter-spacing:0;-webkit-text-stroke:0.1px #f4f4f4;transform:scaleX(.925);transform-origin:0 0">13 Feb 16:00</div>
<div class="b" style="left:262px;top:494px;width:1px;height:4px;background:#ddd"></div>
<div class="t" style="left:261px;top:495.5px;line-height:12px;font-size:9px;color:#f4f4f4;letter-spacing:0;-webkit-text-stroke:0.1px #f4f4f4;transform:scaleX(.925);transform-origin:0 0">17 Feb 04:00</div>
<div class="b" style="left:318px;top:494px;width:1px;height:4px;background:#ddd"></div>
<div class="t" style="left:317px;top:495.5px;line-height:12px;font-size:9px;color:#f4f4f4;letter-spacing:0;-webkit-text-stroke:0.1px #f4f4f4;transform:scaleX(.925);transform-origin:0 0">18 Feb 13:00</div>
<div class="b" style="left:374px;top:494px;width:1px;height:4px;background:#ddd"></div>
<div class="t" style="left:373px;top:495.5px;line-height:12px;font-size:9px;color:#f4f4f4;letter-spacing:0;-webkit-text-stroke:0.1px #f4f4f4;transform:scaleX(.925);transform-origin:0 0">19 Feb 23:00</div>
<div class="b" style="left:430px;top:494px;width:1px;height:4px;background:#ddd"></div>
<div class="t" style="left:429px;top:495.5px;line-height:12px;font-size:9px;color:#f4f4f4;letter-spacing:0;-webkit-text-stroke:0.1px #f4f4f4;transform:scaleX(.925);transform-origin:0 0">23 Feb 08:00</div>
<div class="b" style="left:487px;top:494px;width:1px;height:4px;background:#ddd"></div>
<div class="t" style="left:486px;top:495.5px;line-height:12px;font-size:9px;color:#f4f4f4;letter-spacing:0;-webkit-text-stroke:0.1px #f4f4f4;transform:scaleX(.925);transform-origin:0 0">24 Feb 17:00</div>
<div class="b" style="left:543px;top:494px;width:1px;height:4px;background:#ddd"></div>
<div class="t" style="left:542px;top:495.5px;line-height:12px;font-size:9px;color:#f4f4f4;letter-spacing:0;-webkit-text-stroke:0.1px #f4f4f4;transform:scaleX(.925);transform-origin:0 0">26 Feb 03:00</div>
<div class="b" style="left:599px;top:494px;width:1px;height:4px;background:#ddd"></div>
<div class="t" style="left:598px;top:495.5px;line-height:12px;font-size:9px;color:#f4f4f4;letter-spacing:0;-webkit-text-stroke:0.1px #f4f4f4;transform:scaleX(.925);transform-origin:0 0">27 Feb 12:00</div>
<div class="b" style="left:656px;top:494px;width:1px;height:4px;background:#ddd"></div>
<div class="t" style="left:655px;top:495.5px;line-height:12px;font-size:9px;color:#f4f4f4;letter-spacing:0;-webkit-text-stroke:0.1px #f4f4f4;transform:scaleX(.925);transform-origin:0 0">2 Mar 21:00</div>
<div class="b" style="left:712px;top:494px;width:1px;height:4px;background:#ddd"></div>
<div class="t" style="left:711px;top:495.5px;line-height:12px;font-size:9px;color:#f4f4f4;letter-spacing:0;-webkit-text-stroke:0.1px #f4f4f4;transform:scaleX(.925);transform-origin:0 0">4 Mar 07:00</div>
<div class="b" style="left:768px;top:494px;width:1px;height:4px;background:#ddd"></div>
<div class="t" style="left:767px;top:495.5px;line-height:12px;font-size:9px;color:#f4f4f4;letter-spacing:0;-webkit-text-stroke:0.1px #f4f4f4;transform:scaleX(.925);transform-origin:0 0">5 Mar 16:00</div>
<div class="b" style="left:824px;top:494px;width:1px;height:4px;background:#ddd"></div>
<div class="t" style="left:823px;top:495.5px;line-height:12px;font-size:9px;color:#f4f4f4;letter-spacing:0;-webkit-text-stroke:0.1px #f4f4f4;transform:scaleX(.925);transform-origin:0 0">9 Mar 01:00</div>
<div class="b" style="left:881px;top:494px;width:1px;height:4px;background:#ddd"></div>
<div class="t" style="left:880px;top:495.5px;line-height:12px;font-size:9px;color:#f4f4f4;letter-spacing:0;-webkit-text-stroke:0.1px #f4f4f4;transform:scaleX(.925);transform-origin:0 0">10 Mar 10:00</div>
<div class="b" style="left:937px;top:494px;width:1px;height:4px;background:#ddd"></div>
<div class="t" style="left:936px;top:495.5px;line-height:12px;font-size:9px;color:#f4f4f4;letter-spacing:0;-webkit-text-stroke:0.1px #f4f4f4;transform:scaleX(.925);transform-origin:0 0">11 Mar 19:00</div>
<div class="b" style="left:993px;top:494px;width:1px;height:4px;background:#ddd"></div>
<div class="t" style="left:992px;top:495.5px;line-height:12px;font-size:9px;color:#f4f4f4;letter-spacing:0;-webkit-text-stroke:0.1px #f4f4f4;transform:scaleX(.925);transform-origin:0 0">13 Mar 05:00</div>
<div class="b" style="left:145px;top:512px;width:1135px;height:23px;background:#f0f0f0"></div>
<div class="b" style="left:145px;top:514px;width:1px;height:17px;background:#555"></div>
<div class="b" style="left:145px;top:514px;width:5px;height:1px;background:#555"></div>
<div class="b" style="left:230px;top:514px;width:1050px;height:2px;background:#333"></div>
<div class="b" style="left:150px;top:514px;width:82px;height:18px;background:#fff;border-bottom:2px solid #333;border-right:2px solid #333;border-left:2px solid #333"></div>
<div class="t" style="left:160px;top:516.0px;line-height:14px;font-size:11px;color:#222;letter-spacing:-0.2px">XAUUSD,H1</div>
<div class="t" style="left:239px;top:516.5px;line-height:14px;font-size:11px;color:#999;letter-spacing:-0.2px">XAUUSD,M15</div>
<div class="b" style="left:318px;top:517px;width:1px;height:13px;background:#888"></div>
<div class="t" style="left:327px;top:516.5px;line-height:14px;font-size:11px;color:#999;letter-spacing:-0.2px">XAUUSD,M15</div>
<div class="b" style="left:406px;top:517px;width:1px;height:13px;background:#888"></div>
<div class="t" style="left:417px;top:516.5px;line-height:14px;font-size:11px;color:#999;letter-spacing:-0.2px">XAUUSD,M5</div>
<div class="b" style="left:491px;top:517px;width:1px;height:13px;background:#888"></div>
<div class="t" style="left:501px;top:516.5px;line-height:14px;font-size:11px;color:#999;letter-spacing:-0.2px">XAUUSD,M5</div>
<div class="b" style="left:575px;top:517px;width:1px;height:13px;background:#888"></div>
<div class="t" style="left:585px;top:516.5px;line-height:14px;font-size:11px;color:#999;letter-spacing:-0.2px">XAUUSD,H1</div>
<div class="b" style="left:656px;top:517px;width:1px;height:13px;background:#888"></div>
<svg style="left:1254px;top:519px" width="26" height="9"><path d="M4 0 L0 4 L4 8z" fill="#aaa"/><path d="M21 0 L25 4 L21 8z" fill="#aaa"/></svg>
<div class="b" style="left:0px;top:534px;width:1280px;height:2px;background:#d4d4d4"></div>
<div class="b" style="left:0px;top:536px;width:1280px;height:170px;background:#f0f0f0"></div>
<div class="b" style="left:0px;top:548px;width:6px;height:156px;background:#dce4ee"></div>
<svg style="left:0px;top:538px" width="5" height="5"><path d="M0 0 L5 5 M5 0 L0 5" stroke="#222" stroke-width="1.4"/></svg>
<div class="b" style="left:6px;top:536px;width:1261px;height:150px;background:#fff;border-left:1px solid #c8c8c8;border-top:1px solid #c8c8c8"></div>
<div class="b" style="left:7px;top:557px;width:1260px;height:1px;background:#dadada"></div>
<div class="b" style="left:140px;top:537px;width:1px;height:20px;background:#e4e4e4"></div>
<div class="b" style="left:328px;top:537px;width:1px;height:20px;background:#e4e4e4"></div>
<div class="b" style="left:421px;top:537px;width:1px;height:20px;background:#e4e4e4"></div>
<div class="b" style="left:493px;top:537px;width:1px;height:20px;background:#e4e4e4"></div>
<div class="b" style="left:586px;top:537px;width:1px;height:20px;background:#e4e4e4"></div>
<div class="b" style="left:691px;top:537px;width:1px;height:20px;background:#e4e4e4"></div>
<div class="b" style="left:795px;top:537px;width:1px;height:20px;background:#e4e4e4"></div>
<div class="b" style="left:897px;top:537px;width:1px;height:20px;background:#e4e4e4"></div>
<div class="b" style="left:1001px;top:537px;width:1px;height:20px;background:#e4e4e4"></div>
<div class="b" style="left:1105px;top:537px;width:1px;height:20px;background:#e4e4e4"></div>
<div class="t" style="left:12px;top:539.5px;line-height:14px;font-size:11px;color:#222"><svg class="g" viewBox="0 -88 100 100"><path class="g15"/></svg><svg class="g" viewBox="0 -88 100 100"><path class="g16"/></svg></div>
<div class="t" style="left:44px;top:540.0px;line-height:14px;font-size:9px;color:#777">/</div>
<div class="t" style="right:955px;top:539.5px;line-height:14px;font-size:11px;color:#222"><svg class="g" viewBox="0 -88 100 100"><path class="g30"/></svg><svg class="g" viewBox="0 -88 100 100"><path class="g169"/></svg></div>
<div class="t" style="right:862px;top:539.5px;line-height:14px;font-size:11px;color:#222"><svg class="g" viewBox="0 -88 100 100"><path class="g138"/></svg><svg class="g" viewBox="0 -88 100 100"><path class="g139"/></svg></div>
<div class="t" style="right:790px;top:539.5px;line-height:14px;font-size:11px;color:#222"><svg class="g" viewBox="0 -88 100 100"><path class="g96"/></svg><svg class="g" viewBox="0 -88 100 100"><path class="g48"/></svg></div>
<div class="t" style="right:697px;top:539.5px;line-height:14px;font-size:11px;color:#222"><svg class="g" viewBox="0 -88 100 100"><path class="g19"/></svg><svg class="g" viewBox="0 -88 100 100"><path class="g20"/></svg><svg class="g" viewBox="0 -88 100 100"><path class="g25"/></svg><svg class="g" viewBox="0 -88 100 100"><path class="g26"/></svg></div>
<div class="t" style="right:592px;top:539.5px;line-height:14px;font-size:11px;color:#222"><svg class="g" viewBox="0 -88 100 100"><path class="g24"/></svg><svg class="g" viewBox="0 -88 100 100"><path class="g170"/></svg></div>
<div class="t" style="right:488px;top:539.5px;line-height:14px;font-size:11px;color:#222"><svg class="g" viewBox="0 -88 100 100"><path class="g171"/></svg><svg class="g" viewBox="0 -88 100 100"><path class="g167"/></svg></div>
<div class="t" style="right:386px;top:539.5px;line-height:14px;font-size:11px;color:#222"><svg class="g" viewBox="0 -88 100 100"><path class="g171"/></svg><svg class="g" viewBox="0 -88 100 100"><path class="g97"/></svg></div>
<div class="t" style="right:282px;top:539.5px;line-height:14px;font-size:11px;color:#222"><svg class="g" viewBox="0 -88 100 100"><path class="g24"/></svg><svg class="g" viewBox="0 -88 100 100"><path class="g170"/></svg></div>
<div class="t" style="right:178px;top:539.5px;line-height:14px;font-size:11px;color:#222"><svg class="g" viewBox="0 -88 100 100"><path class="g172"/></svg><svg class="g" viewBox="0 -88 100 100"><path class="g144"/></svg><svg class="g" viewBox="0 -88 100 100"><path class="g173"/></svg></div>
<div class="t" style="right:16px;top:539.5px;line-height:14px;font-size:11px;color:#222"><svg class="g" viewBox="0 -88 100 100"><path class="g174"/></svg><svg class="g" viewBox="0 -88 100 100"><path class="g91"/></svg></div>
<div class="b" style="left:7px;top:557px;width:1260px;height:19px;background:#fff;border-bottom:1px solid #dedede"></div>
<div class="b" style="left:140px;top:557px;width:1px;height:19px;background:#dcdcdc"></div>
<div class="b" style="left:328px;top:557px;width:1px;height:19px;background:#dcdcdc"></div>
<div class="b" style="left:421px;top:557px;width:1px;height:19px;background:#dcdcdc"></div>
<div class="b" style="left:493px;top:557px;width:1px;height:19px;background:#dcdcdc"></div>
<div class="b" style="left:586px;top:557px;width:1px;height:19px;background:#dcdcdc"></div>
<div class="b" style="left:691px;top:557px;width:1px;height:19px;background:#dcdcdc"></div>
<div class="b" style="left:795px;top:557px;width:1px;height:19px;background:#dcdcdc"></div>
<div class="b" style="left:897px;top:557px;width:1px;height:19px;background:#dcdcdc"></div>
<div class="b" style="left:1001px;top:557px;width:1px;height:19px;background:#dcdcdc"></div>
<div class="b" style="left:1105px;top:557px;width:1px;height:19px;background:#dcdcdc"></div>
<svg style="left:10px;top:559px" width="13" height="15"><path d="M0.5 0.5 h7 l3 3 v10 h-10z" fill="#fff" stroke="#666"/><circle cx="9.5" cy="11.5" r="3" fill="#3a8ad8" stroke="#fff" stroke-width="0.8"/></svg>
<div class="t" style="left:27px;top:558.8px;line-height:14px;font-size:11px;color:#222">316350552</div>
<div class="t" style="right:955px;top:558.8px;line-height:14px;font-size:11px;color:#222">2026.03.13 18:00:50</div>
<div class="t" style="right:862px;top:558.8px;line-height:14px;font-size:11px;color:#222">buy</div>
<div class="t" style="right:790px;top:558.8px;line-height:14px;font-size:11px;color:#222">0.01</div>
<div class="t" style="right:697px;top:558.8px;line-height:14px;font-size:11px;color:#222">xauusd</div>
<div class="t" style="right:592px;top:558.8px;line-height:14px;font-size:11px;color:#222">5048.80</div>
<div class="t" style="right:488px;top:558.8px;line-height:14px;font-size:11px;color:#222">0.00</div>
<div class="t" style="right:386px;top:558.8px;line-height:14px;font-size:11px;color:#222">0.00</div>
<div class="t" style="right:282px;top:558.8px;line-height:14px;font-size:11px;color:#222">5021.89</div>
<div class="t" style="right:178px;top:558.8px;line-height:14px;font-size:11px;color:#222">-0.19</div>
<div class="t" style="right:35px;top:558.8px;line-height:14px;font-size:11px;color:#222">-26.91</div>
<svg style="left:1254px;top:563px" width="7" height="7"><path d="M0.5 0.5 L6.5 6.5 M6.5 0.5 L0.5 6.5" stroke="#8a8a8a" stroke-width="1.4"/></svg>
<div class="b" style="left:7px;top:576px;width:1260px;height:19px;background:#3176d0;border-bottom:1px solid #3176d0"></div>
<div class="b" style="left:140px;top:576px;width:1px;height:19px;background:#5a90d8"></div>
<div class="b" style="left:328px;top:576px;width:1px;height:19px;background:#5a90d8"></div>
<div class="b" style="left:421px;top:576px;width:1px;height:19px;background:#5a90d8"></div>
<div class="b" style="left:493px;top:576px;width:1px;height:19px;background:#5a90d8"></div>
<div class="b" style="left:586px;top:576px;width:1px;height:19px;background:#5a90d8"></div>
<div class="b" style="left:691px;top:576px;width:1px;height:19px;background:#5a90d8"></div>
<div class="b" style="left:795px;top:576px;width:1px;height:19px;background:#5a90d8"></div>
<div class="b" style="left:897px;top:576px;width:1px;height:19px;background:#5a90d8"></div>
<div class="b" style="left:1001px;top:576px;width:1px;height:19px;background:#5a90d8"></div>
<div class="b" style="left:1105px;top:576px;width:1px;height:19px;background:#5a90d8"></div>
<svg style="left:10px;top:578px" width="13" height="15"><path d="M0.5 0.5 h7 l3 3 v10 h-10z" fill="#fff" stroke="#666"/><circle cx="9.5" cy="11.5" r="3" fill="#3a8ad8" stroke="#fff" stroke-width="0.8"/></svg>
<div class="t" style="left:27px;top:577.3px;line-height:14px;font-size:11px;color:#fff">316355858</div>
<div class="t" style="right:955px;top:577.3px;line-height:14px;font-size:11px;color:#fff">2026.03.13 19:14:13</div>
<div class="t" style="right:862px;top:577.3px;line-height:14px;font-size:11px;color:#fff">buy</div>
<div class="t" style="right:790px;top:577.3px;line-height:14px;font-size:11px;color:#fff">0.02</div>
<div class="t" style="right:697px;top:577.3px;line-height:14px;font-size:11px;color:#fff">xauusd</div>
<div class="t" style="right:592px;top:577.3px;line-height:14px;font-size:11px;color:#fff">5039.12</div>
<div class="t" style="right:488px;top:577.3px;line-height:14px;font-size:11px;color:#fff">0.00</div>
<div class="t" style="right:386px;top:577.3px;line-height:14px;font-size:11px;color:#fff">0.00</div>
<div class="t" style="right:282px;top:577.3px;line-height:14px;font-size:11px;color:#fff">5021.89</div>
<div class="t" style="right:178px;top:577.3px;line-height:14px;font-size:11px;color:#fff">-0.38</div>
<div class="t" style="right:35px;top:577.3px;line-height:14px;font-size:11px;color:#fff">-34.46</div>
<svg style="left:1254px;top:582px" width="7" height="7"><path d="M0.5 0.5 L6.5 6.5 M6.5 0.5 L0.5 6.5" stroke="#d8c8a0" stroke-width="1.4"/></svg>
<div class="b" style="left:7px;top:594px;width:1260px;height:19px;background:#fff;border-bottom:1px solid #dedede"></div>
<div class="b" style="left:140px;top:594px;width:1px;height:19px;background:#dcdcdc"></div>
<div class="b" style="left:328px;top:594px;width:1px;height:19px;background:#dcdcdc"></div>
<div class="b" style="left:421px;top:594px;width:1px;height:19px;background:#dcdcdc"></div>
<div class="b" style="left:493px;top:594px;width:1px;height:19px;background:#dcdcdc"></div>
<div class="b" style="left:586px;top:594px;width:1px;height:19px;background:#dcdcdc"></div>
<div class="b" style="left:691px;top:594px;width:1px;height:19px;background:#dcdcdc"></div>
<div class="b" style="left:795px;top:594px;width:1px;height:19px;background:#dcdcdc"></div>
<div class="b" style="left:897px;top:594px;width:1px;height:19px;background:#dcdcdc"></div>
<div class="b" style="left:1001px;top:594px;width:1px;height:19px;background:#dcdcdc"></div>
<div class="b" style="left:1105px;top:594px;width:1px;height:19px;background:#dcdcdc"></div>
<svg style="left:10px;top:596px" width="13" height="15"><path d="M0.5 0.5 h7 l3 3 v10 h-10z" fill="#fff" stroke="#666"/><circle cx="9.5" cy="11.5" r="3" fill="#3a8ad8" stroke="#fff" stroke-width="0.8"/></svg>
<div class="t" style="left:27px;top:595.9px;line-height:14px;font-size:11px;color:#222">316358385</div>
<div class="t" style="right:955px;top:595.9px;line-height:14px;font-size:11px;color:#222">2026.03.13 19:53:45</div>
<div class="t" style="right:862px;top:595.9px;line-height:14px;font-size:11px;color:#222">buy</div>
<div class="t" style="right:790px;top:595.9px;line-height:14px;font-size:11px;color:#222">0.02</div>
<div class="t" style="right:697px;top:595.9px;line-height:14px;font-size:11px;color:#222">xauusd</div>
<div class="t" style="right:592px;top:595.9px;line-height:14px;font-size:11px;color:#222">5014.72</div>
<div class="t" style="right:488px;top:595.9px;line-height:14px;font-size:11px;color:#222">0.00</div>
<div class="t" style="right:386px;top:595.9px;line-height:14px;font-size:11px;color:#222">0.00</div>
<div class="t" style="right:282px;top:595.9px;line-height:14px;font-size:11px;color:#222">5021.89</div>
<div class="t" style="right:178px;top:595.9px;line-height:14px;font-size:11px;color:#222">-0.38</div>
<div class="t" style="right:35px;top:595.9px;line-height:14px;font-size:11px;color:#222">14.34</div>
<svg style="left:1254px;top:600px" width="7" height="7"><path d="M0.5 0.5 L6.5 6.5 M6.5 0.5 L0.5 6.5" stroke="#8a8a8a" stroke-width="1.4"/></svg>
<div class="b" style="left:7px;top:613px;width:1260px;height:19px;background:#ececec;border-bottom:1px solid #dedede"></div>
<div class="b" style="left:140px;top:613px;width:1px;height:19px;background:#dcdcdc"></div>
<div class="b" style="left:328px;top:613px;width:1px;height:19px;background:#dcdcdc"></div>
<div class="b" style="left:421px;top:613px;width:1px;height:19px;background:#dcdcdc"></div>
<div class="b" style="left:493px;top:613px;width:1px;height:19px;background:#dcdcdc"></div>
<div class="b" style="left:586px;top:613px;width:1px;height:19px;background:#dcdcdc"></div>
<div class="b" style="left:691px;top:613px;width:1px;height:19px;background:#dcdcdc"></div>
<div class="b" style="left:795px;top:613px;width:1px;height:19px;background:#dcdcdc"></div>
<div class="b" style="left:897px;top:613px;width:1px;height:19px;background:#dcdcdc"></div>
<div class="b" style="left:1001px;top:613px;width:1px;height:19px;background:#dcdcdc"></div>
<div class="b" style="left:1105px;top:613px;width:1px;height:19px;background:#dcdcdc"></div>
<svg style="left:10px;top:615px" width="13" height="15"><path d="M0.5 0.5 h7 l3 3 v10 h-10z" fill="#fff" stroke="#666"/><circle cx="9.5" cy="11.5" r="3" fill="#e0502a" stroke="#fff" stroke-width="0.8"/></svg>
<div class="t" style="left:27px;top:614.4px;line-height:14px;font-size:11px;color:#222">316375578</div>
<div class="t" style="right:955px;top:614.4px;line-height:14px;font-size:11px;color:#222">2026.03.15 22:20:23</div>
<div class="t" style="right:862px;top:614.4px;line-height:14px;font-size:11px;color:#222">sell</div>
<div class="t" style="right:790px;top:614.4px;line-height:14px;font-size:11px;color:#222">0.01</div>
<div class="t" style="right:697px;top:614.4px;line-height:14px;font-size:11px;color:#222">xauusd</div>
<div class="t" style="right:592px;top:614.4px;line-height:14px;font-size:11px;color:#222">5006.33</div>
<div class="t" style="right:488px;top:614.4px;line-height:14px;font-size:11px;color:#222">0.00</div>
<div class="t" style="right:386px;top:614.4px;line-height:14px;font-size:11px;color:#222">0.00</div>
<div class="t" style="right:282px;top:614.4px;line-height:14px;font-size:11px;color:#222">5022.19</div>
<div class="t" style="right:178px;top:614.4px;line-height:14px;font-size:11px;color:#222">0.00</div>
<div class="t" style="right:35px;top:614.4px;line-height:14px;font-size:11px;color:#222">-15.86</div>
<svg style="left:1254px;top:619px" width="7" height="7"><path d="M0.5 0.5 L6.5 6.5 M6.5 0.5 L0.5 6.5" stroke="#8a8a8a" stroke-width="1.4"/></svg>
<div class="b" style="left:7px;top:631px;width:1260px;height:19px;background:#fff;border-bottom:1px solid #dedede"></div>
<div class="b" style="left:140px;top:631px;width:1px;height:19px;background:#dcdcdc"></div>
<div class="b" style="left:328px;top:631px;width:1px;height:19px;background:#dcdcdc"></div>
<div class="b" style="left:421px;top:631px;width:1px;height:19px;background:#dcdcdc"></div>
<div class="b" style="left:493px;top:631px;width:1px;height:19px;background:#dcdcdc"></div>
<div class="b" style="left:586px;top:631px;width:1px;height:19px;background:#dcdcdc"></div>
<div class="b" style="left:691px;top:631px;width:1px;height:19px;background:#dcdcdc"></div>
<div class="b" style="left:795px;top:631px;width:1px;height:19px;background:#dcdcdc"></div>
<div class="b" style="left:897px;top:631px;width:1px;height:19px;background:#dcdcdc"></div>
<div class="b" style="left:1001px;top:631px;width:1px;height:19px;background:#dcdcdc"></div>
<div class="b" style="left:1105px;top:631px;width:1px;height:19px;background:#dcdcdc"></div>
<svg style="left:10px;top:633px" width="13" height="15"><path d="M0.5 0.5 h7 l3 3 v10 h-10z" fill="#fff" stroke="#666"/><circle cx="9.5" cy="11.5" r="3" fill="#e0502a" stroke="#fff" stroke-width="0.8"/></svg>
<div class="t" style="left:27px;top:633.0px;line-height:14px;font-size:11px;color:#222">316376103</div>
<div class="t" style="right:955px;top:633.0px;line-height:14px;font-size:11px;color:#222">2026.03.15 22:23:58</div>
<div class="t" style="right:862px;top:633.0px;line-height:14px;font-size:11px;color:#222">sell</div>
<div class="t" style="right:790px;top:633.0px;line-height:14px;font-size:11px;color:#222">0.01</div>
<div class="t" style="right:697px;top:633.0px;line-height:14px;font-size:11px;color:#222">xauusd</div>
<div class="t" style="right:592px;top:633.0px;line-height:14px;font-size:11px;color:#222">5012.60</div>
<div class="t" style="right:488px;top:633.0px;line-height:14px;font-size:11px;color:#222">0.00</div>
<div class="t" style="right:386px;top:633.0px;line-height:14px;font-size:11px;color:#222">0.00</div>
<div class="t" style="right:282px;top:633.0px;line-height:14px;font-size:11px;color:#222">5022.19</div>
<div class="t" style="right:178px;top:633.0px;line-height:14px;font-size:11px;color:#222">0.00</div>
<div class="t" style="right:35px;top:633.0px;line-height:14px;font-size:11px;color:#222">-9.59</div>
<svg style="left:1254px;top:637px" width="7" height="7"><path d="M0.5 0.5 L6.5 6.5 M6.5 0.5 L0.5 6.5" stroke="#8a8a8a" stroke-width="1.4"/></svg>
<div class="b" style="left:7px;top:650px;width:1260px;height:19px;background:#ececec;border-bottom:1px solid #dedede"></div>
<div class="b" style="left:140px;top:650px;width:1px;height:19px;background:#dcdcdc"></div>
<div class="b" style="left:328px;top:650px;width:1px;height:19px;background:#dcdcdc"></div>
<div class="b" style="left:421px;top:650px;width:1px;height:19px;background:#dcdcdc"></div>
<div class="b" style="left:493px;top:650px;width:1px;height:19px;background:#dcdcdc"></div>
<div class="b" style="left:586px;top:650px;width:1px;height:19px;background:#dcdcdc"></div>
<div class="b" style="left:691px;top:650px;width:1px;height:19px;background:#dcdcdc"></div>
<div class="b" style="left:795px;top:650px;width:1px;height:19px;background:#dcdcdc"></div>
<div class="b" style="left:897px;top:650px;width:1px;height:19px;background:#dcdcdc"></div>
<div class="b" style="left:1001px;top:650px;width:1px;height:19px;background:#dcdcdc"></div>
<div class="b" style="left:1105px;top:650px;width:1px;height:19px;background:#dcdcdc"></div>
<svg style="left:10px;top:652px" width="13" height="15"><path d="M0.5 0.5 h7 l3 3 v10 h-10z" fill="#fff" stroke="#666"/><circle cx="9.5" cy="11.5" r="3" fill="#e0502a" stroke="#fff" stroke-width="0.8"/></svg>
<div class="t" style="left:27px;top:651.5px;line-height:14px;font-size:11px;color:#222">316377990</div>
<div class="t" style="right:955px;top:651.5px;line-height:14px;font-size:11px;color:#222">2026.03.15 22:48:42</div>
<div class="t" style="right:862px;top:651.5px;line-height:14px;font-size:11px;color:#222">sell</div>
<div class="t" style="right:790px;top:651.5px;line-height:14px;font-size:11px;color:#222">0.02</div>
<div class="t" style="right:697px;top:651.5px;line-height:14px;font-size:11px;color:#222">xauusd</div>
<div class="t" style="right:592px;top:651.5px;line-height:14px;font-size:11px;color:#222">5017.74</div>
<div class="t" style="right:488px;top:651.5px;line-height:14px;font-size:11px;color:#222">0.00</div>
<div class="t" style="right:386px;top:651.5px;line-height:14px;font-size:11px;color:#222">0.00</div>
<div class="t" style="right:282px;top:651.5px;line-height:14px;font-size:11px;color:#222">5022.19</div>
<div class="t" style="right:178px;top:651.5px;line-height:14px;font-size:11px;color:#222">0.00</div>
<div class="t" style="right:35px;top:651.5px;line-height:14px;font-size:11px;color:#222">-8.90</div>
<svg style="left:1254px;top:656px" width="7" height="7"><path d="M0.5 0.5 L6.5 6.5 M6.5 0.5 L0.5 6.5" stroke="#8a8a8a" stroke-width="1.4"/></svg>
<div class="b" style="left:7px;top:668px;width:1260px;height:19px;background:#fff;border-bottom:1px solid #dedede"></div>
<div class="b" style="left:140px;top:668px;width:1px;height:19px;background:#dcdcdc"></div>
<div class="b" style="left:328px;top:668px;width:1px;height:19px;background:#dcdcdc"></div>
<div class="b" style="left:421px;top:668px;width:1px;height:19px;background:#dcdcdc"></div>
<div class="b" style="left:493px;top:668px;width:1px;height:19px;background:#dcdcdc"></div>
<div class="b" style="left:586px;top:668px;width:1px;height:19px;background:#dcdcdc"></div>
<div class="b" style="left:691px;top:668px;width:1px;height:19px;background:#dcdcdc"></div>
<div class="b" style="left:795px;top:668px;width:1px;height:19px;background:#dcdcdc"></div>
<div class="b" style="left:897px;top:668px;width:1px;height:19px;background:#dcdcdc"></div>
<div class="b" style="left:1001px;top:668px;width:1px;height:19px;background:#dcdcdc"></div>
<div class="b" style="left:1105px;top:668px;width:1px;height:19px;background:#dcdcdc"></div>
<svg style="left:10px;top:670px" width="13" height="15"><path d="M0.5 0.5 h7 l3 3 v10 h-10z" fill="#fff" stroke="#666"/><circle cx="9.5" cy="11.5" r="3" fill="#3a8ad8" stroke="#fff" stroke-width="0.8"/></svg>
<div class="t" style="left:27px;top:670.1px;line-height:14px;font-size:11px;color:#222">316378198</div>
<div class="t" style="right:955px;top:670.1px;line-height:14px;font-size:11px;color:#222">2026.03.15 22:51:36</div>
<div class="t" style="right:862px;top:670.1px;line-height:14px;font-size:11px;color:#222">buy</div>
<div class="t" style="right:790px;top:670.1px;line-height:14px;font-size:11px;color:#222">0.01</div>
<div class="t" style="right:697px;top:670.1px;line-height:14px;font-size:11px;color:#222">xauusd</div>
<div class="t" style="right:592px;top:670.1px;line-height:14px;font-size:11px;color:#222">5022.70</div>
<div class="t" style="right:488px;top:670.1px;line-height:14px;font-size:11px;color:#222">0.00</div>
<div class="t" style="right:386px;top:670.1px;line-height:14px;font-size:11px;color:#222">0.00</div>
<div class="t" style="right:282px;top:670.1px;line-height:14px;font-size:11px;color:#222">5021.89</div>
<div class="t" style="right:178px;top:670.1px;line-height:14px;font-size:11px;color:#222">0.00</div>
<div class="t" style="right:35px;top:670.1px;line-height:14px;font-size:11px;color:#222">-4.81</div>
<div class="b" style="left:7px;top:686px;width:1260px;height:18px;background:#c8c8c8"></div>
<svg style="left:10px;top:688px" width="11" height="14"><rect x="0.5" y="0.5" width="10" height="13" fill="#fff" stroke="#888"/><path d="M5.5 3 V9 M3 7 L5.5 10 L8 7" stroke="#d03a2a" stroke-width="2" fill="none"/></svg>
<div class="t" style="left:26px;top:687.5px;line-height:14px;font-size:11px;font-weight:bold;color:#111"><svg class="g" viewBox="0 -88 100 100"><path class="g175"/></svg><svg class="g" viewBox="0 -88 100 100"><path class="g176"/></svg>: 72 079.32 USD &nbsp;<svg class="g" viewBox="0 -88 100 100"><path class="g177"/></svg><svg class="g" viewBox="0 -88 100 100"><path class="g178"/></svg>: 71 993.18 &nbsp;<svg class="g" viewBox="0 -88 100 100"><path class="g179"/></svg><svg class="g" viewBox="0 -88 100 100"><path class="g180"/></svg><svg class="g" viewBox="0 -88 100 100"><path class="g181"/></svg><svg class="g" viewBox="0 -88 100 100"><path class="g182"/></svg><svg class="g" viewBox="0 -88 100 100"><path class="g183"/></svg>: 10.00 &nbsp;<svg class="g" viewBox="0 -88 100 100"><path class="g184"/></svg><svg class="g" viewBox="0 -88 100 100"><path class="g180"/></svg><svg class="g" viewBox="0 -88 100 100"><path class="g181"/></svg><svg class="g" viewBox="0 -88 100 100"><path class="g182"/></svg><svg class="g" viewBox="0 -88 100 100"><path class="g183"/></svg>: 71 983.18 &nbsp;<svg class="g" viewBox="0 -88 100 100"><path class="g181"/></svg><svg class="g" viewBox="0 -88 100 100"><path class="g182"/></svg><svg class="g" viewBox="0 -88 100 100"><path class="g183"/></svg><svg class="g" viewBox="0 -88 100 100"><path class="g185"/></svg><svg class="g" viewBox="0 -88 100 100"><path class="g186"/></svg>: 719931.80%</div>
<div class="t" style="right:35px;top:688.0px;line-height:14px;font-size:11px;font-weight:bold;color:#111">-86.14</div>
<div class="b" style="left:1267px;top:536px;width:13px;height:170px;background:#f0f0f0"></div>
<svg style="left:1270px;top:542px" width="8" height="5"><path d="M0 5 L4 1 L8 5" stroke="#333" stroke-width="1.3" fill="none"/></svg>
<div class="b" style="left:1268px;top:580px;width:11px;height:117px;background:#cdcdcd"></div>
<svg style="left:1270px;top:702px" width="8" height="5"><path d="M0 0 L4 4 L8 0" stroke="#333" stroke-width="1.3" fill="none"/></svg>
<div class="b" style="left:0px;top:704px;width:1280px;height:20px;background:#f0f0f0"></div>
<div class="b" style="left:6px;top:704px;width:1261px;height:8px;background:#fafafa"></div>
<div class="b" style="left:0px;top:548px;width:6px;height:161px;background:#d8e2ee"></div>
<div class="b" style="left:9px;top:711px;width:38px;height:13px;background:#fff;border-left:1px solid #555"></div>
<div class="b" style="left:47px;top:711px;width:1233px;height:2px;background:#444"></div>
<div class="b" style="left:47px;top:711px;width:2px;height:13px;background:#444"></div>
<div class="t" style="left:18px;top:715.0px;line-height:14px;font-size:11px;color:#222"><svg class="g" viewBox="0 -88 100 100"><path class="g19"/></svg><svg class="g" viewBox="0 -88 100 100"><path class="g20"/></svg></div>
<div class="t" style="left:57px;top:715.0px;line-height:14px;font-size:11px;color:#a0a0a0"><svg class="g" viewBox="0 -88 100 100"><path class="g187"/></svg><svg class="g" viewBox="0 -88 100 100"><path class="g3"/></svg></div>
<div class="b" style="left:86px;top:716px;width:1px;height:8px;background:#888"></div>
<div class="t" style="left:96px;top:715.0px;line-height:14px;font-size:11px;color:#a0a0a0"><svg class="g" viewBox="0 -88 100 100"><path class="g33"/></svg><svg class="g" viewBox="0 -88 100 100"><path class="g34"/></svg><svg class="g" viewBox="0 -88 100 100"><path class="g122"/></svg><svg class="g" viewBox="0 -88 100 100"><path class="g123"/></svg></div>
<div class="b" style="left:145px;top:716px;width:1px;height:8px;background:#888"></div>
<div class="t" style="left:153px;top:715.0px;line-height:14px;font-size:11px;color:#a0a0a0"><svg class="g" viewBox="0 -88 100 100"><path class="g14"/></svg><svg class="g" viewBox="0 -88 100 100"><path class="g188"/></svg></div>
<div class="b" style="left:184px;top:716px;width:1px;height:8px;background:#888"></div>
<div class="t" style="left:193px;top:715.0px;line-height:14px;font-size:11px;color:#a0a0a0"><svg class="g" viewBox="0 -88 100 100"><path class="g85"/></svg><svg class="g" viewBox="0 -88 100 100"><path class="g23"/></svg></div>
<div class="b" style="left:223px;top:716px;width:1px;height:8px;background:#888"></div>
<div class="t" style="left:232px;top:715.0px;line-height:14px;font-size:11px;color:#a0a0a0"><svg class="g" viewBox="0 -88 100 100"><path class="g189"/></svg><svg class="g" viewBox="0 -88 100 100"><path class="g190"/></svg></div>
<div class="b" style="left:268px;top:716px;width:1px;height:8px;background:#888"></div>
<div class="t" style="left:277px;top:715.0px;line-height:14px;font-size:11px;color:#a0a0a0"><svg class="g" viewBox="0 -88 100 100"><path class="g21"/></svg><svg class="g" viewBox="0 -88 100 100"><path class="g22"/></svg></div>
<div class="b" style="left:323px;top:716px;width:1px;height:8px;background:#888"></div>
<div class="t" style="left:333px;top:715.0px;line-height:14px;font-size:11px;color:#a0a0a0"><svg class="g" viewBox="0 -88 100 100"><path class="g75"/></svg><svg class="g" viewBox="0 -88 100 100"><path class="g109"/></svg></div>
<div class="b" style="left:363px;top:716px;width:1px;height:8px;background:#888"></div>
<div class="t" style="left:372px;top:715.0px;line-height:14px;font-size:11px;color:#a0a0a0"><svg class="g" viewBox="0 -88 100 100"><path class="g0"/></svg><svg class="g" viewBox="0 -88 100 100"><path class="g191"/></svg></div>
<div class="b" style="left:402px;top:716px;width:1px;height:8px;background:#888"></div>
<div class="t" style="left:411px;top:715.0px;line-height:14px;font-size:11px;color:#a0a0a0"><svg class="g" viewBox="0 -88 100 100"><path class="g192"/></svg><svg class="g" viewBox="0 -88 100 100"><path class="g193"/></svg><svg class="g" viewBox="0 -88 100 100"><path class="g172"/></svg></div>
<div class="b" style="left:451px;top:716px;width:1px;height:8px;background:#888"></div>
<div class="t" style="left:460px;top:715.0px;line-height:14px;font-size:11px;color:#a0a0a0">EA</div>
<div class="b" style="left:482px;top:716px;width:1px;height:8px;background:#888"></div>
<div class="t" style="left:490px;top:715.0px;line-height:14px;font-size:11px;color:#a0a0a0"><svg class="g" viewBox="0 -88 100 100"><path class="g58"/></svg><svg class="g" viewBox="0 -88 100 100"><path class="g194"/></svg></div>
<div class="b" style="left:520px;top:716px;width:1px;height:8px;background:#888"></div>
<div class="t" style="left:257px;top:719.0px;line-height:8px;font-size:7px;color:#e02020">9</div>
<div class="t" style="left:301px;top:719.0px;line-height:8px;font-size:7px;color:#e02020">143</div>
<div class="t" style="left:0px;top:713.0px;line-height:10px;font-size:8px;color:#333"><svg class="g" viewBox="0 -88 100 100"><path class="g195"/></svg></div>
<svg style="left:1155px;top:672px" width="110" height="36"><path d="M16 3 C26 3 31 10 30 18 C29 25 24 27 18 28 L14 31 L15 28 C7 27 4 22 4 15 C4 8 9 3 16 3z" fill="#fff"/><path d="M24 5 C30 10 31 18 28 23 C25 27 20 27 16 29 L13 31" fill="none" stroke="#1a1a1a" stroke-width="1.5"/><path d="M20 8 C16 8 15 10 14 14 L11 28 M10 15 H18" fill="none" stroke="#1a1a1a" stroke-width="1.6"/></svg>
<div class="t" style="left:1190px;top:672.0px;line-height:30px;font-size:26px;color:#fff;text-shadow:1px 1px 0 #1a1a1a,-0.5px -0.5px 0 #888">@</div>
<div class="t" style="left:1217px;top:672.0px;line-height:30px;font-size:22px;color:#fff;filter:drop-shadow(1px 1px 0 #1a1a1a) drop-shadow(-0.5px 0 0 #666)"><svg class="g" viewBox="0 -88 100 100"><path class="g148"/></svg><svg class="g" viewBox="0 -88 100 100"><path class="g196"/></svg></div></body></html>
